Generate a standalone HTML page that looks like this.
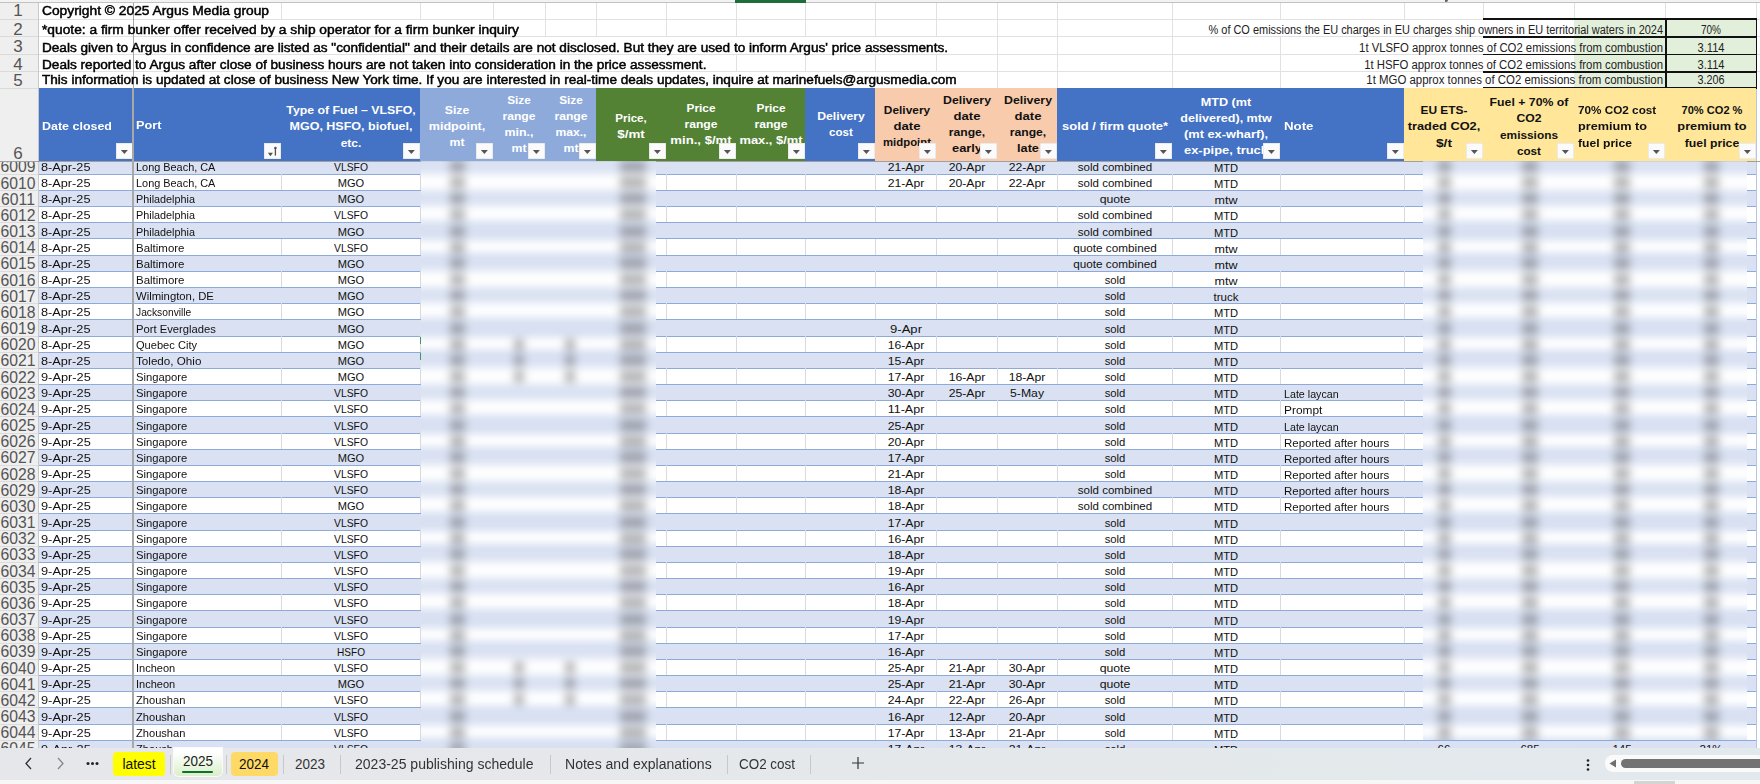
<!DOCTYPE html>
<html><head><meta charset="utf-8"><style>
html,body{margin:0;padding:0;}
body{width:1760px;height:784px;position:relative;overflow:hidden;background:#fff;font-family:"Liberation Sans", sans-serif;}
.t{position:absolute;white-space:nowrap;line-height:1;}
.t span{display:inline-block;}
</style></head><body>
<div style="position:absolute;left:0px;top:0px;width:1760px;height:2px;background:#f3f3f3;"></div><div style="position:absolute;left:0px;top:2px;width:1760px;height:1px;background:#c2c2c2;"></div><div style="position:absolute;left:735px;top:0px;width:71px;height:2.5px;background:#1e6e3c;"></div><div style="position:absolute;left:1444.5px;top:0px;width:3.5px;height:2.2px;background:#3a3a3a;border-radius:0 0 3px 1px;opacity:0.8"></div><div style="position:absolute;left:0px;top:3px;width:38px;height:745px;background:#efefef;"></div><div style="position:absolute;left:38px;top:3px;width:1px;height:745px;background:#c9c9c9;"></div><div style="position:absolute;left:39px;top:19.0px;width:1721px;height:1px;background:#e1e1e1;"></div><div style="position:absolute;left:0px;top:19.0px;width:38px;height:1px;background:#dadada;"></div><div style="position:absolute;left:39px;top:36.25px;width:1721px;height:1px;background:#e1e1e1;"></div><div style="position:absolute;left:0px;top:36.25px;width:38px;height:1px;background:#dadada;"></div><div style="position:absolute;left:39px;top:53.75px;width:1721px;height:1px;background:#e1e1e1;"></div><div style="position:absolute;left:0px;top:53.75px;width:38px;height:1px;background:#dadada;"></div><div style="position:absolute;left:39px;top:71.0px;width:1721px;height:1px;background:#e1e1e1;"></div><div style="position:absolute;left:0px;top:71.0px;width:38px;height:1px;background:#dadada;"></div><div style="position:absolute;left:0px;top:88px;width:38px;height:1px;background:#dadada;"></div><div style="position:absolute;left:280.5px;top:3px;width:1px;height:16.5px;background:#e1e1e1;"></div><div style="position:absolute;left:419.5px;top:3px;width:1px;height:16.5px;background:#e1e1e1;"></div><div style="position:absolute;left:492.5px;top:3px;width:1px;height:16.5px;background:#e1e1e1;"></div><div style="position:absolute;left:544.5px;top:3px;width:1px;height:16.5px;background:#e1e1e1;"></div><div style="position:absolute;left:595.5px;top:3px;width:1px;height:16.5px;background:#e1e1e1;"></div><div style="position:absolute;left:665.5px;top:3px;width:1px;height:16.5px;background:#e1e1e1;"></div><div style="position:absolute;left:735.5px;top:3px;width:1px;height:16.5px;background:#e1e1e1;"></div><div style="position:absolute;left:804.5px;top:3px;width:1px;height:16.5px;background:#e1e1e1;"></div><div style="position:absolute;left:874.5px;top:3px;width:1px;height:16.5px;background:#e1e1e1;"></div><div style="position:absolute;left:935.5px;top:3px;width:1px;height:16.5px;background:#e1e1e1;"></div><div style="position:absolute;left:996.5px;top:3px;width:1px;height:16.5px;background:#e1e1e1;"></div><div style="position:absolute;left:1056.5px;top:3px;width:1px;height:16.5px;background:#e1e1e1;"></div><div style="position:absolute;left:1171.5px;top:3px;width:1px;height:16.5px;background:#e1e1e1;"></div><div style="position:absolute;left:1279.5px;top:3px;width:1px;height:16.5px;background:#e1e1e1;"></div><div style="position:absolute;left:1403.5px;top:3px;width:1px;height:16.5px;background:#e1e1e1;"></div><div style="position:absolute;left:1482.5px;top:3px;width:1px;height:16.5px;background:#e1e1e1;"></div><div style="position:absolute;left:1573.5px;top:3px;width:1px;height:16.5px;background:#e1e1e1;"></div><div style="position:absolute;left:1664.5px;top:3px;width:1px;height:16.5px;background:#e1e1e1;"></div><div style="position:absolute;left:1755.5px;top:3px;width:1px;height:16.5px;background:#e1e1e1;"></div><div style="position:absolute;left:544.5px;top:19.5px;width:1px;height:17.25px;background:#e1e1e1;"></div><div style="position:absolute;left:595.5px;top:19.5px;width:1px;height:17.25px;background:#e1e1e1;"></div><div style="position:absolute;left:665.5px;top:19.5px;width:1px;height:17.25px;background:#e1e1e1;"></div><div style="position:absolute;left:735.5px;top:19.5px;width:1px;height:17.25px;background:#e1e1e1;"></div><div style="position:absolute;left:804.5px;top:19.5px;width:1px;height:17.25px;background:#e1e1e1;"></div><div style="position:absolute;left:874.5px;top:19.5px;width:1px;height:17.25px;background:#e1e1e1;"></div><div style="position:absolute;left:935.5px;top:19.5px;width:1px;height:17.25px;background:#e1e1e1;"></div><div style="position:absolute;left:996.5px;top:19.5px;width:1px;height:17.25px;background:#e1e1e1;"></div><div style="position:absolute;left:1056.5px;top:19.5px;width:1px;height:17.25px;background:#e1e1e1;"></div><div style="position:absolute;left:1171.5px;top:19.5px;width:1px;height:17.25px;background:#e1e1e1;"></div><div style="position:absolute;left:996.5px;top:36.75px;width:1px;height:17.5px;background:#e1e1e1;"></div><div style="position:absolute;left:1056.5px;top:36.75px;width:1px;height:17.5px;background:#e1e1e1;"></div><div style="position:absolute;left:1171.5px;top:36.75px;width:1px;height:17.5px;background:#e1e1e1;"></div><div style="position:absolute;left:1279.5px;top:36.75px;width:1px;height:17.5px;background:#e1e1e1;"></div><div style="position:absolute;left:735.5px;top:54.25px;width:1px;height:17.25px;background:#e1e1e1;"></div><div style="position:absolute;left:804.5px;top:54.25px;width:1px;height:17.25px;background:#e1e1e1;"></div><div style="position:absolute;left:874.5px;top:54.25px;width:1px;height:17.25px;background:#e1e1e1;"></div><div style="position:absolute;left:935.5px;top:54.25px;width:1px;height:17.25px;background:#e1e1e1;"></div><div style="position:absolute;left:996.5px;top:54.25px;width:1px;height:17.25px;background:#e1e1e1;"></div><div style="position:absolute;left:1056.5px;top:54.25px;width:1px;height:17.25px;background:#e1e1e1;"></div><div style="position:absolute;left:1171.5px;top:54.25px;width:1px;height:17.25px;background:#e1e1e1;"></div><div style="position:absolute;left:1279.5px;top:54.25px;width:1px;height:17.25px;background:#e1e1e1;"></div><div style="position:absolute;left:996.5px;top:71.5px;width:1px;height:17.0px;background:#e1e1e1;"></div><div style="position:absolute;left:1056.5px;top:71.5px;width:1px;height:17.0px;background:#e1e1e1;"></div><div style="position:absolute;left:1171.5px;top:71.5px;width:1px;height:17.0px;background:#e1e1e1;"></div><div style="position:absolute;left:1279.5px;top:71.5px;width:1px;height:17.0px;background:#e1e1e1;"></div><div style="position:absolute;left:132.5px;top:3px;width:1px;height:745px;background:#a6a6a6;"></div><div style="position:absolute;left:1574px;top:19px;width:182px;height:69px;background:#e2efda;"></div><div style="position:absolute;left:1483px;top:18.0px;width:274px;height:1.6px;background:#111;"></div><div style="position:absolute;left:1483px;top:36.0px;width:274px;height:1.6px;background:#111;"></div><div style="position:absolute;left:1483px;top:53.5px;width:274px;height:1.6px;background:#111;"></div><div style="position:absolute;left:1483px;top:71.0px;width:274px;height:1.6px;background:#111;"></div><div style="position:absolute;left:1483px;top:87.0px;width:274px;height:1.6px;background:#111;"></div><div style="position:absolute;left:1665px;top:18px;width:1.5px;height:70px;background:#111;"></div><div style="position:absolute;left:1755.5px;top:18px;width:1.6px;height:71px;background:#111;"></div><div class="t" style="left:42px;top:5.00px;font-size:12px;font-weight:normal;color:#000;-webkit-text-stroke:0.45px #000;"><span style="transform:scaleX(1.1486);transform-origin:left">Copyright © 2025 Argus Media group</span></div><div class="t" style="left:42px;top:24.00px;font-size:12px;font-weight:normal;color:#000;-webkit-text-stroke:0.45px #000;"><span style="transform:scaleX(1.1466);transform-origin:left">*quote: a firm bunker offer received by a ship operator for a firm bunker inquiry</span></div><div class="t" style="left:42px;top:42.00px;font-size:12px;font-weight:normal;color:#000;-webkit-text-stroke:0.45px #000;"><span style="transform:scaleX(1.1326);transform-origin:left">Deals given to Argus in confidence are listed as "confidential" and their details are not disclosed. But they are used to inform Argus' price assessments.</span></div><div class="t" style="left:42px;top:59.00px;font-size:12px;font-weight:normal;color:#000;-webkit-text-stroke:0.45px #000;"><span style="transform:scaleX(1.1345);transform-origin:left">Deals reported to Argus after close of business hours are not taken into consideration in the price assessment.</span></div><div class="t" style="left:42px;top:74.00px;font-size:12px;font-weight:normal;color:#000;-webkit-text-stroke:0.45px #000;"><span style="transform:scaleX(1.1312);transform-origin:left">This information is updated at close of business New York time. If you are interested in real-time deals updates, inquire at marinefuels@argusmedia.com</span></div><div class="t" style="left:1662.5px;top:24.00px;font-size:12px;font-weight:normal;color:#222;"><span style="transform:translateX(-100%) scaleX(0.9122);transform-origin:right">% of CO emissions the EU charges in EU charges ship owners in EU territorial waters in 2024</span></div><div class="t" style="left:1662.5px;top:42.00px;font-size:12px;font-weight:normal;color:#222;"><span style="transform:translateX(-100%) scaleX(0.9433);transform-origin:right">1t VLSFO approx tonnes of CO2 emissions from combustion</span></div><div class="t" style="left:1662.5px;top:59.00px;font-size:12px;font-weight:normal;color:#222;"><span style="transform:translateX(-100%) scaleX(0.9451);transform-origin:right">1t HSFO approx tonnes of CO2 emissions from combustion</span></div><div class="t" style="left:1662.5px;top:74.00px;font-size:12px;font-weight:normal;color:#222;"><span style="transform:translateX(-100%) scaleX(0.9526);transform-origin:right">1t MGO approx tonnes of CO2 emissions from combustion</span></div><div class="t" style="left:1711px;top:24.00px;font-size:12px;font-weight:normal;color:#222;"><span style="transform:translateX(-50%) scaleX(0.8322);transform-origin:center">70%</span></div><div class="t" style="left:1711px;top:42.00px;font-size:12px;font-weight:normal;color:#222;"><span style="transform:translateX(-50%) scaleX(0.9265);transform-origin:center">3.114</span></div><div class="t" style="left:1711px;top:59.00px;font-size:12px;font-weight:normal;color:#222;"><span style="transform:translateX(-50%) scaleX(0.9265);transform-origin:center">3.114</span></div><div class="t" style="left:1711px;top:74.00px;font-size:12px;font-weight:normal;color:#222;"><span style="transform:translateX(-50%) scaleX(0.8991);transform-origin:center">3.206</span></div><div class="t" style="left:18px;top:2.00px;font-size:17px;font-weight:normal;color:#555;"><span style="transform:translateX(-50%) scaleX(1.0000);transform-origin:center">1</span></div><div class="t" style="left:18px;top:21.00px;font-size:17px;font-weight:normal;color:#555;"><span style="transform:translateX(-50%) scaleX(1.0000);transform-origin:center">2</span></div><div class="t" style="left:18px;top:38.00px;font-size:17px;font-weight:normal;color:#555;"><span style="transform:translateX(-50%) scaleX(1.0000);transform-origin:center">3</span></div><div class="t" style="left:18px;top:56.00px;font-size:17px;font-weight:normal;color:#555;"><span style="transform:translateX(-50%) scaleX(1.0000);transform-origin:center">4</span></div><div class="t" style="left:18px;top:72.00px;font-size:17px;font-weight:normal;color:#555;"><span style="transform:translateX(-50%) scaleX(1.0000);transform-origin:center">5</span></div><div class="t" style="left:18px;top:145.00px;font-size:17px;font-weight:normal;color:#555;"><span style="transform:translateX(-50%) scaleX(1.0000);transform-origin:center">6</span></div><div style="position:absolute;left:39px;top:88px;width:94px;height:72.5px;background:#4472c4;"></div><div style="position:absolute;left:133px;top:88px;width:148px;height:72.5px;background:#4472c4;"></div><div style="position:absolute;left:281px;top:88px;width:139px;height:72.5px;background:#4472c4;"></div><div style="position:absolute;left:420px;top:88px;width:73px;height:72.5px;background:#8eaadb;"></div><div style="position:absolute;left:493px;top:88px;width:52px;height:72.5px;background:#8eaadb;"></div><div style="position:absolute;left:545px;top:88px;width:51px;height:72.5px;background:#8eaadb;"></div><div style="position:absolute;left:596px;top:88px;width:70px;height:72.5px;background:#548235;"></div><div style="position:absolute;left:666px;top:88px;width:70px;height:72.5px;background:#548235;"></div><div style="position:absolute;left:736px;top:88px;width:69px;height:72.5px;background:#548235;"></div><div style="position:absolute;left:805px;top:88px;width:70px;height:72.5px;background:#4472c4;"></div><div style="position:absolute;left:875px;top:88px;width:61px;height:72.5px;background:#f8cbad;"></div><div style="position:absolute;left:936px;top:88px;width:61px;height:72.5px;background:#f8cbad;"></div><div style="position:absolute;left:997px;top:88px;width:60px;height:72.5px;background:#f8cbad;"></div><div style="position:absolute;left:1057px;top:88px;width:115px;height:72.5px;background:#4472c4;"></div><div style="position:absolute;left:1172px;top:88px;width:108px;height:72.5px;background:#4472c4;"></div><div style="position:absolute;left:1280px;top:88px;width:124px;height:72.5px;background:#4472c4;"></div><div style="position:absolute;left:1404px;top:88px;width:79px;height:72.5px;background:#ffe699;"></div><div style="position:absolute;left:1483px;top:88px;width:91px;height:72.5px;background:#ffe699;"></div><div style="position:absolute;left:1574px;top:88px;width:91px;height:72.5px;background:#ffe699;"></div><div style="position:absolute;left:1665px;top:88px;width:91px;height:72.5px;background:#ffe699;"></div><div style="position:absolute;left:1756px;top:88.5px;width:1px;height:660px;background:#b4c6e7;"></div><div style="position:absolute;left:0;top:0;width:1760px;height:784px;clip-path:inset(88px 1627px 623.5px 39px)"><div class="t" style="left:42px;top:121.00px;font-size:11.5px;font-weight:bold;color:#fff;"><span style="transform:scaleX(1.0842);transform-origin:left">Date closed</span></div></div><div style="position:absolute;left:0;top:0;width:1760px;height:784px;clip-path:inset(88px 1479px 623.5px 133px)"><div class="t" style="left:136.25px;top:120.00px;font-size:11.5px;font-weight:bold;color:#fff;"><span style="transform:scaleX(1.1043);transform-origin:left">Port</span></div></div><div style="position:absolute;left:0;top:0;width:1760px;height:784px;clip-path:inset(88px 1340px 623.5px 281px)"><div class="t" style="left:351.3px;top:105.00px;font-size:11.5px;font-weight:bold;color:#fff;"><span style="transform:translateX(-50%) scaleX(1.0676);transform-origin:center">Type of Fuel – VLSFO,</span></div><div class="t" style="left:351.3px;top:121.00px;font-size:11.5px;font-weight:bold;color:#fff;"><span style="transform:translateX(-50%) scaleX(1.0876);transform-origin:center">MGO, HSFO, biofuel,</span></div><div class="t" style="left:351.3px;top:138.00px;font-size:11.5px;font-weight:bold;color:#fff;"><span style="transform:translateX(-50%) scaleX(1.0389);transform-origin:center">etc.</span></div></div><div style="position:absolute;left:0;top:0;width:1760px;height:784px;clip-path:inset(88px 1267px 623.5px 420px)"><div class="t" style="left:457.3px;top:105.00px;font-size:11.5px;font-weight:bold;color:#fff;"><span style="transform:translateX(-50%) scaleX(1.0645);transform-origin:center">Size</span></div><div class="t" style="left:457.3px;top:121.00px;font-size:11.5px;font-weight:bold;color:#fff;"><span style="transform:translateX(-50%) scaleX(1.0918);transform-origin:center">midpoint,</span></div><div class="t" style="left:457.3px;top:137.00px;font-size:11.5px;font-weight:bold;color:#fff;"><span style="transform:translateX(-50%) scaleX(1.0667);transform-origin:center">mt</span></div></div><div style="position:absolute;left:0;top:0;width:1760px;height:784px;clip-path:inset(88px 1215px 623.5px 493px)"><div class="t" style="left:518.75px;top:95.00px;font-size:11.5px;font-weight:bold;color:#fff;"><span style="transform:translateX(-50%) scaleX(1.0210);transform-origin:center">Size</span></div><div class="t" style="left:518.75px;top:111.00px;font-size:11.5px;font-weight:bold;color:#fff;"><span style="transform:translateX(-50%) scaleX(1.0534);transform-origin:center">range</span></div><div class="t" style="left:518.75px;top:127.00px;font-size:11.5px;font-weight:bold;color:#fff;"><span style="transform:translateX(-50%) scaleX(1.0803);transform-origin:center">min.,</span></div><div class="t" style="left:518.75px;top:143.00px;font-size:11.5px;font-weight:bold;color:#fff;"><span style="transform:translateX(-50%) scaleX(1.0667);transform-origin:center">mt</span></div></div><div style="position:absolute;left:0;top:0;width:1760px;height:784px;clip-path:inset(88px 1164px 623.5px 545px)"><div class="t" style="left:570.5px;top:95.00px;font-size:11.5px;font-weight:bold;color:#fff;"><span style="transform:translateX(-50%) scaleX(1.0210);transform-origin:center">Size</span></div><div class="t" style="left:570.5px;top:111.00px;font-size:11.5px;font-weight:bold;color:#fff;"><span style="transform:translateX(-50%) scaleX(1.0534);transform-origin:center">range</span></div><div class="t" style="left:570.5px;top:127.00px;font-size:11.5px;font-weight:bold;color:#fff;"><span style="transform:translateX(-50%) scaleX(1.0536);transform-origin:center">max.,</span></div><div class="t" style="left:570.5px;top:143.00px;font-size:11.5px;font-weight:bold;color:#fff;"><span style="transform:translateX(-50%) scaleX(1.0667);transform-origin:center">mt</span></div></div><div style="position:absolute;left:0;top:0;width:1760px;height:784px;clip-path:inset(88px 1094px 623.5px 596px)"><div class="t" style="left:631px;top:113.00px;font-size:11.5px;font-weight:bold;color:#fff;"><span style="transform:translateX(-50%) scaleX(1.0055);transform-origin:center">Price,</span></div><div class="t" style="left:631px;top:129.00px;font-size:11.5px;font-weight:bold;color:#fff;"><span style="transform:translateX(-50%) scaleX(1.1625);transform-origin:center">$/mt</span></div></div><div style="position:absolute;left:0;top:0;width:1760px;height:784px;clip-path:inset(88px 1024px 623.5px 666px)"><div class="t" style="left:701.2px;top:103.00px;font-size:11.5px;font-weight:bold;color:#fff;"><span style="transform:translateX(-50%) scaleX(1.0305);transform-origin:center">Price</span></div><div class="t" style="left:701.2px;top:119.00px;font-size:11.5px;font-weight:bold;color:#fff;"><span style="transform:translateX(-50%) scaleX(1.0534);transform-origin:center">range</span></div><div class="t" style="left:701.2px;top:135.00px;font-size:11.5px;font-weight:bold;color:#fff;"><span style="transform:translateX(-50%) scaleX(1.1418);transform-origin:center">min., $/mt</span></div></div><div style="position:absolute;left:0;top:0;width:1760px;height:784px;clip-path:inset(88px 955px 623.5px 736px)"><div class="t" style="left:771px;top:103.00px;font-size:11.5px;font-weight:bold;color:#fff;"><span style="transform:translateX(-50%) scaleX(1.0305);transform-origin:center">Price</span></div><div class="t" style="left:771px;top:119.00px;font-size:11.5px;font-weight:bold;color:#fff;"><span style="transform:translateX(-50%) scaleX(1.0534);transform-origin:center">range</span></div><div class="t" style="left:771px;top:135.00px;font-size:11.5px;font-weight:bold;color:#fff;"><span style="transform:translateX(-50%) scaleX(1.1200);transform-origin:center">max., $/mt</span></div></div><div style="position:absolute;left:0;top:0;width:1760px;height:784px;clip-path:inset(88px 885px 623.5px 805px)"><div class="t" style="left:840.6px;top:111.00px;font-size:11.5px;font-weight:bold;color:#fff;"><span style="transform:translateX(-50%) scaleX(1.0611);transform-origin:center">Delivery</span></div><div class="t" style="left:840.6px;top:127.00px;font-size:11.5px;font-weight:bold;color:#fff;"><span style="transform:translateX(-50%) scaleX(1.0040);transform-origin:center">cost</span></div></div><div style="position:absolute;left:0;top:0;width:1760px;height:784px;clip-path:inset(88px 824px 623.5px 875px)"><div class="t" style="left:906.5px;top:105.00px;font-size:11.5px;font-weight:bold;color:#111;"><span style="transform:translateX(-50%) scaleX(1.0332);transform-origin:center">Delivery</span></div><div class="t" style="left:906.5px;top:121.00px;font-size:11.5px;font-weight:bold;color:#111;"><span style="transform:translateX(-50%) scaleX(1.1413);transform-origin:center">date</span></div><div class="t" style="left:906.5px;top:137.00px;font-size:11.5px;font-weight:bold;color:#111;"><span style="transform:translateX(-50%) scaleX(0.9887);transform-origin:center">midpoint</span></div></div><div style="position:absolute;left:0;top:0;width:1760px;height:784px;clip-path:inset(88px 763px 623.5px 936px)"><div class="t" style="left:967px;top:95.00px;font-size:11.5px;font-weight:bold;color:#111;"><span style="transform:translateX(-50%) scaleX(1.0723);transform-origin:center">Delivery</span></div><div class="t" style="left:967px;top:111.00px;font-size:11.5px;font-weight:bold;color:#111;"><span style="transform:translateX(-50%) scaleX(1.1413);transform-origin:center">date</span></div><div class="t" style="left:967px;top:127.00px;font-size:11.5px;font-weight:bold;color:#111;"><span style="transform:translateX(-50%) scaleX(1.0575);transform-origin:center">range,</span></div><div class="t" style="left:967px;top:143.00px;font-size:11.5px;font-weight:bold;color:#111;"><span style="transform:translateX(-50%) scaleX(1.1169);transform-origin:center">early</span></div></div><div style="position:absolute;left:0;top:0;width:1760px;height:784px;clip-path:inset(88px 703px 623.5px 997px)"><div class="t" style="left:1027.75px;top:95.00px;font-size:11.5px;font-weight:bold;color:#111;"><span style="transform:translateX(-50%) scaleX(1.0723);transform-origin:center">Delivery</span></div><div class="t" style="left:1027.75px;top:111.00px;font-size:11.5px;font-weight:bold;color:#111;"><span style="transform:translateX(-50%) scaleX(1.1413);transform-origin:center">date</span></div><div class="t" style="left:1027.75px;top:127.00px;font-size:11.5px;font-weight:bold;color:#111;"><span style="transform:translateX(-50%) scaleX(1.0575);transform-origin:center">range,</span></div><div class="t" style="left:1027.75px;top:143.00px;font-size:11.5px;font-weight:bold;color:#111;"><span style="transform:translateX(-50%) scaleX(1.1045);transform-origin:center">late</span></div></div><div style="position:absolute;left:0;top:0;width:1760px;height:784px;clip-path:inset(88px 588px 623.5px 1057px)"><div class="t" style="left:1114.6px;top:121.00px;font-size:11.5px;font-weight:bold;color:#fff;"><span style="transform:translateX(-50%) scaleX(1.1286);transform-origin:center">sold / firm quote*</span></div></div><div style="position:absolute;left:0;top:0;width:1760px;height:784px;clip-path:inset(88px 480px 623.5px 1172px)"><div class="t" style="left:1226px;top:97.00px;font-size:11.5px;font-weight:bold;color:#fff;"><span style="transform:translateX(-50%) scaleX(1.0978);transform-origin:center">MTD (mt</span></div><div class="t" style="left:1226px;top:113.00px;font-size:11.5px;font-weight:bold;color:#fff;"><span style="transform:translateX(-50%) scaleX(1.0929);transform-origin:center">delivered), mtw</span></div><div class="t" style="left:1226px;top:129.00px;font-size:11.5px;font-weight:bold;color:#fff;"><span style="transform:translateX(-50%) scaleX(1.1140);transform-origin:center">(mt ex-wharf),</span></div><div class="t" style="left:1226px;top:145.00px;font-size:11.5px;font-weight:bold;color:#fff;"><span style="transform:translateX(-50%) scaleX(1.1233);transform-origin:center">ex-pipe, truck</span></div></div><div style="position:absolute;left:0;top:0;width:1760px;height:784px;clip-path:inset(88px 356px 623.5px 1280px)"><div class="t" style="left:1283.5px;top:121.00px;font-size:11.5px;font-weight:bold;color:#fff;"><span style="transform:scaleX(1.1540);transform-origin:left">Note</span></div></div><div style="position:absolute;left:0;top:0;width:1760px;height:784px;clip-path:inset(88px 277px 623.5px 1404px)"><div class="t" style="left:1444.2px;top:105.00px;font-size:11.5px;font-weight:bold;color:#111;"><span style="transform:translateX(-50%) scaleX(1.0358);transform-origin:center">EU ETS-</span></div><div class="t" style="left:1444.2px;top:121.00px;font-size:11.5px;font-weight:bold;color:#111;"><span style="transform:translateX(-50%) scaleX(1.1122);transform-origin:center">traded CO2,</span></div><div class="t" style="left:1444.2px;top:138.00px;font-size:11.5px;font-weight:bold;color:#111;"><span style="transform:translateX(-50%) scaleX(1.1921);transform-origin:center">$/t</span></div></div><div style="position:absolute;left:0;top:0;width:1760px;height:784px;clip-path:inset(88px 186px 623.5px 1483px)"><div class="t" style="left:1529px;top:97.00px;font-size:11.5px;font-weight:bold;color:#111;"><span style="transform:translateX(-50%) scaleX(1.0669);transform-origin:center">Fuel + 70% of</span></div><div class="t" style="left:1529px;top:113.00px;font-size:11.5px;font-weight:bold;color:#111;"><span style="transform:translateX(-50%) scaleX(1.0568);transform-origin:center">CO2</span></div><div class="t" style="left:1529px;top:130.00px;font-size:11.5px;font-weight:bold;color:#111;"><span style="transform:translateX(-50%) scaleX(1.0311);transform-origin:center">emissions</span></div><div class="t" style="left:1529px;top:146.00px;font-size:11.5px;font-weight:bold;color:#111;"><span style="transform:translateX(-50%) scaleX(1.0145);transform-origin:center">cost</span></div></div><div style="position:absolute;left:0;top:0;width:1760px;height:784px;clip-path:inset(88px 95px 623.5px 1574px)"><div class="t" style="left:1578px;top:105.00px;font-size:11.5px;font-weight:bold;color:#111;"><span style="transform:scaleX(1.0202);transform-origin:left">70% CO2 cost</span></div><div class="t" style="left:1578px;top:121.00px;font-size:11.5px;font-weight:bold;color:#111;"><span style="transform:scaleX(1.1018);transform-origin:left">premium to</span></div><div class="t" style="left:1578px;top:138.00px;font-size:11.5px;font-weight:bold;color:#111;"><span style="transform:scaleX(1.0559);transform-origin:left">fuel price</span></div></div><div style="position:absolute;left:0;top:0;width:1760px;height:784px;clip-path:inset(88px 4px 623.5px 1665px)"><div class="t" style="left:1711.7px;top:105.00px;font-size:11.5px;font-weight:bold;color:#111;"><span style="transform:translateX(-50%) scaleX(0.9624);transform-origin:center">70% CO2 %</span></div><div class="t" style="left:1711.7px;top:121.00px;font-size:11.5px;font-weight:bold;color:#111;"><span style="transform:translateX(-50%) scaleX(1.1058);transform-origin:center">premium to</span></div><div class="t" style="left:1711.7px;top:138.00px;font-size:11.5px;font-weight:bold;color:#111;"><span style="transform:translateX(-50%) scaleX(1.0637);transform-origin:center">fuel price</span></div></div><div style="position:absolute;left:116px;top:142.5px;width:16.5px;height:16.5px;background:#fbfbfb;box-shadow:inset 0 0 0 0.5px #dcdcdc;overflow:hidden"><svg width="17" height="17" style="position:absolute;left:0;top:0"><path d="M4.9 7 L11.9 7 L8.4 11 Z" fill="#555"/></svg></div><div style="position:absolute;left:264px;top:142.5px;width:16.5px;height:16.5px;background:#fbfbfb;box-shadow:inset 0 0 0 0.5px #dcdcdc;overflow:hidden"><svg width="17" height="17" style="position:absolute;left:0;top:0"><path d="M3.9 9.8 L8.9 9.8 L6.4 13.2 Z" fill="#505050"/><path d="M11.4 5 L11.4 12.6" stroke="#505050" stroke-width="1.3"/><circle cx="11.4" cy="5" r="1.3" fill="#505050"/></svg></div><div style="position:absolute;left:403px;top:142.5px;width:16.5px;height:16.5px;background:#fbfbfb;box-shadow:inset 0 0 0 0.5px #dcdcdc;overflow:hidden"><svg width="17" height="17" style="position:absolute;left:0;top:0"><path d="M4.9 7 L11.9 7 L8.4 11 Z" fill="#555"/></svg></div><div style="position:absolute;left:476px;top:142.5px;width:16.5px;height:16.5px;background:#fbfbfb;box-shadow:inset 0 0 0 0.5px #dcdcdc;overflow:hidden"><svg width="17" height="17" style="position:absolute;left:0;top:0"><path d="M4.9 7 L11.9 7 L8.4 11 Z" fill="#555"/></svg></div><div style="position:absolute;left:528px;top:142.5px;width:16.5px;height:16.5px;background:#fbfbfb;box-shadow:inset 0 0 0 0.5px #dcdcdc;overflow:hidden"><svg width="17" height="17" style="position:absolute;left:0;top:0"><path d="M4.9 7 L11.9 7 L8.4 11 Z" fill="#555"/></svg></div><div style="position:absolute;left:579px;top:142.5px;width:16.5px;height:16.5px;background:#fbfbfb;box-shadow:inset 0 0 0 0.5px #dcdcdc;overflow:hidden"><svg width="17" height="17" style="position:absolute;left:0;top:0"><path d="M4.9 7 L11.9 7 L8.4 11 Z" fill="#555"/></svg></div><div style="position:absolute;left:649px;top:142.5px;width:16.5px;height:16.5px;background:#fbfbfb;box-shadow:inset 0 0 0 0.5px #dcdcdc;overflow:hidden"><svg width="17" height="17" style="position:absolute;left:0;top:0"><path d="M4.9 7 L11.9 7 L8.4 11 Z" fill="#555"/></svg></div><div style="position:absolute;left:719px;top:142.5px;width:16.5px;height:16.5px;background:#fbfbfb;box-shadow:inset 0 0 0 0.5px #dcdcdc;overflow:hidden"><svg width="17" height="17" style="position:absolute;left:0;top:0"><path d="M4.9 7 L11.9 7 L8.4 11 Z" fill="#555"/></svg></div><div style="position:absolute;left:788px;top:142.5px;width:16.5px;height:16.5px;background:#fbfbfb;box-shadow:inset 0 0 0 0.5px #dcdcdc;overflow:hidden"><svg width="17" height="17" style="position:absolute;left:0;top:0"><path d="M4.9 7 L11.9 7 L8.4 11 Z" fill="#555"/></svg></div><div style="position:absolute;left:858px;top:142.5px;width:16.5px;height:16.5px;background:#fbfbfb;box-shadow:inset 0 0 0 0.5px #dcdcdc;overflow:hidden"><svg width="17" height="17" style="position:absolute;left:0;top:0"><path d="M4.9 7 L11.9 7 L8.4 11 Z" fill="#555"/></svg></div><div style="position:absolute;left:919px;top:142.5px;width:16.5px;height:16.5px;background:#fbfbfb;box-shadow:inset 0 0 0 0.5px #dcdcdc;overflow:hidden"><svg width="17" height="17" style="position:absolute;left:0;top:0"><path d="M4.9 7 L11.9 7 L8.4 11 Z" fill="#555"/></svg></div><div style="position:absolute;left:980px;top:142.5px;width:16.5px;height:16.5px;background:#fbfbfb;box-shadow:inset 0 0 0 0.5px #dcdcdc;overflow:hidden"><svg width="17" height="17" style="position:absolute;left:0;top:0"><path d="M4.9 7 L11.9 7 L8.4 11 Z" fill="#555"/></svg></div><div style="position:absolute;left:1040px;top:142.5px;width:16.5px;height:16.5px;background:#fbfbfb;box-shadow:inset 0 0 0 0.5px #dcdcdc;overflow:hidden"><svg width="17" height="17" style="position:absolute;left:0;top:0"><path d="M4.9 7 L11.9 7 L8.4 11 Z" fill="#555"/></svg></div><div style="position:absolute;left:1155px;top:142.5px;width:16.5px;height:16.5px;background:#fbfbfb;box-shadow:inset 0 0 0 0.5px #dcdcdc;overflow:hidden"><svg width="17" height="17" style="position:absolute;left:0;top:0"><path d="M4.9 7 L11.9 7 L8.4 11 Z" fill="#555"/></svg></div><div style="position:absolute;left:1263px;top:142.5px;width:16.5px;height:16.5px;background:#fbfbfb;box-shadow:inset 0 0 0 0.5px #dcdcdc;overflow:hidden"><svg width="17" height="17" style="position:absolute;left:0;top:0"><path d="M4.9 7 L11.9 7 L8.4 11 Z" fill="#555"/></svg></div><div style="position:absolute;left:1387px;top:142.5px;width:16.5px;height:16.5px;background:#fbfbfb;box-shadow:inset 0 0 0 0.5px #dcdcdc;overflow:hidden"><svg width="17" height="17" style="position:absolute;left:0;top:0"><path d="M4.9 7 L11.9 7 L8.4 11 Z" fill="#555"/></svg></div><div style="position:absolute;left:1466px;top:142.5px;width:16.5px;height:16.5px;background:#fbfbfb;box-shadow:inset 0 0 0 0.5px #dcdcdc;overflow:hidden"><svg width="17" height="17" style="position:absolute;left:0;top:0"><path d="M4.9 7 L11.9 7 L8.4 11 Z" fill="#555"/></svg></div><div style="position:absolute;left:1557px;top:142.5px;width:16.5px;height:16.5px;background:#fbfbfb;box-shadow:inset 0 0 0 0.5px #dcdcdc;overflow:hidden"><svg width="17" height="17" style="position:absolute;left:0;top:0"><path d="M4.9 7 L11.9 7 L8.4 11 Z" fill="#555"/></svg></div><div style="position:absolute;left:1648px;top:142.5px;width:16.5px;height:16.5px;background:#fbfbfb;box-shadow:inset 0 0 0 0.5px #dcdcdc;overflow:hidden"><svg width="17" height="17" style="position:absolute;left:0;top:0"><path d="M4.9 7 L11.9 7 L8.4 11 Z" fill="#555"/></svg></div><div style="position:absolute;left:1739px;top:142.5px;width:16.5px;height:16.5px;background:#fbfbfb;box-shadow:inset 0 0 0 0.5px #dcdcdc;overflow:hidden"><svg width="17" height="17" style="position:absolute;left:0;top:0"><path d="M4.9 7 L11.9 7 L8.4 11 Z" fill="#555"/></svg></div><div style="position:absolute;left:0;top:161px;width:1760px;height:587px;overflow:hidden"><div style="position:absolute;left:39px;top:-3.1709999999999923px;width:1717px;height:16.671px;background:#d9e1f2;"></div><div style="position:absolute;left:0px;top:-3.1709999999999923px;width:38px;height:16.671px;background:#efefef;"></div><div style="position:absolute;left:39px;top:13.0px;width:1717px;height:16.671px;background:#fff;"></div><div style="position:absolute;left:0px;top:13.0px;width:38px;height:16.671px;background:#efefef;"></div><div style="position:absolute;left:39px;top:29.170999999999992px;width:1717px;height:16.671px;background:#d9e1f2;"></div><div style="position:absolute;left:0px;top:29.170999999999992px;width:38px;height:16.671px;background:#efefef;"></div><div style="position:absolute;left:39px;top:45.341999999999985px;width:1717px;height:16.671px;background:#fff;"></div><div style="position:absolute;left:0px;top:45.341999999999985px;width:38px;height:16.671px;background:#efefef;"></div><div style="position:absolute;left:39px;top:61.513000000000005px;width:1717px;height:16.671px;background:#d9e1f2;"></div><div style="position:absolute;left:0px;top:61.513000000000005px;width:38px;height:16.671px;background:#efefef;"></div><div style="position:absolute;left:39px;top:77.684px;width:1717px;height:16.671px;background:#fff;"></div><div style="position:absolute;left:0px;top:77.684px;width:38px;height:16.671px;background:#efefef;"></div><div style="position:absolute;left:39px;top:93.85499999999999px;width:1717px;height:16.671px;background:#d9e1f2;"></div><div style="position:absolute;left:0px;top:93.85499999999999px;width:38px;height:16.671px;background:#efefef;"></div><div style="position:absolute;left:39px;top:110.02600000000001px;width:1717px;height:16.671px;background:#fff;"></div><div style="position:absolute;left:0px;top:110.02600000000001px;width:38px;height:16.671px;background:#efefef;"></div><div style="position:absolute;left:39px;top:126.197px;width:1717px;height:16.671px;background:#d9e1f2;"></div><div style="position:absolute;left:0px;top:126.197px;width:38px;height:16.671px;background:#efefef;"></div><div style="position:absolute;left:39px;top:142.368px;width:1717px;height:16.671px;background:#fff;"></div><div style="position:absolute;left:0px;top:142.368px;width:38px;height:16.671px;background:#efefef;"></div><div style="position:absolute;left:39px;top:158.539px;width:1717px;height:16.671px;background:#d9e1f2;"></div><div style="position:absolute;left:0px;top:158.539px;width:38px;height:16.671px;background:#efefef;"></div><div style="position:absolute;left:39px;top:174.70999999999998px;width:1717px;height:16.671px;background:#fff;"></div><div style="position:absolute;left:0px;top:174.70999999999998px;width:38px;height:16.671px;background:#efefef;"></div><div style="position:absolute;left:39px;top:190.88099999999997px;width:1717px;height:16.671px;background:#d9e1f2;"></div><div style="position:absolute;left:0px;top:190.88099999999997px;width:38px;height:16.671px;background:#efefef;"></div><div style="position:absolute;left:39px;top:207.05200000000002px;width:1717px;height:16.671px;background:#fff;"></div><div style="position:absolute;left:0px;top:207.05200000000002px;width:38px;height:16.671px;background:#efefef;"></div><div style="position:absolute;left:39px;top:223.22299999999996px;width:1717px;height:16.671px;background:#d9e1f2;"></div><div style="position:absolute;left:0px;top:223.22299999999996px;width:38px;height:16.671px;background:#efefef;"></div><div style="position:absolute;left:39px;top:239.394px;width:1717px;height:16.671px;background:#fff;"></div><div style="position:absolute;left:0px;top:239.394px;width:38px;height:16.671px;background:#efefef;"></div><div style="position:absolute;left:39px;top:255.565px;width:1717px;height:16.671px;background:#d9e1f2;"></div><div style="position:absolute;left:0px;top:255.565px;width:38px;height:16.671px;background:#efefef;"></div><div style="position:absolute;left:39px;top:271.736px;width:1717px;height:16.671px;background:#fff;"></div><div style="position:absolute;left:0px;top:271.736px;width:38px;height:16.671px;background:#efefef;"></div><div style="position:absolute;left:39px;top:287.907px;width:1717px;height:16.671px;background:#d9e1f2;"></div><div style="position:absolute;left:0px;top:287.907px;width:38px;height:16.671px;background:#efefef;"></div><div style="position:absolute;left:39px;top:304.078px;width:1717px;height:16.671px;background:#fff;"></div><div style="position:absolute;left:0px;top:304.078px;width:38px;height:16.671px;background:#efefef;"></div><div style="position:absolute;left:39px;top:320.24899999999997px;width:1717px;height:16.671px;background:#d9e1f2;"></div><div style="position:absolute;left:0px;top:320.24899999999997px;width:38px;height:16.671px;background:#efefef;"></div><div style="position:absolute;left:39px;top:336.41999999999996px;width:1717px;height:16.671px;background:#fff;"></div><div style="position:absolute;left:0px;top:336.41999999999996px;width:38px;height:16.671px;background:#efefef;"></div><div style="position:absolute;left:39px;top:352.591px;width:1717px;height:16.671px;background:#d9e1f2;"></div><div style="position:absolute;left:0px;top:352.591px;width:38px;height:16.671px;background:#efefef;"></div><div style="position:absolute;left:39px;top:368.76199999999994px;width:1717px;height:16.671px;background:#fff;"></div><div style="position:absolute;left:0px;top:368.76199999999994px;width:38px;height:16.671px;background:#efefef;"></div><div style="position:absolute;left:39px;top:384.933px;width:1717px;height:16.671px;background:#d9e1f2;"></div><div style="position:absolute;left:0px;top:384.933px;width:38px;height:16.671px;background:#efefef;"></div><div style="position:absolute;left:39px;top:401.10400000000004px;width:1717px;height:16.671px;background:#fff;"></div><div style="position:absolute;left:0px;top:401.10400000000004px;width:38px;height:16.671px;background:#efefef;"></div><div style="position:absolute;left:39px;top:417.275px;width:1717px;height:16.671px;background:#d9e1f2;"></div><div style="position:absolute;left:0px;top:417.275px;width:38px;height:16.671px;background:#efefef;"></div><div style="position:absolute;left:39px;top:433.4459999999999px;width:1717px;height:16.671px;background:#fff;"></div><div style="position:absolute;left:0px;top:433.4459999999999px;width:38px;height:16.671px;background:#efefef;"></div><div style="position:absolute;left:39px;top:449.61699999999996px;width:1717px;height:16.671px;background:#d9e1f2;"></div><div style="position:absolute;left:0px;top:449.61699999999996px;width:38px;height:16.671px;background:#efefef;"></div><div style="position:absolute;left:39px;top:465.788px;width:1717px;height:16.671px;background:#fff;"></div><div style="position:absolute;left:0px;top:465.788px;width:38px;height:16.671px;background:#efefef;"></div><div style="position:absolute;left:39px;top:481.95900000000006px;width:1717px;height:16.671px;background:#d9e1f2;"></div><div style="position:absolute;left:0px;top:481.95900000000006px;width:38px;height:16.671px;background:#efefef;"></div><div style="position:absolute;left:39px;top:498.13px;width:1717px;height:16.671px;background:#fff;"></div><div style="position:absolute;left:0px;top:498.13px;width:38px;height:16.671px;background:#efefef;"></div><div style="position:absolute;left:39px;top:514.3009999999999px;width:1717px;height:16.671px;background:#d9e1f2;"></div><div style="position:absolute;left:0px;top:514.3009999999999px;width:38px;height:16.671px;background:#efefef;"></div><div style="position:absolute;left:39px;top:530.472px;width:1717px;height:16.671px;background:#fff;"></div><div style="position:absolute;left:0px;top:530.472px;width:38px;height:16.671px;background:#efefef;"></div><div style="position:absolute;left:39px;top:546.643px;width:1717px;height:16.671px;background:#d9e1f2;"></div><div style="position:absolute;left:0px;top:546.643px;width:38px;height:16.671px;background:#efefef;"></div><div style="position:absolute;left:39px;top:562.814px;width:1717px;height:16.671px;background:#fff;"></div><div style="position:absolute;left:0px;top:562.814px;width:38px;height:16.671px;background:#efefef;"></div><div style="position:absolute;left:39px;top:578.985px;width:1717px;height:16.671px;background:#d9e1f2;"></div><div style="position:absolute;left:0px;top:578.985px;width:38px;height:16.671px;background:#efefef;"></div><div style="position:absolute;left:39px;top:12.5px;width:1717px;height:1px;background:#8eaadb;"></div><div style="position:absolute;left:0px;top:13px;width:38px;height:1px;background:#dcdcdc;"></div><div style="position:absolute;left:280.5px;top:13.0px;width:1px;height:16.171px;background:#dadada;"></div><div style="position:absolute;left:419.5px;top:13.0px;width:1px;height:16.171px;background:#dadada;"></div><div style="position:absolute;left:492.5px;top:13.0px;width:1px;height:16.171px;background:#dadada;"></div><div style="position:absolute;left:544.5px;top:13.0px;width:1px;height:16.171px;background:#dadada;"></div><div style="position:absolute;left:595.5px;top:13.0px;width:1px;height:16.171px;background:#dadada;"></div><div style="position:absolute;left:665.5px;top:13.0px;width:1px;height:16.171px;background:#dadada;"></div><div style="position:absolute;left:735.5px;top:13.0px;width:1px;height:16.171px;background:#dadada;"></div><div style="position:absolute;left:804.5px;top:13.0px;width:1px;height:16.171px;background:#dadada;"></div><div style="position:absolute;left:874.5px;top:13.0px;width:1px;height:16.171px;background:#dadada;"></div><div style="position:absolute;left:935.5px;top:13.0px;width:1px;height:16.171px;background:#dadada;"></div><div style="position:absolute;left:996.5px;top:13.0px;width:1px;height:16.171px;background:#dadada;"></div><div style="position:absolute;left:1056.5px;top:13.0px;width:1px;height:16.171px;background:#dadada;"></div><div style="position:absolute;left:1171.5px;top:13.0px;width:1px;height:16.171px;background:#dadada;"></div><div style="position:absolute;left:1279.5px;top:13.0px;width:1px;height:16.171px;background:#dadada;"></div><div style="position:absolute;left:1403.5px;top:13.0px;width:1px;height:16.171px;background:#dadada;"></div><div style="position:absolute;left:1482.5px;top:13.0px;width:1px;height:16.171px;background:#dadada;"></div><div style="position:absolute;left:1573.5px;top:13.0px;width:1px;height:16.171px;background:#dadada;"></div><div style="position:absolute;left:1664.5px;top:13.0px;width:1px;height:16.171px;background:#dadada;"></div><div style="position:absolute;left:39px;top:28.5px;width:1717px;height:1px;background:#8eaadb;"></div><div style="position:absolute;left:0px;top:29px;width:38px;height:1px;background:#dcdcdc;"></div><div style="position:absolute;left:39px;top:44.5px;width:1717px;height:1px;background:#8eaadb;"></div><div style="position:absolute;left:0px;top:45px;width:38px;height:1px;background:#dcdcdc;"></div><div style="position:absolute;left:280.5px;top:45.341999999999985px;width:1px;height:16.171px;background:#dadada;"></div><div style="position:absolute;left:419.5px;top:45.341999999999985px;width:1px;height:16.171px;background:#dadada;"></div><div style="position:absolute;left:492.5px;top:45.341999999999985px;width:1px;height:16.171px;background:#dadada;"></div><div style="position:absolute;left:544.5px;top:45.341999999999985px;width:1px;height:16.171px;background:#dadada;"></div><div style="position:absolute;left:595.5px;top:45.341999999999985px;width:1px;height:16.171px;background:#dadada;"></div><div style="position:absolute;left:665.5px;top:45.341999999999985px;width:1px;height:16.171px;background:#dadada;"></div><div style="position:absolute;left:735.5px;top:45.341999999999985px;width:1px;height:16.171px;background:#dadada;"></div><div style="position:absolute;left:804.5px;top:45.341999999999985px;width:1px;height:16.171px;background:#dadada;"></div><div style="position:absolute;left:874.5px;top:45.341999999999985px;width:1px;height:16.171px;background:#dadada;"></div><div style="position:absolute;left:935.5px;top:45.341999999999985px;width:1px;height:16.171px;background:#dadada;"></div><div style="position:absolute;left:996.5px;top:45.341999999999985px;width:1px;height:16.171px;background:#dadada;"></div><div style="position:absolute;left:1056.5px;top:45.341999999999985px;width:1px;height:16.171px;background:#dadada;"></div><div style="position:absolute;left:1171.5px;top:45.341999999999985px;width:1px;height:16.171px;background:#dadada;"></div><div style="position:absolute;left:1279.5px;top:45.341999999999985px;width:1px;height:16.171px;background:#dadada;"></div><div style="position:absolute;left:1403.5px;top:45.341999999999985px;width:1px;height:16.171px;background:#dadada;"></div><div style="position:absolute;left:1482.5px;top:45.341999999999985px;width:1px;height:16.171px;background:#dadada;"></div><div style="position:absolute;left:1573.5px;top:45.341999999999985px;width:1px;height:16.171px;background:#dadada;"></div><div style="position:absolute;left:1664.5px;top:45.341999999999985px;width:1px;height:16.171px;background:#dadada;"></div><div style="position:absolute;left:39px;top:60.5px;width:1717px;height:1px;background:#8eaadb;"></div><div style="position:absolute;left:0px;top:61px;width:38px;height:1px;background:#dcdcdc;"></div><div style="position:absolute;left:39px;top:76.5px;width:1717px;height:1px;background:#8eaadb;"></div><div style="position:absolute;left:0px;top:77px;width:38px;height:1px;background:#dcdcdc;"></div><div style="position:absolute;left:280.5px;top:77.684px;width:1px;height:16.171px;background:#dadada;"></div><div style="position:absolute;left:419.5px;top:77.684px;width:1px;height:16.171px;background:#dadada;"></div><div style="position:absolute;left:492.5px;top:77.684px;width:1px;height:16.171px;background:#dadada;"></div><div style="position:absolute;left:544.5px;top:77.684px;width:1px;height:16.171px;background:#dadada;"></div><div style="position:absolute;left:595.5px;top:77.684px;width:1px;height:16.171px;background:#dadada;"></div><div style="position:absolute;left:665.5px;top:77.684px;width:1px;height:16.171px;background:#dadada;"></div><div style="position:absolute;left:735.5px;top:77.684px;width:1px;height:16.171px;background:#dadada;"></div><div style="position:absolute;left:804.5px;top:77.684px;width:1px;height:16.171px;background:#dadada;"></div><div style="position:absolute;left:874.5px;top:77.684px;width:1px;height:16.171px;background:#dadada;"></div><div style="position:absolute;left:935.5px;top:77.684px;width:1px;height:16.171px;background:#dadada;"></div><div style="position:absolute;left:996.5px;top:77.684px;width:1px;height:16.171px;background:#dadada;"></div><div style="position:absolute;left:1056.5px;top:77.684px;width:1px;height:16.171px;background:#dadada;"></div><div style="position:absolute;left:1171.5px;top:77.684px;width:1px;height:16.171px;background:#dadada;"></div><div style="position:absolute;left:1279.5px;top:77.684px;width:1px;height:16.171px;background:#dadada;"></div><div style="position:absolute;left:1403.5px;top:77.684px;width:1px;height:16.171px;background:#dadada;"></div><div style="position:absolute;left:1482.5px;top:77.684px;width:1px;height:16.171px;background:#dadada;"></div><div style="position:absolute;left:1573.5px;top:77.684px;width:1px;height:16.171px;background:#dadada;"></div><div style="position:absolute;left:1664.5px;top:77.684px;width:1px;height:16.171px;background:#dadada;"></div><div style="position:absolute;left:39px;top:93.5px;width:1717px;height:1px;background:#8eaadb;"></div><div style="position:absolute;left:0px;top:94px;width:38px;height:1px;background:#dcdcdc;"></div><div style="position:absolute;left:39px;top:109.5px;width:1717px;height:1px;background:#8eaadb;"></div><div style="position:absolute;left:0px;top:110px;width:38px;height:1px;background:#dcdcdc;"></div><div style="position:absolute;left:280.5px;top:110.02600000000001px;width:1px;height:16.171px;background:#dadada;"></div><div style="position:absolute;left:419.5px;top:110.02600000000001px;width:1px;height:16.171px;background:#dadada;"></div><div style="position:absolute;left:492.5px;top:110.02600000000001px;width:1px;height:16.171px;background:#dadada;"></div><div style="position:absolute;left:544.5px;top:110.02600000000001px;width:1px;height:16.171px;background:#dadada;"></div><div style="position:absolute;left:595.5px;top:110.02600000000001px;width:1px;height:16.171px;background:#dadada;"></div><div style="position:absolute;left:665.5px;top:110.02600000000001px;width:1px;height:16.171px;background:#dadada;"></div><div style="position:absolute;left:735.5px;top:110.02600000000001px;width:1px;height:16.171px;background:#dadada;"></div><div style="position:absolute;left:804.5px;top:110.02600000000001px;width:1px;height:16.171px;background:#dadada;"></div><div style="position:absolute;left:874.5px;top:110.02600000000001px;width:1px;height:16.171px;background:#dadada;"></div><div style="position:absolute;left:935.5px;top:110.02600000000001px;width:1px;height:16.171px;background:#dadada;"></div><div style="position:absolute;left:996.5px;top:110.02600000000001px;width:1px;height:16.171px;background:#dadada;"></div><div style="position:absolute;left:1056.5px;top:110.02600000000001px;width:1px;height:16.171px;background:#dadada;"></div><div style="position:absolute;left:1171.5px;top:110.02600000000001px;width:1px;height:16.171px;background:#dadada;"></div><div style="position:absolute;left:1279.5px;top:110.02600000000001px;width:1px;height:16.171px;background:#dadada;"></div><div style="position:absolute;left:1403.5px;top:110.02600000000001px;width:1px;height:16.171px;background:#dadada;"></div><div style="position:absolute;left:1482.5px;top:110.02600000000001px;width:1px;height:16.171px;background:#dadada;"></div><div style="position:absolute;left:1573.5px;top:110.02600000000001px;width:1px;height:16.171px;background:#dadada;"></div><div style="position:absolute;left:1664.5px;top:110.02600000000001px;width:1px;height:16.171px;background:#dadada;"></div><div style="position:absolute;left:39px;top:125.5px;width:1717px;height:1px;background:#8eaadb;"></div><div style="position:absolute;left:0px;top:126px;width:38px;height:1px;background:#dcdcdc;"></div><div style="position:absolute;left:39px;top:141.5px;width:1717px;height:1px;background:#8eaadb;"></div><div style="position:absolute;left:0px;top:142px;width:38px;height:1px;background:#dcdcdc;"></div><div style="position:absolute;left:280.5px;top:142.368px;width:1px;height:16.171px;background:#dadada;"></div><div style="position:absolute;left:419.5px;top:142.368px;width:1px;height:16.171px;background:#dadada;"></div><div style="position:absolute;left:492.5px;top:142.368px;width:1px;height:16.171px;background:#dadada;"></div><div style="position:absolute;left:544.5px;top:142.368px;width:1px;height:16.171px;background:#dadada;"></div><div style="position:absolute;left:595.5px;top:142.368px;width:1px;height:16.171px;background:#dadada;"></div><div style="position:absolute;left:665.5px;top:142.368px;width:1px;height:16.171px;background:#dadada;"></div><div style="position:absolute;left:735.5px;top:142.368px;width:1px;height:16.171px;background:#dadada;"></div><div style="position:absolute;left:804.5px;top:142.368px;width:1px;height:16.171px;background:#dadada;"></div><div style="position:absolute;left:874.5px;top:142.368px;width:1px;height:16.171px;background:#dadada;"></div><div style="position:absolute;left:935.5px;top:142.368px;width:1px;height:16.171px;background:#dadada;"></div><div style="position:absolute;left:996.5px;top:142.368px;width:1px;height:16.171px;background:#dadada;"></div><div style="position:absolute;left:1056.5px;top:142.368px;width:1px;height:16.171px;background:#dadada;"></div><div style="position:absolute;left:1171.5px;top:142.368px;width:1px;height:16.171px;background:#dadada;"></div><div style="position:absolute;left:1279.5px;top:142.368px;width:1px;height:16.171px;background:#dadada;"></div><div style="position:absolute;left:1403.5px;top:142.368px;width:1px;height:16.171px;background:#dadada;"></div><div style="position:absolute;left:1482.5px;top:142.368px;width:1px;height:16.171px;background:#dadada;"></div><div style="position:absolute;left:1573.5px;top:142.368px;width:1px;height:16.171px;background:#dadada;"></div><div style="position:absolute;left:1664.5px;top:142.368px;width:1px;height:16.171px;background:#dadada;"></div><div style="position:absolute;left:39px;top:157.5px;width:1717px;height:1px;background:#8eaadb;"></div><div style="position:absolute;left:0px;top:158px;width:38px;height:1px;background:#dcdcdc;"></div><div style="position:absolute;left:39px;top:174.5px;width:1717px;height:1px;background:#8eaadb;"></div><div style="position:absolute;left:0px;top:175px;width:38px;height:1px;background:#dcdcdc;"></div><div style="position:absolute;left:280.5px;top:174.70999999999998px;width:1px;height:16.171px;background:#dadada;"></div><div style="position:absolute;left:419.5px;top:174.70999999999998px;width:1px;height:16.171px;background:#dadada;"></div><div style="position:absolute;left:492.5px;top:174.70999999999998px;width:1px;height:16.171px;background:#dadada;"></div><div style="position:absolute;left:544.5px;top:174.70999999999998px;width:1px;height:16.171px;background:#dadada;"></div><div style="position:absolute;left:595.5px;top:174.70999999999998px;width:1px;height:16.171px;background:#dadada;"></div><div style="position:absolute;left:665.5px;top:174.70999999999998px;width:1px;height:16.171px;background:#dadada;"></div><div style="position:absolute;left:735.5px;top:174.70999999999998px;width:1px;height:16.171px;background:#dadada;"></div><div style="position:absolute;left:804.5px;top:174.70999999999998px;width:1px;height:16.171px;background:#dadada;"></div><div style="position:absolute;left:874.5px;top:174.70999999999998px;width:1px;height:16.171px;background:#dadada;"></div><div style="position:absolute;left:935.5px;top:174.70999999999998px;width:1px;height:16.171px;background:#dadada;"></div><div style="position:absolute;left:996.5px;top:174.70999999999998px;width:1px;height:16.171px;background:#dadada;"></div><div style="position:absolute;left:1056.5px;top:174.70999999999998px;width:1px;height:16.171px;background:#dadada;"></div><div style="position:absolute;left:1171.5px;top:174.70999999999998px;width:1px;height:16.171px;background:#dadada;"></div><div style="position:absolute;left:1279.5px;top:174.70999999999998px;width:1px;height:16.171px;background:#dadada;"></div><div style="position:absolute;left:1403.5px;top:174.70999999999998px;width:1px;height:16.171px;background:#dadada;"></div><div style="position:absolute;left:1482.5px;top:174.70999999999998px;width:1px;height:16.171px;background:#dadada;"></div><div style="position:absolute;left:1573.5px;top:174.70999999999998px;width:1px;height:16.171px;background:#dadada;"></div><div style="position:absolute;left:1664.5px;top:174.70999999999998px;width:1px;height:16.171px;background:#dadada;"></div><div style="position:absolute;left:39px;top:190.5px;width:1717px;height:1px;background:#8eaadb;"></div><div style="position:absolute;left:0px;top:191px;width:38px;height:1px;background:#dcdcdc;"></div><div style="position:absolute;left:39px;top:206.5px;width:1717px;height:1px;background:#8eaadb;"></div><div style="position:absolute;left:0px;top:207px;width:38px;height:1px;background:#dcdcdc;"></div><div style="position:absolute;left:280.5px;top:207.05200000000002px;width:1px;height:16.171px;background:#dadada;"></div><div style="position:absolute;left:419.5px;top:207.05200000000002px;width:1px;height:16.171px;background:#dadada;"></div><div style="position:absolute;left:492.5px;top:207.05200000000002px;width:1px;height:16.171px;background:#dadada;"></div><div style="position:absolute;left:544.5px;top:207.05200000000002px;width:1px;height:16.171px;background:#dadada;"></div><div style="position:absolute;left:595.5px;top:207.05200000000002px;width:1px;height:16.171px;background:#dadada;"></div><div style="position:absolute;left:665.5px;top:207.05200000000002px;width:1px;height:16.171px;background:#dadada;"></div><div style="position:absolute;left:735.5px;top:207.05200000000002px;width:1px;height:16.171px;background:#dadada;"></div><div style="position:absolute;left:804.5px;top:207.05200000000002px;width:1px;height:16.171px;background:#dadada;"></div><div style="position:absolute;left:874.5px;top:207.05200000000002px;width:1px;height:16.171px;background:#dadada;"></div><div style="position:absolute;left:935.5px;top:207.05200000000002px;width:1px;height:16.171px;background:#dadada;"></div><div style="position:absolute;left:996.5px;top:207.05200000000002px;width:1px;height:16.171px;background:#dadada;"></div><div style="position:absolute;left:1056.5px;top:207.05200000000002px;width:1px;height:16.171px;background:#dadada;"></div><div style="position:absolute;left:1171.5px;top:207.05200000000002px;width:1px;height:16.171px;background:#dadada;"></div><div style="position:absolute;left:1279.5px;top:207.05200000000002px;width:1px;height:16.171px;background:#dadada;"></div><div style="position:absolute;left:1403.5px;top:207.05200000000002px;width:1px;height:16.171px;background:#dadada;"></div><div style="position:absolute;left:1482.5px;top:207.05200000000002px;width:1px;height:16.171px;background:#dadada;"></div><div style="position:absolute;left:1573.5px;top:207.05200000000002px;width:1px;height:16.171px;background:#dadada;"></div><div style="position:absolute;left:1664.5px;top:207.05200000000002px;width:1px;height:16.171px;background:#dadada;"></div><div style="position:absolute;left:39px;top:222.5px;width:1717px;height:1px;background:#8eaadb;"></div><div style="position:absolute;left:0px;top:223px;width:38px;height:1px;background:#dcdcdc;"></div><div style="position:absolute;left:39px;top:238.5px;width:1717px;height:1px;background:#8eaadb;"></div><div style="position:absolute;left:0px;top:239px;width:38px;height:1px;background:#dcdcdc;"></div><div style="position:absolute;left:280.5px;top:239.394px;width:1px;height:16.171px;background:#dadada;"></div><div style="position:absolute;left:419.5px;top:239.394px;width:1px;height:16.171px;background:#dadada;"></div><div style="position:absolute;left:492.5px;top:239.394px;width:1px;height:16.171px;background:#dadada;"></div><div style="position:absolute;left:544.5px;top:239.394px;width:1px;height:16.171px;background:#dadada;"></div><div style="position:absolute;left:595.5px;top:239.394px;width:1px;height:16.171px;background:#dadada;"></div><div style="position:absolute;left:665.5px;top:239.394px;width:1px;height:16.171px;background:#dadada;"></div><div style="position:absolute;left:735.5px;top:239.394px;width:1px;height:16.171px;background:#dadada;"></div><div style="position:absolute;left:804.5px;top:239.394px;width:1px;height:16.171px;background:#dadada;"></div><div style="position:absolute;left:874.5px;top:239.394px;width:1px;height:16.171px;background:#dadada;"></div><div style="position:absolute;left:935.5px;top:239.394px;width:1px;height:16.171px;background:#dadada;"></div><div style="position:absolute;left:996.5px;top:239.394px;width:1px;height:16.171px;background:#dadada;"></div><div style="position:absolute;left:1056.5px;top:239.394px;width:1px;height:16.171px;background:#dadada;"></div><div style="position:absolute;left:1171.5px;top:239.394px;width:1px;height:16.171px;background:#dadada;"></div><div style="position:absolute;left:1279.5px;top:239.394px;width:1px;height:16.171px;background:#dadada;"></div><div style="position:absolute;left:1403.5px;top:239.394px;width:1px;height:16.171px;background:#dadada;"></div><div style="position:absolute;left:1482.5px;top:239.394px;width:1px;height:16.171px;background:#dadada;"></div><div style="position:absolute;left:1573.5px;top:239.394px;width:1px;height:16.171px;background:#dadada;"></div><div style="position:absolute;left:1664.5px;top:239.394px;width:1px;height:16.171px;background:#dadada;"></div><div style="position:absolute;left:39px;top:254.5px;width:1717px;height:1px;background:#8eaadb;"></div><div style="position:absolute;left:0px;top:255px;width:38px;height:1px;background:#dcdcdc;"></div><div style="position:absolute;left:39px;top:271.5px;width:1717px;height:1px;background:#8eaadb;"></div><div style="position:absolute;left:0px;top:272px;width:38px;height:1px;background:#dcdcdc;"></div><div style="position:absolute;left:280.5px;top:271.736px;width:1px;height:16.171px;background:#dadada;"></div><div style="position:absolute;left:419.5px;top:271.736px;width:1px;height:16.171px;background:#dadada;"></div><div style="position:absolute;left:492.5px;top:271.736px;width:1px;height:16.171px;background:#dadada;"></div><div style="position:absolute;left:544.5px;top:271.736px;width:1px;height:16.171px;background:#dadada;"></div><div style="position:absolute;left:595.5px;top:271.736px;width:1px;height:16.171px;background:#dadada;"></div><div style="position:absolute;left:665.5px;top:271.736px;width:1px;height:16.171px;background:#dadada;"></div><div style="position:absolute;left:735.5px;top:271.736px;width:1px;height:16.171px;background:#dadada;"></div><div style="position:absolute;left:804.5px;top:271.736px;width:1px;height:16.171px;background:#dadada;"></div><div style="position:absolute;left:874.5px;top:271.736px;width:1px;height:16.171px;background:#dadada;"></div><div style="position:absolute;left:935.5px;top:271.736px;width:1px;height:16.171px;background:#dadada;"></div><div style="position:absolute;left:996.5px;top:271.736px;width:1px;height:16.171px;background:#dadada;"></div><div style="position:absolute;left:1056.5px;top:271.736px;width:1px;height:16.171px;background:#dadada;"></div><div style="position:absolute;left:1171.5px;top:271.736px;width:1px;height:16.171px;background:#dadada;"></div><div style="position:absolute;left:1279.5px;top:271.736px;width:1px;height:16.171px;background:#dadada;"></div><div style="position:absolute;left:1403.5px;top:271.736px;width:1px;height:16.171px;background:#dadada;"></div><div style="position:absolute;left:1482.5px;top:271.736px;width:1px;height:16.171px;background:#dadada;"></div><div style="position:absolute;left:1573.5px;top:271.736px;width:1px;height:16.171px;background:#dadada;"></div><div style="position:absolute;left:1664.5px;top:271.736px;width:1px;height:16.171px;background:#dadada;"></div><div style="position:absolute;left:39px;top:287.5px;width:1717px;height:1px;background:#8eaadb;"></div><div style="position:absolute;left:0px;top:288px;width:38px;height:1px;background:#dcdcdc;"></div><div style="position:absolute;left:39px;top:303.5px;width:1717px;height:1px;background:#8eaadb;"></div><div style="position:absolute;left:0px;top:304px;width:38px;height:1px;background:#dcdcdc;"></div><div style="position:absolute;left:280.5px;top:304.078px;width:1px;height:16.171px;background:#dadada;"></div><div style="position:absolute;left:419.5px;top:304.078px;width:1px;height:16.171px;background:#dadada;"></div><div style="position:absolute;left:492.5px;top:304.078px;width:1px;height:16.171px;background:#dadada;"></div><div style="position:absolute;left:544.5px;top:304.078px;width:1px;height:16.171px;background:#dadada;"></div><div style="position:absolute;left:595.5px;top:304.078px;width:1px;height:16.171px;background:#dadada;"></div><div style="position:absolute;left:665.5px;top:304.078px;width:1px;height:16.171px;background:#dadada;"></div><div style="position:absolute;left:735.5px;top:304.078px;width:1px;height:16.171px;background:#dadada;"></div><div style="position:absolute;left:804.5px;top:304.078px;width:1px;height:16.171px;background:#dadada;"></div><div style="position:absolute;left:874.5px;top:304.078px;width:1px;height:16.171px;background:#dadada;"></div><div style="position:absolute;left:935.5px;top:304.078px;width:1px;height:16.171px;background:#dadada;"></div><div style="position:absolute;left:996.5px;top:304.078px;width:1px;height:16.171px;background:#dadada;"></div><div style="position:absolute;left:1056.5px;top:304.078px;width:1px;height:16.171px;background:#dadada;"></div><div style="position:absolute;left:1171.5px;top:304.078px;width:1px;height:16.171px;background:#dadada;"></div><div style="position:absolute;left:1279.5px;top:304.078px;width:1px;height:16.171px;background:#dadada;"></div><div style="position:absolute;left:1403.5px;top:304.078px;width:1px;height:16.171px;background:#dadada;"></div><div style="position:absolute;left:1482.5px;top:304.078px;width:1px;height:16.171px;background:#dadada;"></div><div style="position:absolute;left:1573.5px;top:304.078px;width:1px;height:16.171px;background:#dadada;"></div><div style="position:absolute;left:1664.5px;top:304.078px;width:1px;height:16.171px;background:#dadada;"></div><div style="position:absolute;left:39px;top:319.5px;width:1717px;height:1px;background:#8eaadb;"></div><div style="position:absolute;left:0px;top:320px;width:38px;height:1px;background:#dcdcdc;"></div><div style="position:absolute;left:39px;top:335.5px;width:1717px;height:1px;background:#8eaadb;"></div><div style="position:absolute;left:0px;top:336px;width:38px;height:1px;background:#dcdcdc;"></div><div style="position:absolute;left:280.5px;top:336.41999999999996px;width:1px;height:16.171px;background:#dadada;"></div><div style="position:absolute;left:419.5px;top:336.41999999999996px;width:1px;height:16.171px;background:#dadada;"></div><div style="position:absolute;left:492.5px;top:336.41999999999996px;width:1px;height:16.171px;background:#dadada;"></div><div style="position:absolute;left:544.5px;top:336.41999999999996px;width:1px;height:16.171px;background:#dadada;"></div><div style="position:absolute;left:595.5px;top:336.41999999999996px;width:1px;height:16.171px;background:#dadada;"></div><div style="position:absolute;left:665.5px;top:336.41999999999996px;width:1px;height:16.171px;background:#dadada;"></div><div style="position:absolute;left:735.5px;top:336.41999999999996px;width:1px;height:16.171px;background:#dadada;"></div><div style="position:absolute;left:804.5px;top:336.41999999999996px;width:1px;height:16.171px;background:#dadada;"></div><div style="position:absolute;left:874.5px;top:336.41999999999996px;width:1px;height:16.171px;background:#dadada;"></div><div style="position:absolute;left:935.5px;top:336.41999999999996px;width:1px;height:16.171px;background:#dadada;"></div><div style="position:absolute;left:996.5px;top:336.41999999999996px;width:1px;height:16.171px;background:#dadada;"></div><div style="position:absolute;left:1056.5px;top:336.41999999999996px;width:1px;height:16.171px;background:#dadada;"></div><div style="position:absolute;left:1171.5px;top:336.41999999999996px;width:1px;height:16.171px;background:#dadada;"></div><div style="position:absolute;left:1279.5px;top:336.41999999999996px;width:1px;height:16.171px;background:#dadada;"></div><div style="position:absolute;left:1403.5px;top:336.41999999999996px;width:1px;height:16.171px;background:#dadada;"></div><div style="position:absolute;left:1482.5px;top:336.41999999999996px;width:1px;height:16.171px;background:#dadada;"></div><div style="position:absolute;left:1573.5px;top:336.41999999999996px;width:1px;height:16.171px;background:#dadada;"></div><div style="position:absolute;left:1664.5px;top:336.41999999999996px;width:1px;height:16.171px;background:#dadada;"></div><div style="position:absolute;left:39px;top:351.5px;width:1717px;height:1px;background:#8eaadb;"></div><div style="position:absolute;left:0px;top:352px;width:38px;height:1px;background:#dcdcdc;"></div><div style="position:absolute;left:39px;top:368.5px;width:1717px;height:1px;background:#8eaadb;"></div><div style="position:absolute;left:0px;top:369px;width:38px;height:1px;background:#dcdcdc;"></div><div style="position:absolute;left:280.5px;top:368.76199999999994px;width:1px;height:16.171px;background:#dadada;"></div><div style="position:absolute;left:419.5px;top:368.76199999999994px;width:1px;height:16.171px;background:#dadada;"></div><div style="position:absolute;left:492.5px;top:368.76199999999994px;width:1px;height:16.171px;background:#dadada;"></div><div style="position:absolute;left:544.5px;top:368.76199999999994px;width:1px;height:16.171px;background:#dadada;"></div><div style="position:absolute;left:595.5px;top:368.76199999999994px;width:1px;height:16.171px;background:#dadada;"></div><div style="position:absolute;left:665.5px;top:368.76199999999994px;width:1px;height:16.171px;background:#dadada;"></div><div style="position:absolute;left:735.5px;top:368.76199999999994px;width:1px;height:16.171px;background:#dadada;"></div><div style="position:absolute;left:804.5px;top:368.76199999999994px;width:1px;height:16.171px;background:#dadada;"></div><div style="position:absolute;left:874.5px;top:368.76199999999994px;width:1px;height:16.171px;background:#dadada;"></div><div style="position:absolute;left:935.5px;top:368.76199999999994px;width:1px;height:16.171px;background:#dadada;"></div><div style="position:absolute;left:996.5px;top:368.76199999999994px;width:1px;height:16.171px;background:#dadada;"></div><div style="position:absolute;left:1056.5px;top:368.76199999999994px;width:1px;height:16.171px;background:#dadada;"></div><div style="position:absolute;left:1171.5px;top:368.76199999999994px;width:1px;height:16.171px;background:#dadada;"></div><div style="position:absolute;left:1279.5px;top:368.76199999999994px;width:1px;height:16.171px;background:#dadada;"></div><div style="position:absolute;left:1403.5px;top:368.76199999999994px;width:1px;height:16.171px;background:#dadada;"></div><div style="position:absolute;left:1482.5px;top:368.76199999999994px;width:1px;height:16.171px;background:#dadada;"></div><div style="position:absolute;left:1573.5px;top:368.76199999999994px;width:1px;height:16.171px;background:#dadada;"></div><div style="position:absolute;left:1664.5px;top:368.76199999999994px;width:1px;height:16.171px;background:#dadada;"></div><div style="position:absolute;left:39px;top:384.5px;width:1717px;height:1px;background:#8eaadb;"></div><div style="position:absolute;left:0px;top:385px;width:38px;height:1px;background:#dcdcdc;"></div><div style="position:absolute;left:39px;top:400.5px;width:1717px;height:1px;background:#8eaadb;"></div><div style="position:absolute;left:0px;top:401px;width:38px;height:1px;background:#dcdcdc;"></div><div style="position:absolute;left:280.5px;top:401.10400000000004px;width:1px;height:16.171px;background:#dadada;"></div><div style="position:absolute;left:419.5px;top:401.10400000000004px;width:1px;height:16.171px;background:#dadada;"></div><div style="position:absolute;left:492.5px;top:401.10400000000004px;width:1px;height:16.171px;background:#dadada;"></div><div style="position:absolute;left:544.5px;top:401.10400000000004px;width:1px;height:16.171px;background:#dadada;"></div><div style="position:absolute;left:595.5px;top:401.10400000000004px;width:1px;height:16.171px;background:#dadada;"></div><div style="position:absolute;left:665.5px;top:401.10400000000004px;width:1px;height:16.171px;background:#dadada;"></div><div style="position:absolute;left:735.5px;top:401.10400000000004px;width:1px;height:16.171px;background:#dadada;"></div><div style="position:absolute;left:804.5px;top:401.10400000000004px;width:1px;height:16.171px;background:#dadada;"></div><div style="position:absolute;left:874.5px;top:401.10400000000004px;width:1px;height:16.171px;background:#dadada;"></div><div style="position:absolute;left:935.5px;top:401.10400000000004px;width:1px;height:16.171px;background:#dadada;"></div><div style="position:absolute;left:996.5px;top:401.10400000000004px;width:1px;height:16.171px;background:#dadada;"></div><div style="position:absolute;left:1056.5px;top:401.10400000000004px;width:1px;height:16.171px;background:#dadada;"></div><div style="position:absolute;left:1171.5px;top:401.10400000000004px;width:1px;height:16.171px;background:#dadada;"></div><div style="position:absolute;left:1279.5px;top:401.10400000000004px;width:1px;height:16.171px;background:#dadada;"></div><div style="position:absolute;left:1403.5px;top:401.10400000000004px;width:1px;height:16.171px;background:#dadada;"></div><div style="position:absolute;left:1482.5px;top:401.10400000000004px;width:1px;height:16.171px;background:#dadada;"></div><div style="position:absolute;left:1573.5px;top:401.10400000000004px;width:1px;height:16.171px;background:#dadada;"></div><div style="position:absolute;left:1664.5px;top:401.10400000000004px;width:1px;height:16.171px;background:#dadada;"></div><div style="position:absolute;left:39px;top:416.5px;width:1717px;height:1px;background:#8eaadb;"></div><div style="position:absolute;left:0px;top:417px;width:38px;height:1px;background:#dcdcdc;"></div><div style="position:absolute;left:39px;top:432.5px;width:1717px;height:1px;background:#8eaadb;"></div><div style="position:absolute;left:0px;top:433px;width:38px;height:1px;background:#dcdcdc;"></div><div style="position:absolute;left:280.5px;top:433.4459999999999px;width:1px;height:16.171px;background:#dadada;"></div><div style="position:absolute;left:419.5px;top:433.4459999999999px;width:1px;height:16.171px;background:#dadada;"></div><div style="position:absolute;left:492.5px;top:433.4459999999999px;width:1px;height:16.171px;background:#dadada;"></div><div style="position:absolute;left:544.5px;top:433.4459999999999px;width:1px;height:16.171px;background:#dadada;"></div><div style="position:absolute;left:595.5px;top:433.4459999999999px;width:1px;height:16.171px;background:#dadada;"></div><div style="position:absolute;left:665.5px;top:433.4459999999999px;width:1px;height:16.171px;background:#dadada;"></div><div style="position:absolute;left:735.5px;top:433.4459999999999px;width:1px;height:16.171px;background:#dadada;"></div><div style="position:absolute;left:804.5px;top:433.4459999999999px;width:1px;height:16.171px;background:#dadada;"></div><div style="position:absolute;left:874.5px;top:433.4459999999999px;width:1px;height:16.171px;background:#dadada;"></div><div style="position:absolute;left:935.5px;top:433.4459999999999px;width:1px;height:16.171px;background:#dadada;"></div><div style="position:absolute;left:996.5px;top:433.4459999999999px;width:1px;height:16.171px;background:#dadada;"></div><div style="position:absolute;left:1056.5px;top:433.4459999999999px;width:1px;height:16.171px;background:#dadada;"></div><div style="position:absolute;left:1171.5px;top:433.4459999999999px;width:1px;height:16.171px;background:#dadada;"></div><div style="position:absolute;left:1279.5px;top:433.4459999999999px;width:1px;height:16.171px;background:#dadada;"></div><div style="position:absolute;left:1403.5px;top:433.4459999999999px;width:1px;height:16.171px;background:#dadada;"></div><div style="position:absolute;left:1482.5px;top:433.4459999999999px;width:1px;height:16.171px;background:#dadada;"></div><div style="position:absolute;left:1573.5px;top:433.4459999999999px;width:1px;height:16.171px;background:#dadada;"></div><div style="position:absolute;left:1664.5px;top:433.4459999999999px;width:1px;height:16.171px;background:#dadada;"></div><div style="position:absolute;left:39px;top:448.5px;width:1717px;height:1px;background:#8eaadb;"></div><div style="position:absolute;left:0px;top:449px;width:38px;height:1px;background:#dcdcdc;"></div><div style="position:absolute;left:39px;top:465.5px;width:1717px;height:1px;background:#8eaadb;"></div><div style="position:absolute;left:0px;top:466px;width:38px;height:1px;background:#dcdcdc;"></div><div style="position:absolute;left:280.5px;top:465.788px;width:1px;height:16.171px;background:#dadada;"></div><div style="position:absolute;left:419.5px;top:465.788px;width:1px;height:16.171px;background:#dadada;"></div><div style="position:absolute;left:492.5px;top:465.788px;width:1px;height:16.171px;background:#dadada;"></div><div style="position:absolute;left:544.5px;top:465.788px;width:1px;height:16.171px;background:#dadada;"></div><div style="position:absolute;left:595.5px;top:465.788px;width:1px;height:16.171px;background:#dadada;"></div><div style="position:absolute;left:665.5px;top:465.788px;width:1px;height:16.171px;background:#dadada;"></div><div style="position:absolute;left:735.5px;top:465.788px;width:1px;height:16.171px;background:#dadada;"></div><div style="position:absolute;left:804.5px;top:465.788px;width:1px;height:16.171px;background:#dadada;"></div><div style="position:absolute;left:874.5px;top:465.788px;width:1px;height:16.171px;background:#dadada;"></div><div style="position:absolute;left:935.5px;top:465.788px;width:1px;height:16.171px;background:#dadada;"></div><div style="position:absolute;left:996.5px;top:465.788px;width:1px;height:16.171px;background:#dadada;"></div><div style="position:absolute;left:1056.5px;top:465.788px;width:1px;height:16.171px;background:#dadada;"></div><div style="position:absolute;left:1171.5px;top:465.788px;width:1px;height:16.171px;background:#dadada;"></div><div style="position:absolute;left:1279.5px;top:465.788px;width:1px;height:16.171px;background:#dadada;"></div><div style="position:absolute;left:1403.5px;top:465.788px;width:1px;height:16.171px;background:#dadada;"></div><div style="position:absolute;left:1482.5px;top:465.788px;width:1px;height:16.171px;background:#dadada;"></div><div style="position:absolute;left:1573.5px;top:465.788px;width:1px;height:16.171px;background:#dadada;"></div><div style="position:absolute;left:1664.5px;top:465.788px;width:1px;height:16.171px;background:#dadada;"></div><div style="position:absolute;left:39px;top:481.5px;width:1717px;height:1px;background:#8eaadb;"></div><div style="position:absolute;left:0px;top:482px;width:38px;height:1px;background:#dcdcdc;"></div><div style="position:absolute;left:39px;top:497.5px;width:1717px;height:1px;background:#8eaadb;"></div><div style="position:absolute;left:0px;top:498px;width:38px;height:1px;background:#dcdcdc;"></div><div style="position:absolute;left:280.5px;top:498.13px;width:1px;height:16.171px;background:#dadada;"></div><div style="position:absolute;left:419.5px;top:498.13px;width:1px;height:16.171px;background:#dadada;"></div><div style="position:absolute;left:492.5px;top:498.13px;width:1px;height:16.171px;background:#dadada;"></div><div style="position:absolute;left:544.5px;top:498.13px;width:1px;height:16.171px;background:#dadada;"></div><div style="position:absolute;left:595.5px;top:498.13px;width:1px;height:16.171px;background:#dadada;"></div><div style="position:absolute;left:665.5px;top:498.13px;width:1px;height:16.171px;background:#dadada;"></div><div style="position:absolute;left:735.5px;top:498.13px;width:1px;height:16.171px;background:#dadada;"></div><div style="position:absolute;left:804.5px;top:498.13px;width:1px;height:16.171px;background:#dadada;"></div><div style="position:absolute;left:874.5px;top:498.13px;width:1px;height:16.171px;background:#dadada;"></div><div style="position:absolute;left:935.5px;top:498.13px;width:1px;height:16.171px;background:#dadada;"></div><div style="position:absolute;left:996.5px;top:498.13px;width:1px;height:16.171px;background:#dadada;"></div><div style="position:absolute;left:1056.5px;top:498.13px;width:1px;height:16.171px;background:#dadada;"></div><div style="position:absolute;left:1171.5px;top:498.13px;width:1px;height:16.171px;background:#dadada;"></div><div style="position:absolute;left:1279.5px;top:498.13px;width:1px;height:16.171px;background:#dadada;"></div><div style="position:absolute;left:1403.5px;top:498.13px;width:1px;height:16.171px;background:#dadada;"></div><div style="position:absolute;left:1482.5px;top:498.13px;width:1px;height:16.171px;background:#dadada;"></div><div style="position:absolute;left:1573.5px;top:498.13px;width:1px;height:16.171px;background:#dadada;"></div><div style="position:absolute;left:1664.5px;top:498.13px;width:1px;height:16.171px;background:#dadada;"></div><div style="position:absolute;left:39px;top:513.5px;width:1717px;height:1px;background:#8eaadb;"></div><div style="position:absolute;left:0px;top:514px;width:38px;height:1px;background:#dcdcdc;"></div><div style="position:absolute;left:39px;top:529.5px;width:1717px;height:1px;background:#8eaadb;"></div><div style="position:absolute;left:0px;top:530px;width:38px;height:1px;background:#dcdcdc;"></div><div style="position:absolute;left:280.5px;top:530.472px;width:1px;height:16.171px;background:#dadada;"></div><div style="position:absolute;left:419.5px;top:530.472px;width:1px;height:16.171px;background:#dadada;"></div><div style="position:absolute;left:492.5px;top:530.472px;width:1px;height:16.171px;background:#dadada;"></div><div style="position:absolute;left:544.5px;top:530.472px;width:1px;height:16.171px;background:#dadada;"></div><div style="position:absolute;left:595.5px;top:530.472px;width:1px;height:16.171px;background:#dadada;"></div><div style="position:absolute;left:665.5px;top:530.472px;width:1px;height:16.171px;background:#dadada;"></div><div style="position:absolute;left:735.5px;top:530.472px;width:1px;height:16.171px;background:#dadada;"></div><div style="position:absolute;left:804.5px;top:530.472px;width:1px;height:16.171px;background:#dadada;"></div><div style="position:absolute;left:874.5px;top:530.472px;width:1px;height:16.171px;background:#dadada;"></div><div style="position:absolute;left:935.5px;top:530.472px;width:1px;height:16.171px;background:#dadada;"></div><div style="position:absolute;left:996.5px;top:530.472px;width:1px;height:16.171px;background:#dadada;"></div><div style="position:absolute;left:1056.5px;top:530.472px;width:1px;height:16.171px;background:#dadada;"></div><div style="position:absolute;left:1171.5px;top:530.472px;width:1px;height:16.171px;background:#dadada;"></div><div style="position:absolute;left:1279.5px;top:530.472px;width:1px;height:16.171px;background:#dadada;"></div><div style="position:absolute;left:1403.5px;top:530.472px;width:1px;height:16.171px;background:#dadada;"></div><div style="position:absolute;left:1482.5px;top:530.472px;width:1px;height:16.171px;background:#dadada;"></div><div style="position:absolute;left:1573.5px;top:530.472px;width:1px;height:16.171px;background:#dadada;"></div><div style="position:absolute;left:1664.5px;top:530.472px;width:1px;height:16.171px;background:#dadada;"></div><div style="position:absolute;left:39px;top:545.5px;width:1717px;height:1px;background:#8eaadb;"></div><div style="position:absolute;left:0px;top:546px;width:38px;height:1px;background:#dcdcdc;"></div><div style="position:absolute;left:39px;top:562.5px;width:1717px;height:1px;background:#8eaadb;"></div><div style="position:absolute;left:0px;top:563px;width:38px;height:1px;background:#dcdcdc;"></div><div style="position:absolute;left:280.5px;top:562.814px;width:1px;height:16.171px;background:#dadada;"></div><div style="position:absolute;left:419.5px;top:562.814px;width:1px;height:16.171px;background:#dadada;"></div><div style="position:absolute;left:492.5px;top:562.814px;width:1px;height:16.171px;background:#dadada;"></div><div style="position:absolute;left:544.5px;top:562.814px;width:1px;height:16.171px;background:#dadada;"></div><div style="position:absolute;left:595.5px;top:562.814px;width:1px;height:16.171px;background:#dadada;"></div><div style="position:absolute;left:665.5px;top:562.814px;width:1px;height:16.171px;background:#dadada;"></div><div style="position:absolute;left:735.5px;top:562.814px;width:1px;height:16.171px;background:#dadada;"></div><div style="position:absolute;left:804.5px;top:562.814px;width:1px;height:16.171px;background:#dadada;"></div><div style="position:absolute;left:874.5px;top:562.814px;width:1px;height:16.171px;background:#dadada;"></div><div style="position:absolute;left:935.5px;top:562.814px;width:1px;height:16.171px;background:#dadada;"></div><div style="position:absolute;left:996.5px;top:562.814px;width:1px;height:16.171px;background:#dadada;"></div><div style="position:absolute;left:1056.5px;top:562.814px;width:1px;height:16.171px;background:#dadada;"></div><div style="position:absolute;left:1171.5px;top:562.814px;width:1px;height:16.171px;background:#dadada;"></div><div style="position:absolute;left:1279.5px;top:562.814px;width:1px;height:16.171px;background:#dadada;"></div><div style="position:absolute;left:1403.5px;top:562.814px;width:1px;height:16.171px;background:#dadada;"></div><div style="position:absolute;left:1482.5px;top:562.814px;width:1px;height:16.171px;background:#dadada;"></div><div style="position:absolute;left:1573.5px;top:562.814px;width:1px;height:16.171px;background:#dadada;"></div><div style="position:absolute;left:1664.5px;top:562.814px;width:1px;height:16.171px;background:#dadada;"></div><div style="position:absolute;left:39px;top:578.5px;width:1717px;height:1px;background:#8eaadb;"></div><div style="position:absolute;left:0px;top:579px;width:38px;height:1px;background:#dcdcdc;"></div><div style="position:absolute;left:39px;top:594.5px;width:1717px;height:1px;background:#8eaadb;"></div><div style="position:absolute;left:0px;top:595px;width:38px;height:1px;background:#dcdcdc;"></div><div class="t" style="left:18px;top:-3.00px;font-size:17px;font-weight:normal;color:#555;"><span style="transform:translateX(-50%) scaleX(0.9252);transform-origin:center">6009</span></div><div class="t" style="left:41.25px;top:1.00px;font-size:11.5px;font-weight:normal;color:#111;"><span style="transform:scaleX(1.1061);transform-origin:left">8-Apr-25</span></div><div class="t" style="left:136.25px;top:1.00px;font-size:11.5px;font-weight:normal;color:#111;"><span style="transform:scaleX(0.9479);transform-origin:left">Long Beach, CA</span></div><div class="t" style="left:350.5px;top:1.00px;font-size:11.5px;font-weight:normal;color:#111;"><span style="transform:translateX(-50%) scaleX(0.9014);transform-origin:center">VLSFO</span></div><div class="t" style="left:905.5px;top:1.00px;font-size:11.5px;font-weight:normal;color:#111;"><span style="transform:translateX(-50%) scaleX(1.0628);transform-origin:center">21-Apr</span></div><div class="t" style="left:966.5px;top:1.00px;font-size:11.5px;font-weight:normal;color:#111;"><span style="transform:translateX(-50%) scaleX(1.0628);transform-origin:center">20-Apr</span></div><div class="t" style="left:1027.0px;top:1.00px;font-size:11.5px;font-weight:normal;color:#111;"><span style="transform:translateX(-50%) scaleX(1.0628);transform-origin:center">22-Apr</span></div><div class="t" style="left:1114.5px;top:1.00px;font-size:11.5px;font-weight:normal;color:#111;"><span style="transform:translateX(-50%) scaleX(1.0019);transform-origin:center">sold combined</span></div><div class="t" style="left:1226.0px;top:2.00px;font-size:10.5px;font-weight:normal;color:#111;"><span style="transform:translateX(-50%) scaleX(1.0637);transform-origin:center">MTD</span></div><div class="t" style="left:18px;top:14.00px;font-size:17px;font-weight:normal;color:#555;"><span style="transform:translateX(-50%) scaleX(0.9252);transform-origin:center">6010</span></div><div class="t" style="left:41.25px;top:17.00px;font-size:11.5px;font-weight:normal;color:#111;"><span style="transform:scaleX(1.1061);transform-origin:left">8-Apr-25</span></div><div class="t" style="left:136.25px;top:17.00px;font-size:11.5px;font-weight:normal;color:#111;"><span style="transform:scaleX(0.9479);transform-origin:left">Long Beach, CA</span></div><div class="t" style="left:350.5px;top:17.00px;font-size:11.5px;font-weight:normal;color:#111;"><span style="transform:translateX(-50%) scaleX(0.9642);transform-origin:center">MGO</span></div><div class="t" style="left:905.5px;top:17.00px;font-size:11.5px;font-weight:normal;color:#111;"><span style="transform:translateX(-50%) scaleX(1.0628);transform-origin:center">21-Apr</span></div><div class="t" style="left:966.5px;top:17.00px;font-size:11.5px;font-weight:normal;color:#111;"><span style="transform:translateX(-50%) scaleX(1.0628);transform-origin:center">20-Apr</span></div><div class="t" style="left:1027.0px;top:17.00px;font-size:11.5px;font-weight:normal;color:#111;"><span style="transform:translateX(-50%) scaleX(1.0628);transform-origin:center">22-Apr</span></div><div class="t" style="left:1114.5px;top:17.00px;font-size:11.5px;font-weight:normal;color:#111;"><span style="transform:translateX(-50%) scaleX(1.0019);transform-origin:center">sold combined</span></div><div class="t" style="left:1226.0px;top:18.00px;font-size:10.5px;font-weight:normal;color:#111;"><span style="transform:translateX(-50%) scaleX(1.0637);transform-origin:center">MTD</span></div><div class="t" style="left:18px;top:30.00px;font-size:17px;font-weight:normal;color:#555;"><span style="transform:translateX(-50%) scaleX(0.9252);transform-origin:center">6011</span></div><div class="t" style="left:41.25px;top:33.00px;font-size:11.5px;font-weight:normal;color:#111;"><span style="transform:scaleX(1.1061);transform-origin:left">8-Apr-25</span></div><div class="t" style="left:136.25px;top:33.00px;font-size:11.5px;font-weight:normal;color:#111;"><span style="transform:scaleX(0.9414);transform-origin:left">Philadelphia</span></div><div class="t" style="left:350.5px;top:33.00px;font-size:11.5px;font-weight:normal;color:#111;"><span style="transform:translateX(-50%) scaleX(0.9642);transform-origin:center">MGO</span></div><div class="t" style="left:1114.5px;top:33.00px;font-size:11.5px;font-weight:normal;color:#111;"><span style="transform:translateX(-50%) scaleX(1.0667);transform-origin:center">quote</span></div><div class="t" style="left:1226.0px;top:34.00px;font-size:10.5px;font-weight:normal;color:#111;"><span style="transform:translateX(-50%) scaleX(1.1948);transform-origin:center">mtw</span></div><div class="t" style="left:18px;top:46.00px;font-size:17px;font-weight:normal;color:#555;"><span style="transform:translateX(-50%) scaleX(0.9252);transform-origin:center">6012</span></div><div class="t" style="left:41.25px;top:49.00px;font-size:11.5px;font-weight:normal;color:#111;"><span style="transform:scaleX(1.1061);transform-origin:left">8-Apr-25</span></div><div class="t" style="left:136.25px;top:49.00px;font-size:11.5px;font-weight:normal;color:#111;"><span style="transform:scaleX(0.9414);transform-origin:left">Philadelphia</span></div><div class="t" style="left:350.5px;top:49.00px;font-size:11.5px;font-weight:normal;color:#111;"><span style="transform:translateX(-50%) scaleX(0.9014);transform-origin:center">VLSFO</span></div><div class="t" style="left:1114.5px;top:49.00px;font-size:11.5px;font-weight:normal;color:#111;"><span style="transform:translateX(-50%) scaleX(1.0019);transform-origin:center">sold combined</span></div><div class="t" style="left:1226.0px;top:50.00px;font-size:10.5px;font-weight:normal;color:#111;"><span style="transform:translateX(-50%) scaleX(1.0637);transform-origin:center">MTD</span></div><div class="t" style="left:18px;top:62.00px;font-size:17px;font-weight:normal;color:#555;"><span style="transform:translateX(-50%) scaleX(0.9252);transform-origin:center">6013</span></div><div class="t" style="left:41.25px;top:66.00px;font-size:11.5px;font-weight:normal;color:#111;"><span style="transform:scaleX(1.1061);transform-origin:left">8-Apr-25</span></div><div class="t" style="left:136.25px;top:66.00px;font-size:11.5px;font-weight:normal;color:#111;"><span style="transform:scaleX(0.9414);transform-origin:left">Philadelphia</span></div><div class="t" style="left:350.5px;top:66.00px;font-size:11.5px;font-weight:normal;color:#111;"><span style="transform:translateX(-50%) scaleX(0.9642);transform-origin:center">MGO</span></div><div class="t" style="left:1114.5px;top:66.00px;font-size:11.5px;font-weight:normal;color:#111;"><span style="transform:translateX(-50%) scaleX(1.0019);transform-origin:center">sold combined</span></div><div class="t" style="left:1226.0px;top:67.00px;font-size:10.5px;font-weight:normal;color:#111;"><span style="transform:translateX(-50%) scaleX(1.0637);transform-origin:center">MTD</span></div><div class="t" style="left:18px;top:78.00px;font-size:17px;font-weight:normal;color:#555;"><span style="transform:translateX(-50%) scaleX(0.9252);transform-origin:center">6014</span></div><div class="t" style="left:41.25px;top:82.00px;font-size:11.5px;font-weight:normal;color:#111;"><span style="transform:scaleX(1.1061);transform-origin:left">8-Apr-25</span></div><div class="t" style="left:136.25px;top:82.00px;font-size:11.5px;font-weight:normal;color:#111;"><span style="transform:scaleX(0.9984);transform-origin:left">Baltimore</span></div><div class="t" style="left:350.5px;top:82.00px;font-size:11.5px;font-weight:normal;color:#111;"><span style="transform:translateX(-50%) scaleX(0.9014);transform-origin:center">VLSFO</span></div><div class="t" style="left:1114.5px;top:82.00px;font-size:11.5px;font-weight:normal;color:#111;"><span style="transform:translateX(-50%) scaleX(1.0202);transform-origin:center">quote combined</span></div><div class="t" style="left:1226.0px;top:83.00px;font-size:10.5px;font-weight:normal;color:#111;"><span style="transform:translateX(-50%) scaleX(1.1948);transform-origin:center">mtw</span></div><div class="t" style="left:18px;top:94.00px;font-size:17px;font-weight:normal;color:#555;"><span style="transform:translateX(-50%) scaleX(0.9252);transform-origin:center">6015</span></div><div class="t" style="left:41.25px;top:98.00px;font-size:11.5px;font-weight:normal;color:#111;"><span style="transform:scaleX(1.1061);transform-origin:left">8-Apr-25</span></div><div class="t" style="left:136.25px;top:98.00px;font-size:11.5px;font-weight:normal;color:#111;"><span style="transform:scaleX(0.9984);transform-origin:left">Baltimore</span></div><div class="t" style="left:350.5px;top:98.00px;font-size:11.5px;font-weight:normal;color:#111;"><span style="transform:translateX(-50%) scaleX(0.9642);transform-origin:center">MGO</span></div><div class="t" style="left:1114.5px;top:98.00px;font-size:11.5px;font-weight:normal;color:#111;"><span style="transform:translateX(-50%) scaleX(1.0202);transform-origin:center">quote combined</span></div><div class="t" style="left:1226.0px;top:99.00px;font-size:10.5px;font-weight:normal;color:#111;"><span style="transform:translateX(-50%) scaleX(1.1948);transform-origin:center">mtw</span></div><div class="t" style="left:18px;top:111.00px;font-size:17px;font-weight:normal;color:#555;"><span style="transform:translateX(-50%) scaleX(0.9252);transform-origin:center">6016</span></div><div class="t" style="left:41.25px;top:114.00px;font-size:11.5px;font-weight:normal;color:#111;"><span style="transform:scaleX(1.1061);transform-origin:left">8-Apr-25</span></div><div class="t" style="left:136.25px;top:114.00px;font-size:11.5px;font-weight:normal;color:#111;"><span style="transform:scaleX(0.9984);transform-origin:left">Baltimore</span></div><div class="t" style="left:350.5px;top:114.00px;font-size:11.5px;font-weight:normal;color:#111;"><span style="transform:translateX(-50%) scaleX(0.9642);transform-origin:center">MGO</span></div><div class="t" style="left:1114.5px;top:114.00px;font-size:11.5px;font-weight:normal;color:#111;"><span style="transform:translateX(-50%) scaleX(0.9806);transform-origin:center">sold</span></div><div class="t" style="left:1226.0px;top:115.00px;font-size:10.5px;font-weight:normal;color:#111;"><span style="transform:translateX(-50%) scaleX(1.1948);transform-origin:center">mtw</span></div><div class="t" style="left:18px;top:127.00px;font-size:17px;font-weight:normal;color:#555;"><span style="transform:translateX(-50%) scaleX(0.9252);transform-origin:center">6017</span></div><div class="t" style="left:41.25px;top:130.00px;font-size:11.5px;font-weight:normal;color:#111;"><span style="transform:scaleX(1.1061);transform-origin:left">8-Apr-25</span></div><div class="t" style="left:136.25px;top:130.00px;font-size:11.5px;font-weight:normal;color:#111;"><span style="transform:scaleX(0.9830);transform-origin:left">Wilmington, DE</span></div><div class="t" style="left:350.5px;top:130.00px;font-size:11.5px;font-weight:normal;color:#111;"><span style="transform:translateX(-50%) scaleX(0.9642);transform-origin:center">MGO</span></div><div class="t" style="left:1114.5px;top:130.00px;font-size:11.5px;font-weight:normal;color:#111;"><span style="transform:translateX(-50%) scaleX(0.9806);transform-origin:center">sold</span></div><div class="t" style="left:1226.0px;top:131.00px;font-size:10.5px;font-weight:normal;color:#111;"><span style="transform:translateX(-50%) scaleX(1.0981);transform-origin:center">truck</span></div><div class="t" style="left:18px;top:143.00px;font-size:17px;font-weight:normal;color:#555;"><span style="transform:translateX(-50%) scaleX(0.9252);transform-origin:center">6018</span></div><div class="t" style="left:41.25px;top:146.00px;font-size:11.5px;font-weight:normal;color:#111;"><span style="transform:scaleX(1.1061);transform-origin:left">8-Apr-25</span></div><div class="t" style="left:136.25px;top:146.00px;font-size:11.5px;font-weight:normal;color:#111;"><span style="transform:scaleX(0.8919);transform-origin:left">Jacksonville</span></div><div class="t" style="left:350.5px;top:146.00px;font-size:11.5px;font-weight:normal;color:#111;"><span style="transform:translateX(-50%) scaleX(0.9642);transform-origin:center">MGO</span></div><div class="t" style="left:1114.5px;top:146.00px;font-size:11.5px;font-weight:normal;color:#111;"><span style="transform:translateX(-50%) scaleX(0.9806);transform-origin:center">sold</span></div><div class="t" style="left:1226.0px;top:147.00px;font-size:10.5px;font-weight:normal;color:#111;"><span style="transform:translateX(-50%) scaleX(1.0637);transform-origin:center">MTD</span></div><div class="t" style="left:18px;top:159.00px;font-size:17px;font-weight:normal;color:#555;"><span style="transform:translateX(-50%) scaleX(0.9252);transform-origin:center">6019</span></div><div class="t" style="left:41.25px;top:163.00px;font-size:11.5px;font-weight:normal;color:#111;"><span style="transform:scaleX(1.1061);transform-origin:left">8-Apr-25</span></div><div class="t" style="left:136.25px;top:163.00px;font-size:11.5px;font-weight:normal;color:#111;"><span style="transform:scaleX(0.9777);transform-origin:left">Port Everglades</span></div><div class="t" style="left:350.5px;top:163.00px;font-size:11.5px;font-weight:normal;color:#111;"><span style="transform:translateX(-50%) scaleX(0.9642);transform-origin:center">MGO</span></div><div class="t" style="left:905.5px;top:163.00px;font-size:11.5px;font-weight:normal;color:#111;"><span style="transform:translateX(-50%) scaleX(1.1378);transform-origin:center">9-Apr</span></div><div class="t" style="left:1114.5px;top:163.00px;font-size:11.5px;font-weight:normal;color:#111;"><span style="transform:translateX(-50%) scaleX(0.9806);transform-origin:center">sold</span></div><div class="t" style="left:1226.0px;top:164.00px;font-size:10.5px;font-weight:normal;color:#111;"><span style="transform:translateX(-50%) scaleX(1.0637);transform-origin:center">MTD</span></div><div class="t" style="left:18px;top:175.00px;font-size:17px;font-weight:normal;color:#555;"><span style="transform:translateX(-50%) scaleX(0.9252);transform-origin:center">6020</span></div><div class="t" style="left:41.25px;top:179.00px;font-size:11.5px;font-weight:normal;color:#111;"><span style="transform:scaleX(1.1061);transform-origin:left">8-Apr-25</span></div><div class="t" style="left:136.25px;top:179.00px;font-size:11.5px;font-weight:normal;color:#111;"><span style="transform:scaleX(0.9640);transform-origin:left">Quebec City</span></div><div class="t" style="left:350.5px;top:179.00px;font-size:11.5px;font-weight:normal;color:#111;"><span style="transform:translateX(-50%) scaleX(0.9642);transform-origin:center">MGO</span></div><div class="t" style="left:905.5px;top:179.00px;font-size:11.5px;font-weight:normal;color:#111;"><span style="transform:translateX(-50%) scaleX(1.0628);transform-origin:center">16-Apr</span></div><div class="t" style="left:1114.5px;top:179.00px;font-size:11.5px;font-weight:normal;color:#111;"><span style="transform:translateX(-50%) scaleX(0.9806);transform-origin:center">sold</span></div><div class="t" style="left:1226.0px;top:180.00px;font-size:10.5px;font-weight:normal;color:#111;"><span style="transform:translateX(-50%) scaleX(1.0637);transform-origin:center">MTD</span></div><div class="t" style="left:18px;top:191.00px;font-size:17px;font-weight:normal;color:#555;"><span style="transform:translateX(-50%) scaleX(0.9252);transform-origin:center">6021</span></div><div class="t" style="left:41.25px;top:195.00px;font-size:11.5px;font-weight:normal;color:#111;"><span style="transform:scaleX(1.1061);transform-origin:left">8-Apr-25</span></div><div class="t" style="left:136.25px;top:195.00px;font-size:11.5px;font-weight:normal;color:#111;"><span style="transform:scaleX(1.0127);transform-origin:left">Toledo, Ohio</span></div><div class="t" style="left:350.5px;top:195.00px;font-size:11.5px;font-weight:normal;color:#111;"><span style="transform:translateX(-50%) scaleX(0.9642);transform-origin:center">MGO</span></div><div class="t" style="left:905.5px;top:195.00px;font-size:11.5px;font-weight:normal;color:#111;"><span style="transform:translateX(-50%) scaleX(1.0628);transform-origin:center">15-Apr</span></div><div class="t" style="left:1114.5px;top:195.00px;font-size:11.5px;font-weight:normal;color:#111;"><span style="transform:translateX(-50%) scaleX(0.9806);transform-origin:center">sold</span></div><div class="t" style="left:1226.0px;top:196.00px;font-size:10.5px;font-weight:normal;color:#111;"><span style="transform:translateX(-50%) scaleX(1.0637);transform-origin:center">MTD</span></div><div class="t" style="left:18px;top:208.00px;font-size:17px;font-weight:normal;color:#555;"><span style="transform:translateX(-50%) scaleX(0.9252);transform-origin:center">6022</span></div><div class="t" style="left:41.25px;top:211.00px;font-size:11.5px;font-weight:normal;color:#111;"><span style="transform:scaleX(1.1128);transform-origin:left">9-Apr-25</span></div><div class="t" style="left:136.25px;top:211.00px;font-size:11.5px;font-weight:normal;color:#111;"><span style="transform:scaleX(0.9783);transform-origin:left">Singapore</span></div><div class="t" style="left:350.5px;top:211.00px;font-size:11.5px;font-weight:normal;color:#111;"><span style="transform:translateX(-50%) scaleX(0.9642);transform-origin:center">MGO</span></div><div class="t" style="left:905.5px;top:211.00px;font-size:11.5px;font-weight:normal;color:#111;"><span style="transform:translateX(-50%) scaleX(1.0628);transform-origin:center">17-Apr</span></div><div class="t" style="left:966.5px;top:211.00px;font-size:11.5px;font-weight:normal;color:#111;"><span style="transform:translateX(-50%) scaleX(1.0628);transform-origin:center">16-Apr</span></div><div class="t" style="left:1027.0px;top:211.00px;font-size:11.5px;font-weight:normal;color:#111;"><span style="transform:translateX(-50%) scaleX(1.0628);transform-origin:center">18-Apr</span></div><div class="t" style="left:1114.5px;top:211.00px;font-size:11.5px;font-weight:normal;color:#111;"><span style="transform:translateX(-50%) scaleX(0.9806);transform-origin:center">sold</span></div><div class="t" style="left:1226.0px;top:212.00px;font-size:10.5px;font-weight:normal;color:#111;"><span style="transform:translateX(-50%) scaleX(1.0637);transform-origin:center">MTD</span></div><div class="t" style="left:18px;top:224.00px;font-size:17px;font-weight:normal;color:#555;"><span style="transform:translateX(-50%) scaleX(0.9252);transform-origin:center">6023</span></div><div class="t" style="left:41.25px;top:227.00px;font-size:11.5px;font-weight:normal;color:#111;"><span style="transform:scaleX(1.1128);transform-origin:left">9-Apr-25</span></div><div class="t" style="left:136.25px;top:227.00px;font-size:11.5px;font-weight:normal;color:#111;"><span style="transform:scaleX(0.9783);transform-origin:left">Singapore</span></div><div class="t" style="left:350.5px;top:227.00px;font-size:11.5px;font-weight:normal;color:#111;"><span style="transform:translateX(-50%) scaleX(0.9014);transform-origin:center">VLSFO</span></div><div class="t" style="left:905.5px;top:227.00px;font-size:11.5px;font-weight:normal;color:#111;"><span style="transform:translateX(-50%) scaleX(1.0628);transform-origin:center">30-Apr</span></div><div class="t" style="left:966.5px;top:227.00px;font-size:11.5px;font-weight:normal;color:#111;"><span style="transform:translateX(-50%) scaleX(1.0628);transform-origin:center">25-Apr</span></div><div class="t" style="left:1027.0px;top:227.00px;font-size:11.5px;font-weight:normal;color:#111;"><span style="transform:translateX(-50%) scaleX(1.0641);transform-origin:center">5-May</span></div><div class="t" style="left:1114.5px;top:227.00px;font-size:11.5px;font-weight:normal;color:#111;"><span style="transform:translateX(-50%) scaleX(0.9806);transform-origin:center">sold</span></div><div class="t" style="left:1226.0px;top:228.00px;font-size:10.5px;font-weight:normal;color:#111;"><span style="transform:translateX(-50%) scaleX(1.0637);transform-origin:center">MTD</span></div><div class="t" style="left:1283.5px;top:228.00px;font-size:10.5px;font-weight:normal;color:#111;"><span style="transform:scaleX(1.0183);transform-origin:left">Late laycan</span></div><div class="t" style="left:18px;top:240.00px;font-size:17px;font-weight:normal;color:#555;"><span style="transform:translateX(-50%) scaleX(0.9252);transform-origin:center">6024</span></div><div class="t" style="left:41.25px;top:243.00px;font-size:11.5px;font-weight:normal;color:#111;"><span style="transform:scaleX(1.1128);transform-origin:left">9-Apr-25</span></div><div class="t" style="left:136.25px;top:243.00px;font-size:11.5px;font-weight:normal;color:#111;"><span style="transform:scaleX(0.9783);transform-origin:left">Singapore</span></div><div class="t" style="left:350.5px;top:243.00px;font-size:11.5px;font-weight:normal;color:#111;"><span style="transform:translateX(-50%) scaleX(0.9014);transform-origin:center">VLSFO</span></div><div class="t" style="left:905.5px;top:243.00px;font-size:11.5px;font-weight:normal;color:#111;"><span style="transform:translateX(-50%) scaleX(1.0899);transform-origin:center">11-Apr</span></div><div class="t" style="left:1114.5px;top:243.00px;font-size:11.5px;font-weight:normal;color:#111;"><span style="transform:translateX(-50%) scaleX(0.9806);transform-origin:center">sold</span></div><div class="t" style="left:1226.0px;top:244.00px;font-size:10.5px;font-weight:normal;color:#111;"><span style="transform:translateX(-50%) scaleX(1.0637);transform-origin:center">MTD</span></div><div class="t" style="left:1283.5px;top:244.00px;font-size:10.5px;font-weight:normal;color:#111;"><span style="transform:scaleX(1.1317);transform-origin:left">Prompt</span></div><div class="t" style="left:18px;top:256.00px;font-size:17px;font-weight:normal;color:#555;"><span style="transform:translateX(-50%) scaleX(0.9252);transform-origin:center">6025</span></div><div class="t" style="left:41.25px;top:260.00px;font-size:11.5px;font-weight:normal;color:#111;"><span style="transform:scaleX(1.1128);transform-origin:left">9-Apr-25</span></div><div class="t" style="left:136.25px;top:260.00px;font-size:11.5px;font-weight:normal;color:#111;"><span style="transform:scaleX(0.9783);transform-origin:left">Singapore</span></div><div class="t" style="left:350.5px;top:260.00px;font-size:11.5px;font-weight:normal;color:#111;"><span style="transform:translateX(-50%) scaleX(0.9014);transform-origin:center">VLSFO</span></div><div class="t" style="left:905.5px;top:260.00px;font-size:11.5px;font-weight:normal;color:#111;"><span style="transform:translateX(-50%) scaleX(1.0628);transform-origin:center">25-Apr</span></div><div class="t" style="left:1114.5px;top:260.00px;font-size:11.5px;font-weight:normal;color:#111;"><span style="transform:translateX(-50%) scaleX(0.9806);transform-origin:center">sold</span></div><div class="t" style="left:1226.0px;top:261.00px;font-size:10.5px;font-weight:normal;color:#111;"><span style="transform:translateX(-50%) scaleX(1.0637);transform-origin:center">MTD</span></div><div class="t" style="left:1283.5px;top:261.00px;font-size:10.5px;font-weight:normal;color:#111;"><span style="transform:scaleX(1.0183);transform-origin:left">Late laycan</span></div><div class="t" style="left:18px;top:272.00px;font-size:17px;font-weight:normal;color:#555;"><span style="transform:translateX(-50%) scaleX(0.9252);transform-origin:center">6026</span></div><div class="t" style="left:41.25px;top:276.00px;font-size:11.5px;font-weight:normal;color:#111;"><span style="transform:scaleX(1.1128);transform-origin:left">9-Apr-25</span></div><div class="t" style="left:136.25px;top:276.00px;font-size:11.5px;font-weight:normal;color:#111;"><span style="transform:scaleX(0.9783);transform-origin:left">Singapore</span></div><div class="t" style="left:350.5px;top:276.00px;font-size:11.5px;font-weight:normal;color:#111;"><span style="transform:translateX(-50%) scaleX(0.9014);transform-origin:center">VLSFO</span></div><div class="t" style="left:905.5px;top:276.00px;font-size:11.5px;font-weight:normal;color:#111;"><span style="transform:translateX(-50%) scaleX(1.0628);transform-origin:center">20-Apr</span></div><div class="t" style="left:1114.5px;top:276.00px;font-size:11.5px;font-weight:normal;color:#111;"><span style="transform:translateX(-50%) scaleX(0.9806);transform-origin:center">sold</span></div><div class="t" style="left:1226.0px;top:277.00px;font-size:10.5px;font-weight:normal;color:#111;"><span style="transform:translateX(-50%) scaleX(1.0637);transform-origin:center">MTD</span></div><div class="t" style="left:1283.5px;top:277.00px;font-size:10.5px;font-weight:normal;color:#111;"><span style="transform:scaleX(1.0923);transform-origin:left">Reported after hours</span></div><div class="t" style="left:18px;top:288.00px;font-size:17px;font-weight:normal;color:#555;"><span style="transform:translateX(-50%) scaleX(0.9252);transform-origin:center">6027</span></div><div class="t" style="left:41.25px;top:292.00px;font-size:11.5px;font-weight:normal;color:#111;"><span style="transform:scaleX(1.1128);transform-origin:left">9-Apr-25</span></div><div class="t" style="left:136.25px;top:292.00px;font-size:11.5px;font-weight:normal;color:#111;"><span style="transform:scaleX(0.9783);transform-origin:left">Singapore</span></div><div class="t" style="left:350.5px;top:292.00px;font-size:11.5px;font-weight:normal;color:#111;"><span style="transform:translateX(-50%) scaleX(0.9642);transform-origin:center">MGO</span></div><div class="t" style="left:905.5px;top:292.00px;font-size:11.5px;font-weight:normal;color:#111;"><span style="transform:translateX(-50%) scaleX(1.0628);transform-origin:center">17-Apr</span></div><div class="t" style="left:1114.5px;top:292.00px;font-size:11.5px;font-weight:normal;color:#111;"><span style="transform:translateX(-50%) scaleX(0.9806);transform-origin:center">sold</span></div><div class="t" style="left:1226.0px;top:293.00px;font-size:10.5px;font-weight:normal;color:#111;"><span style="transform:translateX(-50%) scaleX(1.0637);transform-origin:center">MTD</span></div><div class="t" style="left:1283.5px;top:293.00px;font-size:10.5px;font-weight:normal;color:#111;"><span style="transform:scaleX(1.0923);transform-origin:left">Reported after hours</span></div><div class="t" style="left:18px;top:305.00px;font-size:17px;font-weight:normal;color:#555;"><span style="transform:translateX(-50%) scaleX(0.9252);transform-origin:center">6028</span></div><div class="t" style="left:41.25px;top:308.00px;font-size:11.5px;font-weight:normal;color:#111;"><span style="transform:scaleX(1.1128);transform-origin:left">9-Apr-25</span></div><div class="t" style="left:136.25px;top:308.00px;font-size:11.5px;font-weight:normal;color:#111;"><span style="transform:scaleX(0.9783);transform-origin:left">Singapore</span></div><div class="t" style="left:350.5px;top:308.00px;font-size:11.5px;font-weight:normal;color:#111;"><span style="transform:translateX(-50%) scaleX(0.9014);transform-origin:center">VLSFO</span></div><div class="t" style="left:905.5px;top:308.00px;font-size:11.5px;font-weight:normal;color:#111;"><span style="transform:translateX(-50%) scaleX(1.0628);transform-origin:center">21-Apr</span></div><div class="t" style="left:1114.5px;top:308.00px;font-size:11.5px;font-weight:normal;color:#111;"><span style="transform:translateX(-50%) scaleX(0.9806);transform-origin:center">sold</span></div><div class="t" style="left:1226.0px;top:309.00px;font-size:10.5px;font-weight:normal;color:#111;"><span style="transform:translateX(-50%) scaleX(1.0637);transform-origin:center">MTD</span></div><div class="t" style="left:1283.5px;top:309.00px;font-size:10.5px;font-weight:normal;color:#111;"><span style="transform:scaleX(1.0923);transform-origin:left">Reported after hours</span></div><div class="t" style="left:18px;top:321.00px;font-size:17px;font-weight:normal;color:#555;"><span style="transform:translateX(-50%) scaleX(0.9252);transform-origin:center">6029</span></div><div class="t" style="left:41.25px;top:324.00px;font-size:11.5px;font-weight:normal;color:#111;"><span style="transform:scaleX(1.1128);transform-origin:left">9-Apr-25</span></div><div class="t" style="left:136.25px;top:324.00px;font-size:11.5px;font-weight:normal;color:#111;"><span style="transform:scaleX(0.9783);transform-origin:left">Singapore</span></div><div class="t" style="left:350.5px;top:324.00px;font-size:11.5px;font-weight:normal;color:#111;"><span style="transform:translateX(-50%) scaleX(0.9014);transform-origin:center">VLSFO</span></div><div class="t" style="left:905.5px;top:324.00px;font-size:11.5px;font-weight:normal;color:#111;"><span style="transform:translateX(-50%) scaleX(1.0628);transform-origin:center">18-Apr</span></div><div class="t" style="left:1114.5px;top:324.00px;font-size:11.5px;font-weight:normal;color:#111;"><span style="transform:translateX(-50%) scaleX(1.0019);transform-origin:center">sold combined</span></div><div class="t" style="left:1226.0px;top:325.00px;font-size:10.5px;font-weight:normal;color:#111;"><span style="transform:translateX(-50%) scaleX(1.0637);transform-origin:center">MTD</span></div><div class="t" style="left:1283.5px;top:325.00px;font-size:10.5px;font-weight:normal;color:#111;"><span style="transform:scaleX(1.0923);transform-origin:left">Reported after hours</span></div><div class="t" style="left:18px;top:337.00px;font-size:17px;font-weight:normal;color:#555;"><span style="transform:translateX(-50%) scaleX(0.9252);transform-origin:center">6030</span></div><div class="t" style="left:41.25px;top:340.00px;font-size:11.5px;font-weight:normal;color:#111;"><span style="transform:scaleX(1.1128);transform-origin:left">9-Apr-25</span></div><div class="t" style="left:136.25px;top:340.00px;font-size:11.5px;font-weight:normal;color:#111;"><span style="transform:scaleX(0.9783);transform-origin:left">Singapore</span></div><div class="t" style="left:350.5px;top:340.00px;font-size:11.5px;font-weight:normal;color:#111;"><span style="transform:translateX(-50%) scaleX(0.9642);transform-origin:center">MGO</span></div><div class="t" style="left:905.5px;top:340.00px;font-size:11.5px;font-weight:normal;color:#111;"><span style="transform:translateX(-50%) scaleX(1.0628);transform-origin:center">18-Apr</span></div><div class="t" style="left:1114.5px;top:340.00px;font-size:11.5px;font-weight:normal;color:#111;"><span style="transform:translateX(-50%) scaleX(1.0019);transform-origin:center">sold combined</span></div><div class="t" style="left:1226.0px;top:341.00px;font-size:10.5px;font-weight:normal;color:#111;"><span style="transform:translateX(-50%) scaleX(1.0637);transform-origin:center">MTD</span></div><div class="t" style="left:1283.5px;top:341.00px;font-size:10.5px;font-weight:normal;color:#111;"><span style="transform:scaleX(1.0923);transform-origin:left">Reported after hours</span></div><div class="t" style="left:18px;top:353.00px;font-size:17px;font-weight:normal;color:#555;"><span style="transform:translateX(-50%) scaleX(0.9252);transform-origin:center">6031</span></div><div class="t" style="left:41.25px;top:357.00px;font-size:11.5px;font-weight:normal;color:#111;"><span style="transform:scaleX(1.1128);transform-origin:left">9-Apr-25</span></div><div class="t" style="left:136.25px;top:357.00px;font-size:11.5px;font-weight:normal;color:#111;"><span style="transform:scaleX(0.9783);transform-origin:left">Singapore</span></div><div class="t" style="left:350.5px;top:357.00px;font-size:11.5px;font-weight:normal;color:#111;"><span style="transform:translateX(-50%) scaleX(0.9014);transform-origin:center">VLSFO</span></div><div class="t" style="left:905.5px;top:357.00px;font-size:11.5px;font-weight:normal;color:#111;"><span style="transform:translateX(-50%) scaleX(1.0628);transform-origin:center">17-Apr</span></div><div class="t" style="left:1114.5px;top:357.00px;font-size:11.5px;font-weight:normal;color:#111;"><span style="transform:translateX(-50%) scaleX(0.9806);transform-origin:center">sold</span></div><div class="t" style="left:1226.0px;top:358.00px;font-size:10.5px;font-weight:normal;color:#111;"><span style="transform:translateX(-50%) scaleX(1.0637);transform-origin:center">MTD</span></div><div class="t" style="left:18px;top:369.00px;font-size:17px;font-weight:normal;color:#555;"><span style="transform:translateX(-50%) scaleX(0.9252);transform-origin:center">6032</span></div><div class="t" style="left:41.25px;top:373.00px;font-size:11.5px;font-weight:normal;color:#111;"><span style="transform:scaleX(1.1128);transform-origin:left">9-Apr-25</span></div><div class="t" style="left:136.25px;top:373.00px;font-size:11.5px;font-weight:normal;color:#111;"><span style="transform:scaleX(0.9783);transform-origin:left">Singapore</span></div><div class="t" style="left:350.5px;top:373.00px;font-size:11.5px;font-weight:normal;color:#111;"><span style="transform:translateX(-50%) scaleX(0.9014);transform-origin:center">VLSFO</span></div><div class="t" style="left:905.5px;top:373.00px;font-size:11.5px;font-weight:normal;color:#111;"><span style="transform:translateX(-50%) scaleX(1.0628);transform-origin:center">16-Apr</span></div><div class="t" style="left:1114.5px;top:373.00px;font-size:11.5px;font-weight:normal;color:#111;"><span style="transform:translateX(-50%) scaleX(0.9806);transform-origin:center">sold</span></div><div class="t" style="left:1226.0px;top:374.00px;font-size:10.5px;font-weight:normal;color:#111;"><span style="transform:translateX(-50%) scaleX(1.0637);transform-origin:center">MTD</span></div><div class="t" style="left:18px;top:385.00px;font-size:17px;font-weight:normal;color:#555;"><span style="transform:translateX(-50%) scaleX(0.9252);transform-origin:center">6033</span></div><div class="t" style="left:41.25px;top:389.00px;font-size:11.5px;font-weight:normal;color:#111;"><span style="transform:scaleX(1.1128);transform-origin:left">9-Apr-25</span></div><div class="t" style="left:136.25px;top:389.00px;font-size:11.5px;font-weight:normal;color:#111;"><span style="transform:scaleX(0.9783);transform-origin:left">Singapore</span></div><div class="t" style="left:350.5px;top:389.00px;font-size:11.5px;font-weight:normal;color:#111;"><span style="transform:translateX(-50%) scaleX(0.9014);transform-origin:center">VLSFO</span></div><div class="t" style="left:905.5px;top:389.00px;font-size:11.5px;font-weight:normal;color:#111;"><span style="transform:translateX(-50%) scaleX(1.0628);transform-origin:center">18-Apr</span></div><div class="t" style="left:1114.5px;top:389.00px;font-size:11.5px;font-weight:normal;color:#111;"><span style="transform:translateX(-50%) scaleX(0.9806);transform-origin:center">sold</span></div><div class="t" style="left:1226.0px;top:390.00px;font-size:10.5px;font-weight:normal;color:#111;"><span style="transform:translateX(-50%) scaleX(1.0637);transform-origin:center">MTD</span></div><div class="t" style="left:18px;top:402.00px;font-size:17px;font-weight:normal;color:#555;"><span style="transform:translateX(-50%) scaleX(0.9252);transform-origin:center">6034</span></div><div class="t" style="left:41.25px;top:405.00px;font-size:11.5px;font-weight:normal;color:#111;"><span style="transform:scaleX(1.1128);transform-origin:left">9-Apr-25</span></div><div class="t" style="left:136.25px;top:405.00px;font-size:11.5px;font-weight:normal;color:#111;"><span style="transform:scaleX(0.9783);transform-origin:left">Singapore</span></div><div class="t" style="left:350.5px;top:405.00px;font-size:11.5px;font-weight:normal;color:#111;"><span style="transform:translateX(-50%) scaleX(0.9014);transform-origin:center">VLSFO</span></div><div class="t" style="left:905.5px;top:405.00px;font-size:11.5px;font-weight:normal;color:#111;"><span style="transform:translateX(-50%) scaleX(1.0628);transform-origin:center">19-Apr</span></div><div class="t" style="left:1114.5px;top:405.00px;font-size:11.5px;font-weight:normal;color:#111;"><span style="transform:translateX(-50%) scaleX(0.9806);transform-origin:center">sold</span></div><div class="t" style="left:1226.0px;top:406.00px;font-size:10.5px;font-weight:normal;color:#111;"><span style="transform:translateX(-50%) scaleX(1.0637);transform-origin:center">MTD</span></div><div class="t" style="left:18px;top:418.00px;font-size:17px;font-weight:normal;color:#555;"><span style="transform:translateX(-50%) scaleX(0.9252);transform-origin:center">6035</span></div><div class="t" style="left:41.25px;top:421.00px;font-size:11.5px;font-weight:normal;color:#111;"><span style="transform:scaleX(1.1128);transform-origin:left">9-Apr-25</span></div><div class="t" style="left:136.25px;top:421.00px;font-size:11.5px;font-weight:normal;color:#111;"><span style="transform:scaleX(0.9783);transform-origin:left">Singapore</span></div><div class="t" style="left:350.5px;top:421.00px;font-size:11.5px;font-weight:normal;color:#111;"><span style="transform:translateX(-50%) scaleX(0.9014);transform-origin:center">VLSFO</span></div><div class="t" style="left:905.5px;top:421.00px;font-size:11.5px;font-weight:normal;color:#111;"><span style="transform:translateX(-50%) scaleX(1.0628);transform-origin:center">16-Apr</span></div><div class="t" style="left:1114.5px;top:421.00px;font-size:11.5px;font-weight:normal;color:#111;"><span style="transform:translateX(-50%) scaleX(0.9806);transform-origin:center">sold</span></div><div class="t" style="left:1226.0px;top:422.00px;font-size:10.5px;font-weight:normal;color:#111;"><span style="transform:translateX(-50%) scaleX(1.0637);transform-origin:center">MTD</span></div><div class="t" style="left:18px;top:434.00px;font-size:17px;font-weight:normal;color:#555;"><span style="transform:translateX(-50%) scaleX(0.9252);transform-origin:center">6036</span></div><div class="t" style="left:41.25px;top:437.00px;font-size:11.5px;font-weight:normal;color:#111;"><span style="transform:scaleX(1.1128);transform-origin:left">9-Apr-25</span></div><div class="t" style="left:136.25px;top:437.00px;font-size:11.5px;font-weight:normal;color:#111;"><span style="transform:scaleX(0.9783);transform-origin:left">Singapore</span></div><div class="t" style="left:350.5px;top:437.00px;font-size:11.5px;font-weight:normal;color:#111;"><span style="transform:translateX(-50%) scaleX(0.9014);transform-origin:center">VLSFO</span></div><div class="t" style="left:905.5px;top:437.00px;font-size:11.5px;font-weight:normal;color:#111;"><span style="transform:translateX(-50%) scaleX(1.0628);transform-origin:center">18-Apr</span></div><div class="t" style="left:1114.5px;top:437.00px;font-size:11.5px;font-weight:normal;color:#111;"><span style="transform:translateX(-50%) scaleX(0.9806);transform-origin:center">sold</span></div><div class="t" style="left:1226.0px;top:438.00px;font-size:10.5px;font-weight:normal;color:#111;"><span style="transform:translateX(-50%) scaleX(1.0637);transform-origin:center">MTD</span></div><div class="t" style="left:18px;top:450.00px;font-size:17px;font-weight:normal;color:#555;"><span style="transform:translateX(-50%) scaleX(0.9252);transform-origin:center">6037</span></div><div class="t" style="left:41.25px;top:454.00px;font-size:11.5px;font-weight:normal;color:#111;"><span style="transform:scaleX(1.1128);transform-origin:left">9-Apr-25</span></div><div class="t" style="left:136.25px;top:454.00px;font-size:11.5px;font-weight:normal;color:#111;"><span style="transform:scaleX(0.9783);transform-origin:left">Singapore</span></div><div class="t" style="left:350.5px;top:454.00px;font-size:11.5px;font-weight:normal;color:#111;"><span style="transform:translateX(-50%) scaleX(0.9014);transform-origin:center">VLSFO</span></div><div class="t" style="left:905.5px;top:454.00px;font-size:11.5px;font-weight:normal;color:#111;"><span style="transform:translateX(-50%) scaleX(1.0628);transform-origin:center">19-Apr</span></div><div class="t" style="left:1114.5px;top:454.00px;font-size:11.5px;font-weight:normal;color:#111;"><span style="transform:translateX(-50%) scaleX(0.9806);transform-origin:center">sold</span></div><div class="t" style="left:1226.0px;top:455.00px;font-size:10.5px;font-weight:normal;color:#111;"><span style="transform:translateX(-50%) scaleX(1.0637);transform-origin:center">MTD</span></div><div class="t" style="left:18px;top:466.00px;font-size:17px;font-weight:normal;color:#555;"><span style="transform:translateX(-50%) scaleX(0.9252);transform-origin:center">6038</span></div><div class="t" style="left:41.25px;top:470.00px;font-size:11.5px;font-weight:normal;color:#111;"><span style="transform:scaleX(1.1128);transform-origin:left">9-Apr-25</span></div><div class="t" style="left:136.25px;top:470.00px;font-size:11.5px;font-weight:normal;color:#111;"><span style="transform:scaleX(0.9783);transform-origin:left">Singapore</span></div><div class="t" style="left:350.5px;top:470.00px;font-size:11.5px;font-weight:normal;color:#111;"><span style="transform:translateX(-50%) scaleX(0.9014);transform-origin:center">VLSFO</span></div><div class="t" style="left:905.5px;top:470.00px;font-size:11.5px;font-weight:normal;color:#111;"><span style="transform:translateX(-50%) scaleX(1.0628);transform-origin:center">17-Apr</span></div><div class="t" style="left:1114.5px;top:470.00px;font-size:11.5px;font-weight:normal;color:#111;"><span style="transform:translateX(-50%) scaleX(0.9806);transform-origin:center">sold</span></div><div class="t" style="left:1226.0px;top:471.00px;font-size:10.5px;font-weight:normal;color:#111;"><span style="transform:translateX(-50%) scaleX(1.0637);transform-origin:center">MTD</span></div><div class="t" style="left:18px;top:482.00px;font-size:17px;font-weight:normal;color:#555;"><span style="transform:translateX(-50%) scaleX(0.9252);transform-origin:center">6039</span></div><div class="t" style="left:41.25px;top:486.00px;font-size:11.5px;font-weight:normal;color:#111;"><span style="transform:scaleX(1.1128);transform-origin:left">9-Apr-25</span></div><div class="t" style="left:136.25px;top:486.00px;font-size:11.5px;font-weight:normal;color:#111;"><span style="transform:scaleX(0.9783);transform-origin:left">Singapore</span></div><div class="t" style="left:350.5px;top:486.00px;font-size:11.5px;font-weight:normal;color:#111;"><span style="transform:translateX(-50%) scaleX(0.8763);transform-origin:center">HSFO</span></div><div class="t" style="left:905.5px;top:486.00px;font-size:11.5px;font-weight:normal;color:#111;"><span style="transform:translateX(-50%) scaleX(1.0628);transform-origin:center">16-Apr</span></div><div class="t" style="left:1114.5px;top:486.00px;font-size:11.5px;font-weight:normal;color:#111;"><span style="transform:translateX(-50%) scaleX(0.9806);transform-origin:center">sold</span></div><div class="t" style="left:1226.0px;top:487.00px;font-size:10.5px;font-weight:normal;color:#111;"><span style="transform:translateX(-50%) scaleX(1.0637);transform-origin:center">MTD</span></div><div class="t" style="left:18px;top:499.00px;font-size:17px;font-weight:normal;color:#555;"><span style="transform:translateX(-50%) scaleX(0.9252);transform-origin:center">6040</span></div><div class="t" style="left:41.25px;top:502.00px;font-size:11.5px;font-weight:normal;color:#111;"><span style="transform:scaleX(1.1128);transform-origin:left">9-Apr-25</span></div><div class="t" style="left:136.25px;top:502.00px;font-size:11.5px;font-weight:normal;color:#111;"><span style="transform:scaleX(0.9576);transform-origin:left">Incheon</span></div><div class="t" style="left:350.5px;top:502.00px;font-size:11.5px;font-weight:normal;color:#111;"><span style="transform:translateX(-50%) scaleX(0.9014);transform-origin:center">VLSFO</span></div><div class="t" style="left:905.5px;top:502.00px;font-size:11.5px;font-weight:normal;color:#111;"><span style="transform:translateX(-50%) scaleX(1.0628);transform-origin:center">25-Apr</span></div><div class="t" style="left:966.5px;top:502.00px;font-size:11.5px;font-weight:normal;color:#111;"><span style="transform:translateX(-50%) scaleX(1.0628);transform-origin:center">21-Apr</span></div><div class="t" style="left:1027.0px;top:502.00px;font-size:11.5px;font-weight:normal;color:#111;"><span style="transform:translateX(-50%) scaleX(1.0628);transform-origin:center">30-Apr</span></div><div class="t" style="left:1114.5px;top:502.00px;font-size:11.5px;font-weight:normal;color:#111;"><span style="transform:translateX(-50%) scaleX(1.0667);transform-origin:center">quote</span></div><div class="t" style="left:1226.0px;top:503.00px;font-size:10.5px;font-weight:normal;color:#111;"><span style="transform:translateX(-50%) scaleX(1.0637);transform-origin:center">MTD</span></div><div class="t" style="left:18px;top:515.00px;font-size:17px;font-weight:normal;color:#555;"><span style="transform:translateX(-50%) scaleX(0.9252);transform-origin:center">6041</span></div><div class="t" style="left:41.25px;top:518.00px;font-size:11.5px;font-weight:normal;color:#111;"><span style="transform:scaleX(1.1128);transform-origin:left">9-Apr-25</span></div><div class="t" style="left:136.25px;top:518.00px;font-size:11.5px;font-weight:normal;color:#111;"><span style="transform:scaleX(0.9576);transform-origin:left">Incheon</span></div><div class="t" style="left:350.5px;top:518.00px;font-size:11.5px;font-weight:normal;color:#111;"><span style="transform:translateX(-50%) scaleX(0.9642);transform-origin:center">MGO</span></div><div class="t" style="left:905.5px;top:518.00px;font-size:11.5px;font-weight:normal;color:#111;"><span style="transform:translateX(-50%) scaleX(1.0628);transform-origin:center">25-Apr</span></div><div class="t" style="left:966.5px;top:518.00px;font-size:11.5px;font-weight:normal;color:#111;"><span style="transform:translateX(-50%) scaleX(1.0628);transform-origin:center">21-Apr</span></div><div class="t" style="left:1027.0px;top:518.00px;font-size:11.5px;font-weight:normal;color:#111;"><span style="transform:translateX(-50%) scaleX(1.0628);transform-origin:center">30-Apr</span></div><div class="t" style="left:1114.5px;top:518.00px;font-size:11.5px;font-weight:normal;color:#111;"><span style="transform:translateX(-50%) scaleX(1.0667);transform-origin:center">quote</span></div><div class="t" style="left:1226.0px;top:519.00px;font-size:10.5px;font-weight:normal;color:#111;"><span style="transform:translateX(-50%) scaleX(1.0637);transform-origin:center">MTD</span></div><div class="t" style="left:18px;top:531.00px;font-size:17px;font-weight:normal;color:#555;"><span style="transform:translateX(-50%) scaleX(0.9252);transform-origin:center">6042</span></div><div class="t" style="left:41.25px;top:534.00px;font-size:11.5px;font-weight:normal;color:#111;"><span style="transform:scaleX(1.1128);transform-origin:left">9-Apr-25</span></div><div class="t" style="left:136.25px;top:534.00px;font-size:11.5px;font-weight:normal;color:#111;"><span style="transform:scaleX(0.9657);transform-origin:left">Zhoushan</span></div><div class="t" style="left:350.5px;top:534.00px;font-size:11.5px;font-weight:normal;color:#111;"><span style="transform:translateX(-50%) scaleX(0.9014);transform-origin:center">VLSFO</span></div><div class="t" style="left:905.5px;top:534.00px;font-size:11.5px;font-weight:normal;color:#111;"><span style="transform:translateX(-50%) scaleX(1.0628);transform-origin:center">24-Apr</span></div><div class="t" style="left:966.5px;top:534.00px;font-size:11.5px;font-weight:normal;color:#111;"><span style="transform:translateX(-50%) scaleX(1.0628);transform-origin:center">22-Apr</span></div><div class="t" style="left:1027.0px;top:534.00px;font-size:11.5px;font-weight:normal;color:#111;"><span style="transform:translateX(-50%) scaleX(1.0628);transform-origin:center">26-Apr</span></div><div class="t" style="left:1114.5px;top:534.00px;font-size:11.5px;font-weight:normal;color:#111;"><span style="transform:translateX(-50%) scaleX(0.9806);transform-origin:center">sold</span></div><div class="t" style="left:1226.0px;top:535.00px;font-size:10.5px;font-weight:normal;color:#111;"><span style="transform:translateX(-50%) scaleX(1.0637);transform-origin:center">MTD</span></div><div class="t" style="left:18px;top:547.00px;font-size:17px;font-weight:normal;color:#555;"><span style="transform:translateX(-50%) scaleX(0.9252);transform-origin:center">6043</span></div><div class="t" style="left:41.25px;top:551.00px;font-size:11.5px;font-weight:normal;color:#111;"><span style="transform:scaleX(1.1128);transform-origin:left">9-Apr-25</span></div><div class="t" style="left:136.25px;top:551.00px;font-size:11.5px;font-weight:normal;color:#111;"><span style="transform:scaleX(0.9657);transform-origin:left">Zhoushan</span></div><div class="t" style="left:350.5px;top:551.00px;font-size:11.5px;font-weight:normal;color:#111;"><span style="transform:translateX(-50%) scaleX(0.9014);transform-origin:center">VLSFO</span></div><div class="t" style="left:905.5px;top:551.00px;font-size:11.5px;font-weight:normal;color:#111;"><span style="transform:translateX(-50%) scaleX(1.0628);transform-origin:center">16-Apr</span></div><div class="t" style="left:966.5px;top:551.00px;font-size:11.5px;font-weight:normal;color:#111;"><span style="transform:translateX(-50%) scaleX(1.0628);transform-origin:center">12-Apr</span></div><div class="t" style="left:1027.0px;top:551.00px;font-size:11.5px;font-weight:normal;color:#111;"><span style="transform:translateX(-50%) scaleX(1.0628);transform-origin:center">20-Apr</span></div><div class="t" style="left:1114.5px;top:551.00px;font-size:11.5px;font-weight:normal;color:#111;"><span style="transform:translateX(-50%) scaleX(0.9806);transform-origin:center">sold</span></div><div class="t" style="left:1226.0px;top:552.00px;font-size:10.5px;font-weight:normal;color:#111;"><span style="transform:translateX(-50%) scaleX(1.0637);transform-origin:center">MTD</span></div><div class="t" style="left:18px;top:563.00px;font-size:17px;font-weight:normal;color:#555;"><span style="transform:translateX(-50%) scaleX(0.9252);transform-origin:center">6044</span></div><div class="t" style="left:41.25px;top:567.00px;font-size:11.5px;font-weight:normal;color:#111;"><span style="transform:scaleX(1.1128);transform-origin:left">9-Apr-25</span></div><div class="t" style="left:136.25px;top:567.00px;font-size:11.5px;font-weight:normal;color:#111;"><span style="transform:scaleX(0.9657);transform-origin:left">Zhoushan</span></div><div class="t" style="left:350.5px;top:567.00px;font-size:11.5px;font-weight:normal;color:#111;"><span style="transform:translateX(-50%) scaleX(0.9014);transform-origin:center">VLSFO</span></div><div class="t" style="left:905.5px;top:567.00px;font-size:11.5px;font-weight:normal;color:#111;"><span style="transform:translateX(-50%) scaleX(1.0628);transform-origin:center">17-Apr</span></div><div class="t" style="left:966.5px;top:567.00px;font-size:11.5px;font-weight:normal;color:#111;"><span style="transform:translateX(-50%) scaleX(1.0628);transform-origin:center">13-Apr</span></div><div class="t" style="left:1027.0px;top:567.00px;font-size:11.5px;font-weight:normal;color:#111;"><span style="transform:translateX(-50%) scaleX(1.0628);transform-origin:center">21-Apr</span></div><div class="t" style="left:1114.5px;top:567.00px;font-size:11.5px;font-weight:normal;color:#111;"><span style="transform:translateX(-50%) scaleX(0.9806);transform-origin:center">sold</span></div><div class="t" style="left:1226.0px;top:568.00px;font-size:10.5px;font-weight:normal;color:#111;"><span style="transform:translateX(-50%) scaleX(1.0637);transform-origin:center">MTD</span></div><div class="t" style="left:18px;top:579.00px;font-size:17px;font-weight:normal;color:#555;"><span style="transform:translateX(-50%) scaleX(0.9252);transform-origin:center">6045</span></div><div class="t" style="left:41.25px;top:583.00px;font-size:11.5px;font-weight:normal;color:#111;"><span style="transform:scaleX(1.1128);transform-origin:left">9-Apr-25</span></div><div class="t" style="left:136.25px;top:583.00px;font-size:11.5px;font-weight:normal;color:#111;"><span style="transform:scaleX(0.9657);transform-origin:left">Zhoushan</span></div><div class="t" style="left:350.5px;top:583.00px;font-size:11.5px;font-weight:normal;color:#111;"><span style="transform:translateX(-50%) scaleX(0.9014);transform-origin:center">VLSFO</span></div><div class="t" style="left:905.5px;top:583.00px;font-size:11.5px;font-weight:normal;color:#111;"><span style="transform:translateX(-50%) scaleX(1.0628);transform-origin:center">17-Apr</span></div><div class="t" style="left:966.5px;top:583.00px;font-size:11.5px;font-weight:normal;color:#111;"><span style="transform:translateX(-50%) scaleX(1.0628);transform-origin:center">13-Apr</span></div><div class="t" style="left:1027.0px;top:583.00px;font-size:11.5px;font-weight:normal;color:#111;"><span style="transform:translateX(-50%) scaleX(1.0628);transform-origin:center">21-Apr</span></div><div class="t" style="left:1114.5px;top:583.00px;font-size:11.5px;font-weight:normal;color:#111;"><span style="transform:translateX(-50%) scaleX(0.9806);transform-origin:center">sold</span></div><div class="t" style="left:1226.0px;top:584.00px;font-size:10.5px;font-weight:normal;color:#111;"><span style="transform:translateX(-50%) scaleX(1.0637);transform-origin:center">MTD</span></div></div><div style="position:absolute;left:420px;top:336.5px;width:1.6px;height:7px;background:#3c9a5f;"></div><div style="position:absolute;left:420px;top:352.5px;width:1.6px;height:7px;background:#3c9a5f;"></div><div style="position:absolute;left:0px;top:160.5px;width:1760px;height:1px;background:#a0a0a0;"></div><div style="position:absolute;left:132.3px;top:88px;width:1.5px;height:660px;background:#a8a8a8;"></div><div style="position:absolute;left:421px;top:161px;width:235px;height:587px;overflow:hidden"><div style="position:absolute;left:0;top:-20px;width:100%;height:calc(100% + 40px);filter:blur(4.5px)"><div style="position:absolute;left:0;top:20px;width:100%;height:100%"><div style="position:absolute;left:-10px;top:-3.1709999999999923px;width:255px;height:16.171px;background:#d9e1f2"></div><div style="position:absolute;left:-10px;top:12.500000000000007px;width:255px;height:1px;background:#8ea9db"></div><div style="position:absolute;left:-10px;top:13.0px;width:255px;height:16.171px;background:#ffffff"></div><div style="position:absolute;left:-10px;top:28.671px;width:255px;height:1px;background:#8ea9db"></div><div style="position:absolute;left:-10px;top:29.170999999999992px;width:255px;height:16.171px;background:#d9e1f2"></div><div style="position:absolute;left:-10px;top:44.84199999999999px;width:255px;height:1px;background:#8ea9db"></div><div style="position:absolute;left:-10px;top:45.341999999999985px;width:255px;height:16.171px;background:#ffffff"></div><div style="position:absolute;left:-10px;top:61.012999999999984px;width:255px;height:1px;background:#8ea9db"></div><div style="position:absolute;left:-10px;top:61.513000000000005px;width:255px;height:16.171px;background:#d9e1f2"></div><div style="position:absolute;left:-10px;top:77.184px;width:255px;height:1px;background:#8ea9db"></div><div style="position:absolute;left:-10px;top:77.684px;width:255px;height:16.171px;background:#ffffff"></div><div style="position:absolute;left:-10px;top:93.35499999999999px;width:255px;height:1px;background:#8ea9db"></div><div style="position:absolute;left:-10px;top:93.85499999999999px;width:255px;height:16.171px;background:#d9e1f2"></div><div style="position:absolute;left:-10px;top:109.52599999999998px;width:255px;height:1px;background:#8ea9db"></div><div style="position:absolute;left:-10px;top:110.02600000000001px;width:255px;height:16.171px;background:#ffffff"></div><div style="position:absolute;left:-10px;top:125.697px;width:255px;height:1px;background:#8ea9db"></div><div style="position:absolute;left:-10px;top:126.197px;width:255px;height:16.171px;background:#d9e1f2"></div><div style="position:absolute;left:-10px;top:141.868px;width:255px;height:1px;background:#8ea9db"></div><div style="position:absolute;left:-10px;top:142.368px;width:255px;height:16.171px;background:#ffffff"></div><div style="position:absolute;left:-10px;top:158.039px;width:255px;height:1px;background:#8ea9db"></div><div style="position:absolute;left:-10px;top:158.539px;width:255px;height:16.171px;background:#d9e1f2"></div><div style="position:absolute;left:-10px;top:174.20999999999998px;width:255px;height:1px;background:#8ea9db"></div><div style="position:absolute;left:-10px;top:174.70999999999998px;width:255px;height:16.171px;background:#ffffff"></div><div style="position:absolute;left:-10px;top:190.38099999999997px;width:255px;height:1px;background:#8ea9db"></div><div style="position:absolute;left:-10px;top:190.88099999999997px;width:255px;height:16.171px;background:#d9e1f2"></div><div style="position:absolute;left:-10px;top:206.55199999999996px;width:255px;height:1px;background:#8ea9db"></div><div style="position:absolute;left:-10px;top:207.05200000000002px;width:255px;height:16.171px;background:#ffffff"></div><div style="position:absolute;left:-10px;top:222.723px;width:255px;height:1px;background:#8ea9db"></div><div style="position:absolute;left:-10px;top:223.22299999999996px;width:255px;height:16.171px;background:#d9e1f2"></div><div style="position:absolute;left:-10px;top:238.89399999999995px;width:255px;height:1px;background:#8ea9db"></div><div style="position:absolute;left:-10px;top:239.394px;width:255px;height:16.171px;background:#ffffff"></div><div style="position:absolute;left:-10px;top:255.065px;width:255px;height:1px;background:#8ea9db"></div><div style="position:absolute;left:-10px;top:255.565px;width:255px;height:16.171px;background:#d9e1f2"></div><div style="position:absolute;left:-10px;top:271.236px;width:255px;height:1px;background:#8ea9db"></div><div style="position:absolute;left:-10px;top:271.736px;width:255px;height:16.171px;background:#ffffff"></div><div style="position:absolute;left:-10px;top:287.407px;width:255px;height:1px;background:#8ea9db"></div><div style="position:absolute;left:-10px;top:287.907px;width:255px;height:16.171px;background:#d9e1f2"></div><div style="position:absolute;left:-10px;top:303.578px;width:255px;height:1px;background:#8ea9db"></div><div style="position:absolute;left:-10px;top:304.078px;width:255px;height:16.171px;background:#ffffff"></div><div style="position:absolute;left:-10px;top:319.74899999999997px;width:255px;height:1px;background:#8ea9db"></div><div style="position:absolute;left:-10px;top:320.24899999999997px;width:255px;height:16.171px;background:#d9e1f2"></div><div style="position:absolute;left:-10px;top:335.91999999999996px;width:255px;height:1px;background:#8ea9db"></div><div style="position:absolute;left:-10px;top:336.41999999999996px;width:255px;height:16.171px;background:#ffffff"></div><div style="position:absolute;left:-10px;top:352.09099999999995px;width:255px;height:1px;background:#8ea9db"></div><div style="position:absolute;left:-10px;top:352.591px;width:255px;height:16.171px;background:#d9e1f2"></div><div style="position:absolute;left:-10px;top:368.262px;width:255px;height:1px;background:#8ea9db"></div><div style="position:absolute;left:-10px;top:368.76199999999994px;width:255px;height:16.171px;background:#ffffff"></div><div style="position:absolute;left:-10px;top:384.43299999999994px;width:255px;height:1px;background:#8ea9db"></div><div style="position:absolute;left:-10px;top:384.933px;width:255px;height:16.171px;background:#d9e1f2"></div><div style="position:absolute;left:-10px;top:400.604px;width:255px;height:1px;background:#8ea9db"></div><div style="position:absolute;left:-10px;top:401.10400000000004px;width:255px;height:16.171px;background:#ffffff"></div><div style="position:absolute;left:-10px;top:416.77500000000003px;width:255px;height:1px;background:#8ea9db"></div><div style="position:absolute;left:-10px;top:417.275px;width:255px;height:16.171px;background:#d9e1f2"></div><div style="position:absolute;left:-10px;top:432.94599999999997px;width:255px;height:1px;background:#8ea9db"></div><div style="position:absolute;left:-10px;top:433.4459999999999px;width:255px;height:16.171px;background:#ffffff"></div><div style="position:absolute;left:-10px;top:449.1169999999999px;width:255px;height:1px;background:#8ea9db"></div><div style="position:absolute;left:-10px;top:449.61699999999996px;width:255px;height:16.171px;background:#d9e1f2"></div><div style="position:absolute;left:-10px;top:465.28799999999995px;width:255px;height:1px;background:#8ea9db"></div><div style="position:absolute;left:-10px;top:465.788px;width:255px;height:16.171px;background:#ffffff"></div><div style="position:absolute;left:-10px;top:481.459px;width:255px;height:1px;background:#8ea9db"></div><div style="position:absolute;left:-10px;top:481.95900000000006px;width:255px;height:16.171px;background:#d9e1f2"></div><div style="position:absolute;left:-10px;top:497.63000000000005px;width:255px;height:1px;background:#8ea9db"></div><div style="position:absolute;left:-10px;top:498.13px;width:255px;height:16.171px;background:#ffffff"></div><div style="position:absolute;left:-10px;top:513.801px;width:255px;height:1px;background:#8ea9db"></div><div style="position:absolute;left:-10px;top:514.3009999999999px;width:255px;height:16.171px;background:#d9e1f2"></div><div style="position:absolute;left:-10px;top:529.972px;width:255px;height:1px;background:#8ea9db"></div><div style="position:absolute;left:-10px;top:530.472px;width:255px;height:16.171px;background:#ffffff"></div><div style="position:absolute;left:-10px;top:546.143px;width:255px;height:1px;background:#8ea9db"></div><div style="position:absolute;left:-10px;top:546.643px;width:255px;height:16.171px;background:#d9e1f2"></div><div style="position:absolute;left:-10px;top:562.3140000000001px;width:255px;height:1px;background:#8ea9db"></div><div style="position:absolute;left:-10px;top:562.814px;width:255px;height:16.171px;background:#ffffff"></div><div style="position:absolute;left:-10px;top:578.485px;width:255px;height:1px;background:#8ea9db"></div><div style="position:absolute;left:-10px;top:578.985px;width:255px;height:16.171px;background:#d9e1f2"></div><div style="position:absolute;left:-10px;top:594.6560000000001px;width:255px;height:1px;background:#8ea9db"></div><div style="position:absolute;left:28.5px;top:-0.17099999999999227px;width:15px;height:11px;background:#4a4a4a;opacity:0.42"></div><div style="position:absolute;left:199.0px;top:-0.17099999999999227px;width:26px;height:11px;background:#4a4a4a;opacity:0.42"></div><div style="position:absolute;left:28.5px;top:16.0px;width:15px;height:11px;background:#4a4a4a;opacity:0.42"></div><div style="position:absolute;left:199.0px;top:16.0px;width:26px;height:11px;background:#4a4a4a;opacity:0.42"></div><div style="position:absolute;left:28.5px;top:32.17099999999999px;width:15px;height:11px;background:#4a4a4a;opacity:0.42"></div><div style="position:absolute;left:199.0px;top:32.17099999999999px;width:26px;height:11px;background:#4a4a4a;opacity:0.42"></div><div style="position:absolute;left:28.5px;top:48.341999999999985px;width:15px;height:11px;background:#4a4a4a;opacity:0.42"></div><div style="position:absolute;left:199.0px;top:48.341999999999985px;width:26px;height:11px;background:#4a4a4a;opacity:0.42"></div><div style="position:absolute;left:28.5px;top:64.513px;width:15px;height:11px;background:#4a4a4a;opacity:0.42"></div><div style="position:absolute;left:199.0px;top:64.513px;width:26px;height:11px;background:#4a4a4a;opacity:0.42"></div><div style="position:absolute;left:28.5px;top:80.684px;width:15px;height:11px;background:#4a4a4a;opacity:0.42"></div><div style="position:absolute;left:199.0px;top:80.684px;width:26px;height:11px;background:#4a4a4a;opacity:0.42"></div><div style="position:absolute;left:28.5px;top:96.85499999999999px;width:15px;height:11px;background:#4a4a4a;opacity:0.42"></div><div style="position:absolute;left:199.0px;top:96.85499999999999px;width:26px;height:11px;background:#4a4a4a;opacity:0.42"></div><div style="position:absolute;left:28.5px;top:113.02600000000001px;width:15px;height:11px;background:#4a4a4a;opacity:0.42"></div><div style="position:absolute;left:199.0px;top:113.02600000000001px;width:26px;height:11px;background:#4a4a4a;opacity:0.42"></div><div style="position:absolute;left:28.5px;top:129.197px;width:15px;height:11px;background:#4a4a4a;opacity:0.42"></div><div style="position:absolute;left:199.0px;top:129.197px;width:26px;height:11px;background:#4a4a4a;opacity:0.42"></div><div style="position:absolute;left:28.5px;top:145.368px;width:15px;height:11px;background:#4a4a4a;opacity:0.42"></div><div style="position:absolute;left:199.0px;top:145.368px;width:26px;height:11px;background:#4a4a4a;opacity:0.42"></div><div style="position:absolute;left:28.5px;top:161.539px;width:15px;height:11px;background:#4a4a4a;opacity:0.42"></div><div style="position:absolute;left:199.0px;top:161.539px;width:26px;height:11px;background:#4a4a4a;opacity:0.42"></div><div style="position:absolute;left:28.5px;top:177.70999999999998px;width:15px;height:11px;background:#4a4a4a;opacity:0.42"></div><div style="position:absolute;left:199.0px;top:177.70999999999998px;width:26px;height:11px;background:#4a4a4a;opacity:0.42"></div><div style="position:absolute;left:93.0px;top:177.70999999999998px;width:10px;height:11px;background:#4a4a4a;opacity:0.42"></div><div style="position:absolute;left:144.0px;top:177.70999999999998px;width:10px;height:11px;background:#4a4a4a;opacity:0.42"></div><div style="position:absolute;left:28.5px;top:193.88099999999997px;width:15px;height:11px;background:#4a4a4a;opacity:0.42"></div><div style="position:absolute;left:199.0px;top:193.88099999999997px;width:26px;height:11px;background:#4a4a4a;opacity:0.42"></div><div style="position:absolute;left:93.0px;top:193.88099999999997px;width:10px;height:11px;background:#4a4a4a;opacity:0.42"></div><div style="position:absolute;left:144.0px;top:193.88099999999997px;width:10px;height:11px;background:#4a4a4a;opacity:0.42"></div><div style="position:absolute;left:28.5px;top:210.05200000000002px;width:15px;height:11px;background:#4a4a4a;opacity:0.42"></div><div style="position:absolute;left:199.0px;top:210.05200000000002px;width:26px;height:11px;background:#4a4a4a;opacity:0.42"></div><div style="position:absolute;left:93.0px;top:210.05200000000002px;width:10px;height:11px;background:#4a4a4a;opacity:0.42"></div><div style="position:absolute;left:144.0px;top:210.05200000000002px;width:10px;height:11px;background:#4a4a4a;opacity:0.42"></div><div style="position:absolute;left:28.5px;top:226.22299999999996px;width:15px;height:11px;background:#4a4a4a;opacity:0.42"></div><div style="position:absolute;left:199.0px;top:226.22299999999996px;width:26px;height:11px;background:#4a4a4a;opacity:0.42"></div><div style="position:absolute;left:28.5px;top:242.394px;width:15px;height:11px;background:#4a4a4a;opacity:0.42"></div><div style="position:absolute;left:199.0px;top:242.394px;width:26px;height:11px;background:#4a4a4a;opacity:0.42"></div><div style="position:absolute;left:28.5px;top:258.565px;width:15px;height:11px;background:#4a4a4a;opacity:0.42"></div><div style="position:absolute;left:199.0px;top:258.565px;width:26px;height:11px;background:#4a4a4a;opacity:0.42"></div><div style="position:absolute;left:28.5px;top:274.736px;width:15px;height:11px;background:#4a4a4a;opacity:0.42"></div><div style="position:absolute;left:199.0px;top:274.736px;width:26px;height:11px;background:#4a4a4a;opacity:0.42"></div><div style="position:absolute;left:28.5px;top:290.907px;width:15px;height:11px;background:#4a4a4a;opacity:0.42"></div><div style="position:absolute;left:199.0px;top:290.907px;width:26px;height:11px;background:#4a4a4a;opacity:0.42"></div><div style="position:absolute;left:28.5px;top:307.078px;width:15px;height:11px;background:#4a4a4a;opacity:0.42"></div><div style="position:absolute;left:199.0px;top:307.078px;width:26px;height:11px;background:#4a4a4a;opacity:0.42"></div><div style="position:absolute;left:28.5px;top:323.24899999999997px;width:15px;height:11px;background:#4a4a4a;opacity:0.42"></div><div style="position:absolute;left:199.0px;top:323.24899999999997px;width:26px;height:11px;background:#4a4a4a;opacity:0.42"></div><div style="position:absolute;left:28.5px;top:339.41999999999996px;width:15px;height:11px;background:#4a4a4a;opacity:0.42"></div><div style="position:absolute;left:199.0px;top:339.41999999999996px;width:26px;height:11px;background:#4a4a4a;opacity:0.42"></div><div style="position:absolute;left:28.5px;top:355.591px;width:15px;height:11px;background:#4a4a4a;opacity:0.42"></div><div style="position:absolute;left:199.0px;top:355.591px;width:26px;height:11px;background:#4a4a4a;opacity:0.42"></div><div style="position:absolute;left:28.5px;top:371.76199999999994px;width:15px;height:11px;background:#4a4a4a;opacity:0.42"></div><div style="position:absolute;left:199.0px;top:371.76199999999994px;width:26px;height:11px;background:#4a4a4a;opacity:0.42"></div><div style="position:absolute;left:28.5px;top:387.933px;width:15px;height:11px;background:#4a4a4a;opacity:0.42"></div><div style="position:absolute;left:199.0px;top:387.933px;width:26px;height:11px;background:#4a4a4a;opacity:0.42"></div><div style="position:absolute;left:28.5px;top:404.10400000000004px;width:15px;height:11px;background:#4a4a4a;opacity:0.42"></div><div style="position:absolute;left:199.0px;top:404.10400000000004px;width:26px;height:11px;background:#4a4a4a;opacity:0.42"></div><div style="position:absolute;left:28.5px;top:420.275px;width:15px;height:11px;background:#4a4a4a;opacity:0.42"></div><div style="position:absolute;left:199.0px;top:420.275px;width:26px;height:11px;background:#4a4a4a;opacity:0.42"></div><div style="position:absolute;left:28.5px;top:436.4459999999999px;width:15px;height:11px;background:#4a4a4a;opacity:0.42"></div><div style="position:absolute;left:199.0px;top:436.4459999999999px;width:26px;height:11px;background:#4a4a4a;opacity:0.42"></div><div style="position:absolute;left:28.5px;top:452.61699999999996px;width:15px;height:11px;background:#4a4a4a;opacity:0.42"></div><div style="position:absolute;left:199.0px;top:452.61699999999996px;width:26px;height:11px;background:#4a4a4a;opacity:0.42"></div><div style="position:absolute;left:28.5px;top:468.788px;width:15px;height:11px;background:#4a4a4a;opacity:0.42"></div><div style="position:absolute;left:199.0px;top:468.788px;width:26px;height:11px;background:#4a4a4a;opacity:0.42"></div><div style="position:absolute;left:28.5px;top:484.95900000000006px;width:15px;height:11px;background:#4a4a4a;opacity:0.42"></div><div style="position:absolute;left:199.0px;top:484.95900000000006px;width:26px;height:11px;background:#4a4a4a;opacity:0.42"></div><div style="position:absolute;left:28.5px;top:501.13px;width:15px;height:11px;background:#4a4a4a;opacity:0.42"></div><div style="position:absolute;left:199.0px;top:501.13px;width:26px;height:11px;background:#4a4a4a;opacity:0.42"></div><div style="position:absolute;left:93.0px;top:501.13px;width:10px;height:11px;background:#4a4a4a;opacity:0.42"></div><div style="position:absolute;left:144.0px;top:501.13px;width:10px;height:11px;background:#4a4a4a;opacity:0.42"></div><div style="position:absolute;left:28.5px;top:517.3009999999999px;width:15px;height:11px;background:#4a4a4a;opacity:0.42"></div><div style="position:absolute;left:199.0px;top:517.3009999999999px;width:26px;height:11px;background:#4a4a4a;opacity:0.42"></div><div style="position:absolute;left:93.0px;top:517.3009999999999px;width:10px;height:11px;background:#4a4a4a;opacity:0.42"></div><div style="position:absolute;left:144.0px;top:517.3009999999999px;width:10px;height:11px;background:#4a4a4a;opacity:0.42"></div><div style="position:absolute;left:28.5px;top:533.472px;width:15px;height:11px;background:#4a4a4a;opacity:0.42"></div><div style="position:absolute;left:199.0px;top:533.472px;width:26px;height:11px;background:#4a4a4a;opacity:0.42"></div><div style="position:absolute;left:93.0px;top:533.472px;width:10px;height:11px;background:#4a4a4a;opacity:0.42"></div><div style="position:absolute;left:144.0px;top:533.472px;width:10px;height:11px;background:#4a4a4a;opacity:0.42"></div><div style="position:absolute;left:28.5px;top:549.643px;width:15px;height:11px;background:#4a4a4a;opacity:0.42"></div><div style="position:absolute;left:199.0px;top:549.643px;width:26px;height:11px;background:#4a4a4a;opacity:0.42"></div><div style="position:absolute;left:28.5px;top:565.814px;width:15px;height:11px;background:#4a4a4a;opacity:0.42"></div><div style="position:absolute;left:199.0px;top:565.814px;width:26px;height:11px;background:#4a4a4a;opacity:0.42"></div><div style="position:absolute;left:28.5px;top:581.985px;width:15px;height:11px;background:#4a4a4a;opacity:0.42"></div><div style="position:absolute;left:199.0px;top:581.985px;width:26px;height:11px;background:#4a4a4a;opacity:0.42"></div></div></div></div><div style="position:absolute;left:1423px;top:161px;width:324px;height:579px;overflow:hidden"><div style="position:absolute;left:0;top:-20px;width:100%;height:calc(100% + 40px);filter:blur(4.5px)"><div style="position:absolute;left:0;top:20px;width:100%;height:100%"><div style="position:absolute;left:-10px;top:-3.1709999999999923px;width:344px;height:16.171px;background:#d9e1f2"></div><div style="position:absolute;left:-10px;top:12.500000000000007px;width:344px;height:1px;background:#8ea9db"></div><div style="position:absolute;left:-10px;top:13.0px;width:344px;height:16.171px;background:#ffffff"></div><div style="position:absolute;left:-10px;top:28.671px;width:344px;height:1px;background:#8ea9db"></div><div style="position:absolute;left:-10px;top:29.170999999999992px;width:344px;height:16.171px;background:#d9e1f2"></div><div style="position:absolute;left:-10px;top:44.84199999999999px;width:344px;height:1px;background:#8ea9db"></div><div style="position:absolute;left:-10px;top:45.341999999999985px;width:344px;height:16.171px;background:#ffffff"></div><div style="position:absolute;left:-10px;top:61.012999999999984px;width:344px;height:1px;background:#8ea9db"></div><div style="position:absolute;left:-10px;top:61.513000000000005px;width:344px;height:16.171px;background:#d9e1f2"></div><div style="position:absolute;left:-10px;top:77.184px;width:344px;height:1px;background:#8ea9db"></div><div style="position:absolute;left:-10px;top:77.684px;width:344px;height:16.171px;background:#ffffff"></div><div style="position:absolute;left:-10px;top:93.35499999999999px;width:344px;height:1px;background:#8ea9db"></div><div style="position:absolute;left:-10px;top:93.85499999999999px;width:344px;height:16.171px;background:#d9e1f2"></div><div style="position:absolute;left:-10px;top:109.52599999999998px;width:344px;height:1px;background:#8ea9db"></div><div style="position:absolute;left:-10px;top:110.02600000000001px;width:344px;height:16.171px;background:#ffffff"></div><div style="position:absolute;left:-10px;top:125.697px;width:344px;height:1px;background:#8ea9db"></div><div style="position:absolute;left:-10px;top:126.197px;width:344px;height:16.171px;background:#d9e1f2"></div><div style="position:absolute;left:-10px;top:141.868px;width:344px;height:1px;background:#8ea9db"></div><div style="position:absolute;left:-10px;top:142.368px;width:344px;height:16.171px;background:#ffffff"></div><div style="position:absolute;left:-10px;top:158.039px;width:344px;height:1px;background:#8ea9db"></div><div style="position:absolute;left:-10px;top:158.539px;width:344px;height:16.171px;background:#d9e1f2"></div><div style="position:absolute;left:-10px;top:174.20999999999998px;width:344px;height:1px;background:#8ea9db"></div><div style="position:absolute;left:-10px;top:174.70999999999998px;width:344px;height:16.171px;background:#ffffff"></div><div style="position:absolute;left:-10px;top:190.38099999999997px;width:344px;height:1px;background:#8ea9db"></div><div style="position:absolute;left:-10px;top:190.88099999999997px;width:344px;height:16.171px;background:#d9e1f2"></div><div style="position:absolute;left:-10px;top:206.55199999999996px;width:344px;height:1px;background:#8ea9db"></div><div style="position:absolute;left:-10px;top:207.05200000000002px;width:344px;height:16.171px;background:#ffffff"></div><div style="position:absolute;left:-10px;top:222.723px;width:344px;height:1px;background:#8ea9db"></div><div style="position:absolute;left:-10px;top:223.22299999999996px;width:344px;height:16.171px;background:#d9e1f2"></div><div style="position:absolute;left:-10px;top:238.89399999999995px;width:344px;height:1px;background:#8ea9db"></div><div style="position:absolute;left:-10px;top:239.394px;width:344px;height:16.171px;background:#ffffff"></div><div style="position:absolute;left:-10px;top:255.065px;width:344px;height:1px;background:#8ea9db"></div><div style="position:absolute;left:-10px;top:255.565px;width:344px;height:16.171px;background:#d9e1f2"></div><div style="position:absolute;left:-10px;top:271.236px;width:344px;height:1px;background:#8ea9db"></div><div style="position:absolute;left:-10px;top:271.736px;width:344px;height:16.171px;background:#ffffff"></div><div style="position:absolute;left:-10px;top:287.407px;width:344px;height:1px;background:#8ea9db"></div><div style="position:absolute;left:-10px;top:287.907px;width:344px;height:16.171px;background:#d9e1f2"></div><div style="position:absolute;left:-10px;top:303.578px;width:344px;height:1px;background:#8ea9db"></div><div style="position:absolute;left:-10px;top:304.078px;width:344px;height:16.171px;background:#ffffff"></div><div style="position:absolute;left:-10px;top:319.74899999999997px;width:344px;height:1px;background:#8ea9db"></div><div style="position:absolute;left:-10px;top:320.24899999999997px;width:344px;height:16.171px;background:#d9e1f2"></div><div style="position:absolute;left:-10px;top:335.91999999999996px;width:344px;height:1px;background:#8ea9db"></div><div style="position:absolute;left:-10px;top:336.41999999999996px;width:344px;height:16.171px;background:#ffffff"></div><div style="position:absolute;left:-10px;top:352.09099999999995px;width:344px;height:1px;background:#8ea9db"></div><div style="position:absolute;left:-10px;top:352.591px;width:344px;height:16.171px;background:#d9e1f2"></div><div style="position:absolute;left:-10px;top:368.262px;width:344px;height:1px;background:#8ea9db"></div><div style="position:absolute;left:-10px;top:368.76199999999994px;width:344px;height:16.171px;background:#ffffff"></div><div style="position:absolute;left:-10px;top:384.43299999999994px;width:344px;height:1px;background:#8ea9db"></div><div style="position:absolute;left:-10px;top:384.933px;width:344px;height:16.171px;background:#d9e1f2"></div><div style="position:absolute;left:-10px;top:400.604px;width:344px;height:1px;background:#8ea9db"></div><div style="position:absolute;left:-10px;top:401.10400000000004px;width:344px;height:16.171px;background:#ffffff"></div><div style="position:absolute;left:-10px;top:416.77500000000003px;width:344px;height:1px;background:#8ea9db"></div><div style="position:absolute;left:-10px;top:417.275px;width:344px;height:16.171px;background:#d9e1f2"></div><div style="position:absolute;left:-10px;top:432.94599999999997px;width:344px;height:1px;background:#8ea9db"></div><div style="position:absolute;left:-10px;top:433.4459999999999px;width:344px;height:16.171px;background:#ffffff"></div><div style="position:absolute;left:-10px;top:449.1169999999999px;width:344px;height:1px;background:#8ea9db"></div><div style="position:absolute;left:-10px;top:449.61699999999996px;width:344px;height:16.171px;background:#d9e1f2"></div><div style="position:absolute;left:-10px;top:465.28799999999995px;width:344px;height:1px;background:#8ea9db"></div><div style="position:absolute;left:-10px;top:465.788px;width:344px;height:16.171px;background:#ffffff"></div><div style="position:absolute;left:-10px;top:481.459px;width:344px;height:1px;background:#8ea9db"></div><div style="position:absolute;left:-10px;top:481.95900000000006px;width:344px;height:16.171px;background:#d9e1f2"></div><div style="position:absolute;left:-10px;top:497.63000000000005px;width:344px;height:1px;background:#8ea9db"></div><div style="position:absolute;left:-10px;top:498.13px;width:344px;height:16.171px;background:#ffffff"></div><div style="position:absolute;left:-10px;top:513.801px;width:344px;height:1px;background:#8ea9db"></div><div style="position:absolute;left:-10px;top:514.3009999999999px;width:344px;height:16.171px;background:#d9e1f2"></div><div style="position:absolute;left:-10px;top:529.972px;width:344px;height:1px;background:#8ea9db"></div><div style="position:absolute;left:-10px;top:530.472px;width:344px;height:16.171px;background:#ffffff"></div><div style="position:absolute;left:-10px;top:546.143px;width:344px;height:1px;background:#8ea9db"></div><div style="position:absolute;left:-10px;top:546.643px;width:344px;height:16.171px;background:#d9e1f2"></div><div style="position:absolute;left:-10px;top:562.3140000000001px;width:344px;height:1px;background:#8ea9db"></div><div style="position:absolute;left:-10px;top:562.814px;width:344px;height:16.171px;background:#ffffff"></div><div style="position:absolute;left:-10px;top:578.485px;width:344px;height:1px;background:#8ea9db"></div><div style="position:absolute;left:-10px;top:578.985px;width:344px;height:16.171px;background:#d9e1f2"></div><div style="position:absolute;left:-10px;top:594.6560000000001px;width:344px;height:1px;background:#8ea9db"></div><div style="position:absolute;left:14.5px;top:-0.17099999999999227px;width:13px;height:11px;background:#4a4a4a;opacity:0.42"></div><div style="position:absolute;left:99.0px;top:-0.17099999999999227px;width:16px;height:11px;background:#4a4a4a;opacity:0.42"></div><div style="position:absolute;left:191.0px;top:-0.17099999999999227px;width:16px;height:11px;background:#4a4a4a;opacity:0.42"></div><div style="position:absolute;left:280.5px;top:-0.17099999999999227px;width:15px;height:11px;background:#4a4a4a;opacity:0.42"></div><div style="position:absolute;left:14.5px;top:16.0px;width:13px;height:11px;background:#4a4a4a;opacity:0.42"></div><div style="position:absolute;left:99.0px;top:16.0px;width:16px;height:11px;background:#4a4a4a;opacity:0.42"></div><div style="position:absolute;left:191.0px;top:16.0px;width:16px;height:11px;background:#4a4a4a;opacity:0.42"></div><div style="position:absolute;left:280.5px;top:16.0px;width:15px;height:11px;background:#4a4a4a;opacity:0.42"></div><div style="position:absolute;left:14.5px;top:32.17099999999999px;width:13px;height:11px;background:#4a4a4a;opacity:0.42"></div><div style="position:absolute;left:99.0px;top:32.17099999999999px;width:16px;height:11px;background:#4a4a4a;opacity:0.42"></div><div style="position:absolute;left:191.0px;top:32.17099999999999px;width:16px;height:11px;background:#4a4a4a;opacity:0.42"></div><div style="position:absolute;left:280.5px;top:32.17099999999999px;width:15px;height:11px;background:#4a4a4a;opacity:0.42"></div><div style="position:absolute;left:14.5px;top:48.341999999999985px;width:13px;height:11px;background:#4a4a4a;opacity:0.42"></div><div style="position:absolute;left:99.0px;top:48.341999999999985px;width:16px;height:11px;background:#4a4a4a;opacity:0.42"></div><div style="position:absolute;left:191.0px;top:48.341999999999985px;width:16px;height:11px;background:#4a4a4a;opacity:0.42"></div><div style="position:absolute;left:280.5px;top:48.341999999999985px;width:15px;height:11px;background:#4a4a4a;opacity:0.42"></div><div style="position:absolute;left:14.5px;top:64.513px;width:13px;height:11px;background:#4a4a4a;opacity:0.42"></div><div style="position:absolute;left:99.0px;top:64.513px;width:16px;height:11px;background:#4a4a4a;opacity:0.42"></div><div style="position:absolute;left:191.0px;top:64.513px;width:16px;height:11px;background:#4a4a4a;opacity:0.42"></div><div style="position:absolute;left:280.5px;top:64.513px;width:15px;height:11px;background:#4a4a4a;opacity:0.42"></div><div style="position:absolute;left:14.5px;top:80.684px;width:13px;height:11px;background:#4a4a4a;opacity:0.42"></div><div style="position:absolute;left:99.0px;top:80.684px;width:16px;height:11px;background:#4a4a4a;opacity:0.42"></div><div style="position:absolute;left:191.0px;top:80.684px;width:16px;height:11px;background:#4a4a4a;opacity:0.42"></div><div style="position:absolute;left:280.5px;top:80.684px;width:15px;height:11px;background:#4a4a4a;opacity:0.42"></div><div style="position:absolute;left:14.5px;top:96.85499999999999px;width:13px;height:11px;background:#4a4a4a;opacity:0.42"></div><div style="position:absolute;left:99.0px;top:96.85499999999999px;width:16px;height:11px;background:#4a4a4a;opacity:0.42"></div><div style="position:absolute;left:191.0px;top:96.85499999999999px;width:16px;height:11px;background:#4a4a4a;opacity:0.42"></div><div style="position:absolute;left:280.5px;top:96.85499999999999px;width:15px;height:11px;background:#4a4a4a;opacity:0.42"></div><div style="position:absolute;left:14.5px;top:113.02600000000001px;width:13px;height:11px;background:#4a4a4a;opacity:0.42"></div><div style="position:absolute;left:99.0px;top:113.02600000000001px;width:16px;height:11px;background:#4a4a4a;opacity:0.42"></div><div style="position:absolute;left:191.0px;top:113.02600000000001px;width:16px;height:11px;background:#4a4a4a;opacity:0.42"></div><div style="position:absolute;left:280.5px;top:113.02600000000001px;width:15px;height:11px;background:#4a4a4a;opacity:0.42"></div><div style="position:absolute;left:14.5px;top:129.197px;width:13px;height:11px;background:#4a4a4a;opacity:0.42"></div><div style="position:absolute;left:99.0px;top:129.197px;width:16px;height:11px;background:#4a4a4a;opacity:0.42"></div><div style="position:absolute;left:191.0px;top:129.197px;width:16px;height:11px;background:#4a4a4a;opacity:0.42"></div><div style="position:absolute;left:280.5px;top:129.197px;width:15px;height:11px;background:#4a4a4a;opacity:0.42"></div><div style="position:absolute;left:14.5px;top:145.368px;width:13px;height:11px;background:#4a4a4a;opacity:0.42"></div><div style="position:absolute;left:99.0px;top:145.368px;width:16px;height:11px;background:#4a4a4a;opacity:0.42"></div><div style="position:absolute;left:191.0px;top:145.368px;width:16px;height:11px;background:#4a4a4a;opacity:0.42"></div><div style="position:absolute;left:280.5px;top:145.368px;width:15px;height:11px;background:#4a4a4a;opacity:0.42"></div><div style="position:absolute;left:14.5px;top:161.539px;width:13px;height:11px;background:#4a4a4a;opacity:0.42"></div><div style="position:absolute;left:99.0px;top:161.539px;width:16px;height:11px;background:#4a4a4a;opacity:0.42"></div><div style="position:absolute;left:191.0px;top:161.539px;width:16px;height:11px;background:#4a4a4a;opacity:0.42"></div><div style="position:absolute;left:280.5px;top:161.539px;width:15px;height:11px;background:#4a4a4a;opacity:0.42"></div><div style="position:absolute;left:14.5px;top:177.70999999999998px;width:13px;height:11px;background:#4a4a4a;opacity:0.42"></div><div style="position:absolute;left:99.0px;top:177.70999999999998px;width:16px;height:11px;background:#4a4a4a;opacity:0.42"></div><div style="position:absolute;left:191.0px;top:177.70999999999998px;width:16px;height:11px;background:#4a4a4a;opacity:0.42"></div><div style="position:absolute;left:280.5px;top:177.70999999999998px;width:15px;height:11px;background:#4a4a4a;opacity:0.42"></div><div style="position:absolute;left:14.5px;top:193.88099999999997px;width:13px;height:11px;background:#4a4a4a;opacity:0.42"></div><div style="position:absolute;left:99.0px;top:193.88099999999997px;width:16px;height:11px;background:#4a4a4a;opacity:0.42"></div><div style="position:absolute;left:191.0px;top:193.88099999999997px;width:16px;height:11px;background:#4a4a4a;opacity:0.42"></div><div style="position:absolute;left:280.5px;top:193.88099999999997px;width:15px;height:11px;background:#4a4a4a;opacity:0.42"></div><div style="position:absolute;left:14.5px;top:210.05200000000002px;width:13px;height:11px;background:#4a4a4a;opacity:0.42"></div><div style="position:absolute;left:99.0px;top:210.05200000000002px;width:16px;height:11px;background:#4a4a4a;opacity:0.42"></div><div style="position:absolute;left:191.0px;top:210.05200000000002px;width:16px;height:11px;background:#4a4a4a;opacity:0.42"></div><div style="position:absolute;left:280.5px;top:210.05200000000002px;width:15px;height:11px;background:#4a4a4a;opacity:0.42"></div><div style="position:absolute;left:14.5px;top:226.22299999999996px;width:13px;height:11px;background:#4a4a4a;opacity:0.42"></div><div style="position:absolute;left:99.0px;top:226.22299999999996px;width:16px;height:11px;background:#4a4a4a;opacity:0.42"></div><div style="position:absolute;left:191.0px;top:226.22299999999996px;width:16px;height:11px;background:#4a4a4a;opacity:0.42"></div><div style="position:absolute;left:280.5px;top:226.22299999999996px;width:15px;height:11px;background:#4a4a4a;opacity:0.42"></div><div style="position:absolute;left:14.5px;top:242.394px;width:13px;height:11px;background:#4a4a4a;opacity:0.42"></div><div style="position:absolute;left:99.0px;top:242.394px;width:16px;height:11px;background:#4a4a4a;opacity:0.42"></div><div style="position:absolute;left:191.0px;top:242.394px;width:16px;height:11px;background:#4a4a4a;opacity:0.42"></div><div style="position:absolute;left:280.5px;top:242.394px;width:15px;height:11px;background:#4a4a4a;opacity:0.42"></div><div style="position:absolute;left:14.5px;top:258.565px;width:13px;height:11px;background:#4a4a4a;opacity:0.42"></div><div style="position:absolute;left:99.0px;top:258.565px;width:16px;height:11px;background:#4a4a4a;opacity:0.42"></div><div style="position:absolute;left:191.0px;top:258.565px;width:16px;height:11px;background:#4a4a4a;opacity:0.42"></div><div style="position:absolute;left:280.5px;top:258.565px;width:15px;height:11px;background:#4a4a4a;opacity:0.42"></div><div style="position:absolute;left:14.5px;top:274.736px;width:13px;height:11px;background:#4a4a4a;opacity:0.42"></div><div style="position:absolute;left:99.0px;top:274.736px;width:16px;height:11px;background:#4a4a4a;opacity:0.42"></div><div style="position:absolute;left:191.0px;top:274.736px;width:16px;height:11px;background:#4a4a4a;opacity:0.42"></div><div style="position:absolute;left:280.5px;top:274.736px;width:15px;height:11px;background:#4a4a4a;opacity:0.42"></div><div style="position:absolute;left:14.5px;top:290.907px;width:13px;height:11px;background:#4a4a4a;opacity:0.42"></div><div style="position:absolute;left:99.0px;top:290.907px;width:16px;height:11px;background:#4a4a4a;opacity:0.42"></div><div style="position:absolute;left:191.0px;top:290.907px;width:16px;height:11px;background:#4a4a4a;opacity:0.42"></div><div style="position:absolute;left:280.5px;top:290.907px;width:15px;height:11px;background:#4a4a4a;opacity:0.42"></div><div style="position:absolute;left:14.5px;top:307.078px;width:13px;height:11px;background:#4a4a4a;opacity:0.42"></div><div style="position:absolute;left:99.0px;top:307.078px;width:16px;height:11px;background:#4a4a4a;opacity:0.42"></div><div style="position:absolute;left:191.0px;top:307.078px;width:16px;height:11px;background:#4a4a4a;opacity:0.42"></div><div style="position:absolute;left:280.5px;top:307.078px;width:15px;height:11px;background:#4a4a4a;opacity:0.42"></div><div style="position:absolute;left:14.5px;top:323.24899999999997px;width:13px;height:11px;background:#4a4a4a;opacity:0.42"></div><div style="position:absolute;left:99.0px;top:323.24899999999997px;width:16px;height:11px;background:#4a4a4a;opacity:0.42"></div><div style="position:absolute;left:191.0px;top:323.24899999999997px;width:16px;height:11px;background:#4a4a4a;opacity:0.42"></div><div style="position:absolute;left:280.5px;top:323.24899999999997px;width:15px;height:11px;background:#4a4a4a;opacity:0.42"></div><div style="position:absolute;left:14.5px;top:339.41999999999996px;width:13px;height:11px;background:#4a4a4a;opacity:0.42"></div><div style="position:absolute;left:99.0px;top:339.41999999999996px;width:16px;height:11px;background:#4a4a4a;opacity:0.42"></div><div style="position:absolute;left:191.0px;top:339.41999999999996px;width:16px;height:11px;background:#4a4a4a;opacity:0.42"></div><div style="position:absolute;left:280.5px;top:339.41999999999996px;width:15px;height:11px;background:#4a4a4a;opacity:0.42"></div><div style="position:absolute;left:14.5px;top:355.591px;width:13px;height:11px;background:#4a4a4a;opacity:0.42"></div><div style="position:absolute;left:99.0px;top:355.591px;width:16px;height:11px;background:#4a4a4a;opacity:0.42"></div><div style="position:absolute;left:191.0px;top:355.591px;width:16px;height:11px;background:#4a4a4a;opacity:0.42"></div><div style="position:absolute;left:280.5px;top:355.591px;width:15px;height:11px;background:#4a4a4a;opacity:0.42"></div><div style="position:absolute;left:14.5px;top:371.76199999999994px;width:13px;height:11px;background:#4a4a4a;opacity:0.42"></div><div style="position:absolute;left:99.0px;top:371.76199999999994px;width:16px;height:11px;background:#4a4a4a;opacity:0.42"></div><div style="position:absolute;left:191.0px;top:371.76199999999994px;width:16px;height:11px;background:#4a4a4a;opacity:0.42"></div><div style="position:absolute;left:280.5px;top:371.76199999999994px;width:15px;height:11px;background:#4a4a4a;opacity:0.42"></div><div style="position:absolute;left:14.5px;top:387.933px;width:13px;height:11px;background:#4a4a4a;opacity:0.42"></div><div style="position:absolute;left:99.0px;top:387.933px;width:16px;height:11px;background:#4a4a4a;opacity:0.42"></div><div style="position:absolute;left:191.0px;top:387.933px;width:16px;height:11px;background:#4a4a4a;opacity:0.42"></div><div style="position:absolute;left:280.5px;top:387.933px;width:15px;height:11px;background:#4a4a4a;opacity:0.42"></div><div style="position:absolute;left:14.5px;top:404.10400000000004px;width:13px;height:11px;background:#4a4a4a;opacity:0.42"></div><div style="position:absolute;left:99.0px;top:404.10400000000004px;width:16px;height:11px;background:#4a4a4a;opacity:0.42"></div><div style="position:absolute;left:191.0px;top:404.10400000000004px;width:16px;height:11px;background:#4a4a4a;opacity:0.42"></div><div style="position:absolute;left:280.5px;top:404.10400000000004px;width:15px;height:11px;background:#4a4a4a;opacity:0.42"></div><div style="position:absolute;left:14.5px;top:420.275px;width:13px;height:11px;background:#4a4a4a;opacity:0.42"></div><div style="position:absolute;left:99.0px;top:420.275px;width:16px;height:11px;background:#4a4a4a;opacity:0.42"></div><div style="position:absolute;left:191.0px;top:420.275px;width:16px;height:11px;background:#4a4a4a;opacity:0.42"></div><div style="position:absolute;left:280.5px;top:420.275px;width:15px;height:11px;background:#4a4a4a;opacity:0.42"></div><div style="position:absolute;left:14.5px;top:436.4459999999999px;width:13px;height:11px;background:#4a4a4a;opacity:0.42"></div><div style="position:absolute;left:99.0px;top:436.4459999999999px;width:16px;height:11px;background:#4a4a4a;opacity:0.42"></div><div style="position:absolute;left:191.0px;top:436.4459999999999px;width:16px;height:11px;background:#4a4a4a;opacity:0.42"></div><div style="position:absolute;left:280.5px;top:436.4459999999999px;width:15px;height:11px;background:#4a4a4a;opacity:0.42"></div><div style="position:absolute;left:14.5px;top:452.61699999999996px;width:13px;height:11px;background:#4a4a4a;opacity:0.42"></div><div style="position:absolute;left:99.0px;top:452.61699999999996px;width:16px;height:11px;background:#4a4a4a;opacity:0.42"></div><div style="position:absolute;left:191.0px;top:452.61699999999996px;width:16px;height:11px;background:#4a4a4a;opacity:0.42"></div><div style="position:absolute;left:280.5px;top:452.61699999999996px;width:15px;height:11px;background:#4a4a4a;opacity:0.42"></div><div style="position:absolute;left:14.5px;top:468.788px;width:13px;height:11px;background:#4a4a4a;opacity:0.42"></div><div style="position:absolute;left:99.0px;top:468.788px;width:16px;height:11px;background:#4a4a4a;opacity:0.42"></div><div style="position:absolute;left:191.0px;top:468.788px;width:16px;height:11px;background:#4a4a4a;opacity:0.42"></div><div style="position:absolute;left:280.5px;top:468.788px;width:15px;height:11px;background:#4a4a4a;opacity:0.42"></div><div style="position:absolute;left:14.5px;top:484.95900000000006px;width:13px;height:11px;background:#4a4a4a;opacity:0.42"></div><div style="position:absolute;left:99.0px;top:484.95900000000006px;width:16px;height:11px;background:#4a4a4a;opacity:0.42"></div><div style="position:absolute;left:191.0px;top:484.95900000000006px;width:16px;height:11px;background:#4a4a4a;opacity:0.42"></div><div style="position:absolute;left:280.5px;top:484.95900000000006px;width:15px;height:11px;background:#4a4a4a;opacity:0.42"></div><div style="position:absolute;left:14.5px;top:501.13px;width:13px;height:11px;background:#4a4a4a;opacity:0.42"></div><div style="position:absolute;left:99.0px;top:501.13px;width:16px;height:11px;background:#4a4a4a;opacity:0.42"></div><div style="position:absolute;left:191.0px;top:501.13px;width:16px;height:11px;background:#4a4a4a;opacity:0.42"></div><div style="position:absolute;left:280.5px;top:501.13px;width:15px;height:11px;background:#4a4a4a;opacity:0.42"></div><div style="position:absolute;left:14.5px;top:517.3009999999999px;width:13px;height:11px;background:#4a4a4a;opacity:0.42"></div><div style="position:absolute;left:99.0px;top:517.3009999999999px;width:16px;height:11px;background:#4a4a4a;opacity:0.42"></div><div style="position:absolute;left:191.0px;top:517.3009999999999px;width:16px;height:11px;background:#4a4a4a;opacity:0.42"></div><div style="position:absolute;left:280.5px;top:517.3009999999999px;width:15px;height:11px;background:#4a4a4a;opacity:0.42"></div><div style="position:absolute;left:14.5px;top:533.472px;width:13px;height:11px;background:#4a4a4a;opacity:0.42"></div><div style="position:absolute;left:99.0px;top:533.472px;width:16px;height:11px;background:#4a4a4a;opacity:0.42"></div><div style="position:absolute;left:191.0px;top:533.472px;width:16px;height:11px;background:#4a4a4a;opacity:0.42"></div><div style="position:absolute;left:280.5px;top:533.472px;width:15px;height:11px;background:#4a4a4a;opacity:0.42"></div><div style="position:absolute;left:14.5px;top:549.643px;width:13px;height:11px;background:#4a4a4a;opacity:0.42"></div><div style="position:absolute;left:99.0px;top:549.643px;width:16px;height:11px;background:#4a4a4a;opacity:0.42"></div><div style="position:absolute;left:191.0px;top:549.643px;width:16px;height:11px;background:#4a4a4a;opacity:0.42"></div><div style="position:absolute;left:280.5px;top:549.643px;width:15px;height:11px;background:#4a4a4a;opacity:0.42"></div><div style="position:absolute;left:14.5px;top:565.814px;width:13px;height:11px;background:#4a4a4a;opacity:0.42"></div><div style="position:absolute;left:99.0px;top:565.814px;width:16px;height:11px;background:#4a4a4a;opacity:0.42"></div><div style="position:absolute;left:191.0px;top:565.814px;width:16px;height:11px;background:#4a4a4a;opacity:0.42"></div><div style="position:absolute;left:280.5px;top:565.814px;width:15px;height:11px;background:#4a4a4a;opacity:0.42"></div><div style="position:absolute;left:14.5px;top:581.985px;width:13px;height:11px;background:#4a4a4a;opacity:0.42"></div><div style="position:absolute;left:99.0px;top:581.985px;width:16px;height:11px;background:#4a4a4a;opacity:0.42"></div><div style="position:absolute;left:191.0px;top:581.985px;width:16px;height:11px;background:#4a4a4a;opacity:0.42"></div><div style="position:absolute;left:280.5px;top:581.985px;width:15px;height:11px;background:#4a4a4a;opacity:0.42"></div></div></div></div><div style="position:absolute;left:0;top:161px;width:1760px;height:587px;overflow:hidden"><div class="t" style="left:1444px;top:583.00px;font-size:11.5px;font-weight:normal;color:#111;"><span style="transform:translateX(-50%) scaleX(1.0000);transform-origin:center">66</span></div><div class="t" style="left:1530px;top:583.00px;font-size:11.5px;font-weight:normal;color:#111;"><span style="transform:translateX(-50%) scaleX(1.0000);transform-origin:center">685</span></div><div class="t" style="left:1622px;top:583.00px;font-size:11.5px;font-weight:normal;color:#111;"><span style="transform:translateX(-50%) scaleX(1.0000);transform-origin:center">145</span></div><div class="t" style="left:1711px;top:583.00px;font-size:11.5px;font-weight:normal;color:#111;"><span style="transform:translateX(-50%) scaleX(1.0000);transform-origin:center">21%</span></div></div><div style="position:absolute;left:0px;top:748px;width:1760px;height:32px;background:linear-gradient(90deg,#e6e7eb,#e5e8eb 50%,#e2e9ec);"></div><div style="position:absolute;left:0px;top:780px;width:1760px;height:4px;background:#f7f7f7;"></div><div style="position:absolute;left:1634px;top:781px;width:41px;height:3px;background:#d4d4d4;"></div><svg style="position:absolute;left:0;top:748px" width="120" height="32"><path d="M31 10 L26 15.5 L31 21" stroke="#333" stroke-width="1.3" fill="none"/><path d="M58 10 L63 15.5 L58 21" stroke="#888" stroke-width="1.3" fill="none"/><circle cx="88" cy="15.5" r="1.5" fill="#222"/><circle cx="92.5" cy="15.5" r="1.5" fill="#222"/><circle cx="97" cy="15.5" r="1.5" fill="#222"/></svg><div style="position:absolute;left:113px;top:752px;width:52px;height:24px;background:#ffff00;border-radius:4px"></div><div class="t" style="left:139px;top:757.00px;font-size:14px;font-weight:normal;color:#111;"><span style="transform:translateX(-50%) scaleX(0.9860);transform-origin:center">latest</span></div><div style="position:absolute;left:169.5px;top:755px;width:1px;height:19px;background:#c8c8c8;"></div><div style="position:absolute;left:174px;top:748px;width:48px;height:28px;background:linear-gradient(#ffffff 15%,#d9efc9);border-radius:0 0 5px 5px;box-shadow:0 0 0 1px #fafafa"></div><div style="position:absolute;left:182px;top:771px;width:31px;height:2px;background:#0b7032;border-radius:1px"></div><div class="t" style="left:197.5px;top:754.00px;font-size:14px;font-weight:normal;color:#222;"><span style="transform:translateX(-50%) scaleX(0.9629);transform-origin:center">2025</span></div><div style="position:absolute;left:226px;top:755px;width:1px;height:19px;background:#c8c8c8;"></div><div style="position:absolute;left:231px;top:752px;width:47px;height:24px;background:#ffd966;border-radius:4px"></div><div class="t" style="left:254px;top:757.00px;font-size:14px;font-weight:normal;color:#111;"><span style="transform:translateX(-50%) scaleX(0.9629);transform-origin:center">2024</span></div><div style="position:absolute;left:282.5px;top:755px;width:1px;height:19px;background:#c8c8c8;"></div><div class="t" style="left:310px;top:757.00px;font-size:14px;font-weight:normal;color:#333;"><span style="transform:translateX(-50%) scaleX(0.9629);transform-origin:center">2023</span></div><div style="position:absolute;left:339.5px;top:755px;width:1px;height:19px;background:#c8c8c8;"></div><div class="t" style="left:354.5px;top:757.00px;font-size:14px;font-weight:normal;color:#333;"><span style="transform:scaleX(1.0014);transform-origin:left">2023-25 publishing schedule</span></div><div style="position:absolute;left:549.5px;top:755px;width:1px;height:19px;background:#c8c8c8;"></div><div class="t" style="left:565px;top:757.00px;font-size:14px;font-weight:normal;color:#333;"><span style="transform:scaleX(1.0025);transform-origin:left">Notes and explanations</span></div><div style="position:absolute;left:727px;top:755px;width:1px;height:19px;background:#c8c8c8;"></div><div class="t" style="left:739px;top:757.00px;font-size:14px;font-weight:normal;color:#333;"><span style="transform:scaleX(0.9596);transform-origin:left">CO2 cost</span></div><div style="position:absolute;left:810px;top:755px;width:1px;height:19px;background:#c8c8c8;"></div><svg style="position:absolute;left:848px;top:753px" width="20" height="20"><path d="M10 4 V16 M4 10 H16" stroke="#333" stroke-width="1.2"/></svg><svg style="position:absolute;left:1582px;top:756px" width="12" height="18"><circle cx="6" cy="4.5" r="1.3" fill="#222"/><circle cx="6" cy="9" r="1.3" fill="#222"/><circle cx="6" cy="13.5" r="1.3" fill="#222"/></svg><div style="position:absolute;left:1605px;top:755px;width:160px;height:16.5px;background:#fafafa;border-radius:8px"></div><svg style="position:absolute;left:1605px;top:755px" width="16" height="17"><path d="M4.5 8.5 L11 4.5 L11 12.5 Z" fill="#6e6e6e"/></svg><div style="position:absolute;left:1621px;top:759px;width:150px;height:8.5px;background:#737373;border-radius:4.5px"></div>
</body></html>
